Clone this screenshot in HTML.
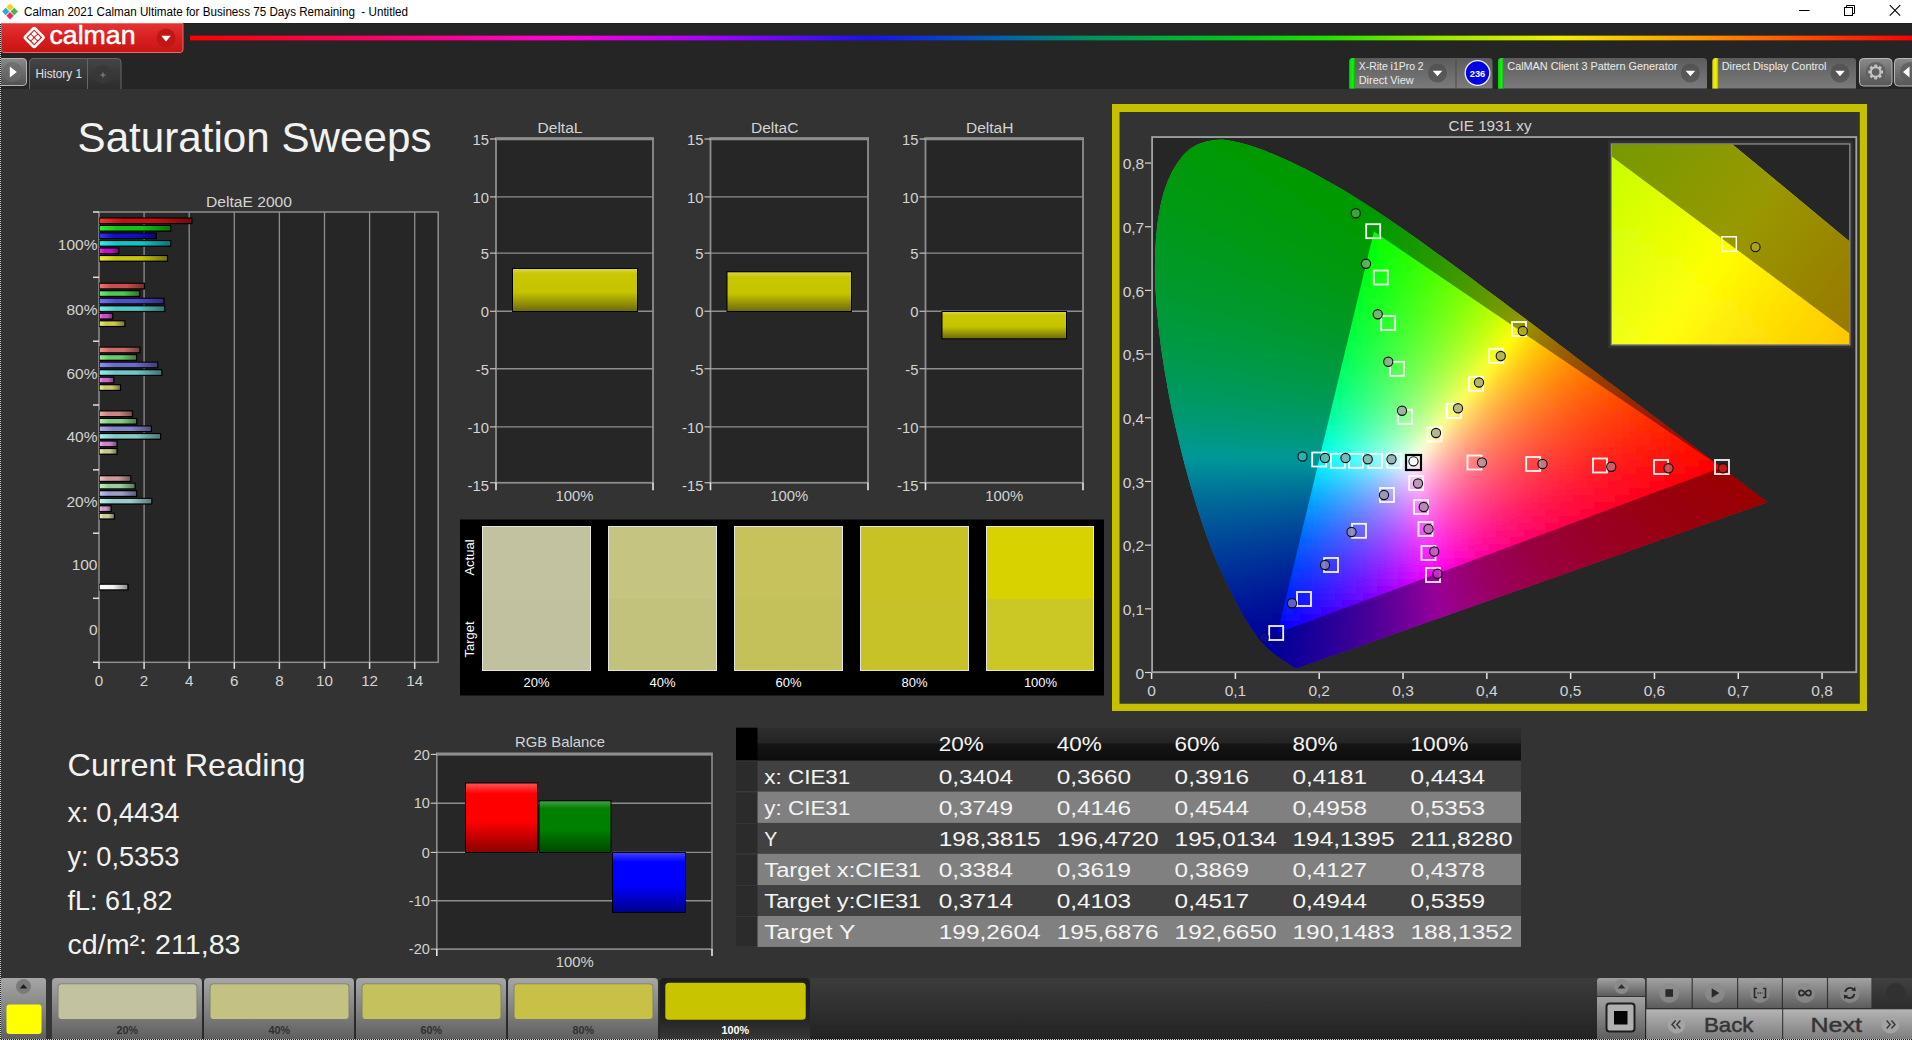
<!DOCTYPE html>
<html lang="en"><head><meta charset="utf-8"><title>Calman 2021 - Saturation Sweeps</title>
<style>
html,body{margin:0;padding:0;background:#333333;overflow:hidden}
body{width:1912px;height:1040px;position:relative;font-family:'Liberation Sans', sans-serif}
svg{display:block;position:absolute;left:0;top:0}
text{font-family:'Liberation Sans', sans-serif}
</style></head><body>
<svg width="1912" height="1040" viewBox="0 0 1912 1040">
<defs>
<linearGradient id="rb" x1="0" x2="1"><stop offset="0" stop-color="#ff0000"/><stop offset="0.1" stop-color="#ff0060"/><stop offset="0.215" stop-color="#ff00d8"/><stop offset="0.3" stop-color="#a800ff"/><stop offset="0.395" stop-color="#1a10f0"/><stop offset="0.47" stop-color="#0060b0"/><stop offset="0.52" stop-color="#009060"/><stop offset="0.6" stop-color="#00c020"/><stop offset="0.66" stop-color="#20e000"/><stop offset="0.73" stop-color="#a0e800"/><stop offset="0.795" stop-color="#f0f000"/><stop offset="0.88" stop-color="#ff9000"/><stop offset="1" stop-color="#ff0000"/></linearGradient>
<linearGradient id="rbv" x1="0" x2="0" y1="0" y2="1"><stop offset="0" stop-color="#252525"/><stop offset="0.25" stop-color="#252525" stop-opacity="0"/><stop offset="0.75" stop-color="#252525" stop-opacity="0"/><stop offset="1" stop-color="#252525"/></linearGradient>
<linearGradient id="cr" x1="0" x2="0" y1="0" y2="1"><stop offset="0" stop-color="#e23434"/><stop offset="0.5" stop-color="#d91f1f"/><stop offset="1" stop-color="#c81414"/></linearGradient>
<linearGradient id="gb" x1="0" x2="0" y1="0" y2="1"><stop offset="0" stop-color="#8a8a8a"/><stop offset="1" stop-color="#505050"/></linearGradient>
<linearGradient id="tb" x1="0" x2="0" y1="0" y2="1"><stop offset="0" stop-color="#454545"/><stop offset="1" stop-color="#2c2c2c"/></linearGradient>
<linearGradient id="pn" x1="0" x2="0" y1="0" y2="1"><stop offset="0" stop-color="#5c5c5c"/><stop offset="1" stop-color="#7b7b7b"/></linearGradient>
<linearGradient id="gs" x1="0" x2="1"><stop offset="0" stop-color="#0ad00a"/><stop offset="0.6" stop-color="#16f016"/><stop offset="1" stop-color="#0aa80a"/></linearGradient>
<linearGradient id="ys" x1="0" x2="1"><stop offset="0" stop-color="#d8d800"/><stop offset="0.6" stop-color="#f4f400"/><stop offset="1" stop-color="#b0b000"/></linearGradient>
<linearGradient id="gb2" x1="0" x2="0" y1="0" y2="1"><stop offset="0" stop-color="#8a8a8a"/><stop offset="1" stop-color="#565656"/></linearGradient>
<linearGradient id="b1" x1="0" x2="1"><stop offset="0" stop-color="rgb(236, 53, 53)"/><stop offset="0.25" stop-color="rgb(198, 15, 15)"/><stop offset="0.6" stop-color="rgb(198, 15, 15)"/><stop offset="1" stop-color="rgb(118, 9, 9)"/></linearGradient>
<linearGradient id="b2" x1="0" x2="1"><stop offset="0" stop-color="rgb(53, 236, 53)"/><stop offset="0.25" stop-color="rgb(15, 198, 15)"/><stop offset="0.6" stop-color="rgb(15, 198, 15)"/><stop offset="1" stop-color="rgb(9, 118, 9)"/></linearGradient>
<linearGradient id="b3" x1="0" x2="1"><stop offset="0" stop-color="rgb(53, 53, 236)"/><stop offset="0.25" stop-color="rgb(15, 15, 198)"/><stop offset="0.6" stop-color="rgb(15, 15, 198)"/><stop offset="1" stop-color="rgb(9, 9, 118)"/></linearGradient>
<linearGradient id="b4" x1="0" x2="1"><stop offset="0" stop-color="rgb(53, 236, 236)"/><stop offset="0.25" stop-color="rgb(15, 198, 198)"/><stop offset="0.6" stop-color="rgb(15, 198, 198)"/><stop offset="1" stop-color="rgb(9, 118, 118)"/></linearGradient>
<linearGradient id="b5" x1="0" x2="1"><stop offset="0" stop-color="rgb(236, 53, 236)"/><stop offset="0.25" stop-color="rgb(198, 15, 198)"/><stop offset="0.6" stop-color="rgb(198, 15, 198)"/><stop offset="1" stop-color="rgb(118, 9, 118)"/></linearGradient>
<linearGradient id="b6" x1="0" x2="1"><stop offset="0" stop-color="rgb(236, 236, 53)"/><stop offset="0.25" stop-color="rgb(198, 198, 15)"/><stop offset="0.6" stop-color="rgb(198, 198, 15)"/><stop offset="1" stop-color="rgb(118, 118, 9)"/></linearGradient>
<linearGradient id="b7" x1="0" x2="1"><stop offset="0" stop-color="rgb(238, 117, 117)"/><stop offset="0.25" stop-color="rgb(200, 79, 79)"/><stop offset="0.6" stop-color="rgb(200, 79, 79)"/><stop offset="1" stop-color="rgb(120, 47, 47)"/></linearGradient>
<linearGradient id="b8" x1="0" x2="1"><stop offset="0" stop-color="rgb(117, 238, 117)"/><stop offset="0.25" stop-color="rgb(79, 200, 79)"/><stop offset="0.6" stop-color="rgb(79, 200, 79)"/><stop offset="1" stop-color="rgb(47, 120, 47)"/></linearGradient>
<linearGradient id="b9" x1="0" x2="1"><stop offset="0" stop-color="rgb(117, 117, 238)"/><stop offset="0.25" stop-color="rgb(79, 79, 200)"/><stop offset="0.6" stop-color="rgb(79, 79, 200)"/><stop offset="1" stop-color="rgb(47, 47, 120)"/></linearGradient>
<linearGradient id="b10" x1="0" x2="1"><stop offset="0" stop-color="rgb(117, 238, 238)"/><stop offset="0.25" stop-color="rgb(79, 200, 200)"/><stop offset="0.6" stop-color="rgb(79, 200, 200)"/><stop offset="1" stop-color="rgb(47, 120, 120)"/></linearGradient>
<linearGradient id="b11" x1="0" x2="1"><stop offset="0" stop-color="rgb(238, 117, 238)"/><stop offset="0.25" stop-color="rgb(200, 79, 200)"/><stop offset="0.6" stop-color="rgb(200, 79, 200)"/><stop offset="1" stop-color="rgb(120, 47, 120)"/></linearGradient>
<linearGradient id="b12" x1="0" x2="1"><stop offset="0" stop-color="rgb(238, 238, 117)"/><stop offset="0.25" stop-color="rgb(200, 200, 79)"/><stop offset="0.6" stop-color="rgb(200, 200, 79)"/><stop offset="1" stop-color="rgb(120, 120, 47)"/></linearGradient>
<linearGradient id="b13" x1="0" x2="1"><stop offset="0" stop-color="rgb(239, 145, 145)"/><stop offset="0.25" stop-color="rgb(201, 107, 107)"/><stop offset="0.6" stop-color="rgb(201, 107, 107)"/><stop offset="1" stop-color="rgb(120, 64, 64)"/></linearGradient>
<linearGradient id="b14" x1="0" x2="1"><stop offset="0" stop-color="rgb(145, 239, 145)"/><stop offset="0.25" stop-color="rgb(107, 201, 107)"/><stop offset="0.6" stop-color="rgb(107, 201, 107)"/><stop offset="1" stop-color="rgb(64, 120, 64)"/></linearGradient>
<linearGradient id="b15" x1="0" x2="1"><stop offset="0" stop-color="rgb(145, 145, 239)"/><stop offset="0.25" stop-color="rgb(107, 107, 201)"/><stop offset="0.6" stop-color="rgb(107, 107, 201)"/><stop offset="1" stop-color="rgb(64, 64, 120)"/></linearGradient>
<linearGradient id="b16" x1="0" x2="1"><stop offset="0" stop-color="rgb(145, 239, 239)"/><stop offset="0.25" stop-color="rgb(107, 201, 201)"/><stop offset="0.6" stop-color="rgb(107, 201, 201)"/><stop offset="1" stop-color="rgb(64, 120, 120)"/></linearGradient>
<linearGradient id="b17" x1="0" x2="1"><stop offset="0" stop-color="rgb(239, 145, 239)"/><stop offset="0.25" stop-color="rgb(201, 107, 201)"/><stop offset="0.6" stop-color="rgb(201, 107, 201)"/><stop offset="1" stop-color="rgb(120, 64, 120)"/></linearGradient>
<linearGradient id="b18" x1="0" x2="1"><stop offset="0" stop-color="rgb(239, 239, 145)"/><stop offset="0.25" stop-color="rgb(201, 201, 107)"/><stop offset="0.6" stop-color="rgb(201, 201, 107)"/><stop offset="1" stop-color="rgb(120, 120, 64)"/></linearGradient>
<linearGradient id="b19" x1="0" x2="1"><stop offset="0" stop-color="rgb(240, 171, 171)"/><stop offset="0.25" stop-color="rgb(202, 133, 133)"/><stop offset="0.6" stop-color="rgb(202, 133, 133)"/><stop offset="1" stop-color="rgb(121, 79, 79)"/></linearGradient>
<linearGradient id="b20" x1="0" x2="1"><stop offset="0" stop-color="rgb(171, 240, 171)"/><stop offset="0.25" stop-color="rgb(133, 202, 133)"/><stop offset="0.6" stop-color="rgb(133, 202, 133)"/><stop offset="1" stop-color="rgb(79, 121, 79)"/></linearGradient>
<linearGradient id="b21" x1="0" x2="1"><stop offset="0" stop-color="rgb(171, 171, 240)"/><stop offset="0.25" stop-color="rgb(133, 133, 202)"/><stop offset="0.6" stop-color="rgb(133, 133, 202)"/><stop offset="1" stop-color="rgb(79, 79, 121)"/></linearGradient>
<linearGradient id="b22" x1="0" x2="1"><stop offset="0" stop-color="rgb(171, 240, 240)"/><stop offset="0.25" stop-color="rgb(133, 202, 202)"/><stop offset="0.6" stop-color="rgb(133, 202, 202)"/><stop offset="1" stop-color="rgb(79, 121, 121)"/></linearGradient>
<linearGradient id="b23" x1="0" x2="1"><stop offset="0" stop-color="rgb(240, 171, 240)"/><stop offset="0.25" stop-color="rgb(202, 133, 202)"/><stop offset="0.6" stop-color="rgb(202, 133, 202)"/><stop offset="1" stop-color="rgb(121, 79, 121)"/></linearGradient>
<linearGradient id="b24" x1="0" x2="1"><stop offset="0" stop-color="rgb(240, 240, 171)"/><stop offset="0.25" stop-color="rgb(202, 202, 133)"/><stop offset="0.6" stop-color="rgb(202, 202, 133)"/><stop offset="1" stop-color="rgb(121, 121, 79)"/></linearGradient>
<linearGradient id="b25" x1="0" x2="1"><stop offset="0" stop-color="rgb(241, 194, 194)"/><stop offset="0.25" stop-color="rgb(203, 156, 156)"/><stop offset="0.6" stop-color="rgb(203, 156, 156)"/><stop offset="1" stop-color="rgb(121, 93, 93)"/></linearGradient>
<linearGradient id="b26" x1="0" x2="1"><stop offset="0" stop-color="rgb(194, 241, 194)"/><stop offset="0.25" stop-color="rgb(156, 203, 156)"/><stop offset="0.6" stop-color="rgb(156, 203, 156)"/><stop offset="1" stop-color="rgb(93, 121, 93)"/></linearGradient>
<linearGradient id="b27" x1="0" x2="1"><stop offset="0" stop-color="rgb(194, 194, 241)"/><stop offset="0.25" stop-color="rgb(156, 156, 203)"/><stop offset="0.6" stop-color="rgb(156, 156, 203)"/><stop offset="1" stop-color="rgb(93, 93, 121)"/></linearGradient>
<linearGradient id="b28" x1="0" x2="1"><stop offset="0" stop-color="rgb(194, 241, 241)"/><stop offset="0.25" stop-color="rgb(156, 203, 203)"/><stop offset="0.6" stop-color="rgb(156, 203, 203)"/><stop offset="1" stop-color="rgb(93, 121, 121)"/></linearGradient>
<linearGradient id="b29" x1="0" x2="1"><stop offset="0" stop-color="rgb(241, 194, 241)"/><stop offset="0.25" stop-color="rgb(203, 156, 203)"/><stop offset="0.6" stop-color="rgb(203, 156, 203)"/><stop offset="1" stop-color="rgb(121, 93, 121)"/></linearGradient>
<linearGradient id="b30" x1="0" x2="1"><stop offset="0" stop-color="rgb(241, 241, 194)"/><stop offset="0.25" stop-color="rgb(203, 203, 156)"/><stop offset="0.6" stop-color="rgb(203, 203, 156)"/><stop offset="1" stop-color="rgb(121, 121, 93)"/></linearGradient>
<linearGradient id="bw" x1="0" x2="1"><stop offset="0" stop-color="#ffffff"/><stop offset="0.5" stop-color="#f0f0f0"/><stop offset="1" stop-color="#8a8a8a"/></linearGradient>
<linearGradient id="yb" x1="0" x2="0" y1="0" y2="1"><stop offset="0" stop-color="#d6d646"/><stop offset="0.12" stop-color="#c9c700"/><stop offset="0.55" stop-color="#c6c400"/><stop offset="1" stop-color="#6e6c0c"/></linearGradient>
<clipPath id="hs"><path d="M1297.7 668.1 L1296.0 668.2 L1295.9 668.2 L1295.8 668.2 L1295.6 668.1 L1295.4 668.0 L1295.2 668.0 L1295.0 667.9 L1294.8 667.7 L1294.5 667.6 L1294.2 667.5 L1294.0 667.3 L1293.7 667.1 L1293.3 666.9 L1293.0 666.7 L1292.6 666.4 L1292.1 666.1 L1291.7 665.8 L1291.2 665.5 L1290.7 665.1 L1290.1 664.8 L1289.6 664.4 L1288.9 663.9 L1288.3 663.5 L1287.6 663.0 L1286.8 662.5 L1286.0 661.9 L1285.0 661.3 L1284.1 660.7 L1283.0 660.0 L1281.9 659.3 L1280.8 658.6 L1279.6 657.7 L1278.3 656.8 L1277.0 655.9 L1275.6 654.8 L1274.1 653.7 L1272.5 652.4 L1270.8 651.0 L1269.1 649.6 L1267.3 647.9 L1265.3 645.9 L1263.2 643.5 L1260.9 640.9 L1258.4 637.9 L1255.8 634.5 L1253.0 630.6 L1250.1 626.3 L1247.0 621.5 L1243.6 616.0 L1240.1 609.8 L1236.4 602.9 L1232.5 595.3 L1228.3 586.7 L1223.8 577.3 L1219.1 567.0 L1214.2 555.7 L1209.4 543.4 L1204.5 529.9 L1199.6 515.3 L1194.7 499.8 L1189.8 483.3 L1185.0 465.7 L1180.3 447.0 L1175.7 427.7 L1171.5 408.3 L1167.7 388.5 L1164.2 368.2 L1161.1 347.9 L1158.7 328.2 L1156.8 308.9 L1155.5 289.9 L1154.9 271.5 L1155.1 254.0 L1156.0 237.4 L1157.7 221.4 L1160.2 206.6 L1163.4 193.2 L1167.6 181.2 L1172.6 170.6 L1178.3 161.4 L1184.4 153.8 L1191.1 148.1 L1198.5 144.1 L1206.2 141.5 L1214.1 139.9 L1222.1 139.6 L1230.5 140.7 L1239.0 142.5 L1247.5 144.8 L1256.0 147.4 L1264.6 150.6 L1273.1 154.1 L1281.4 157.7 L1289.6 161.3 L1297.6 165.2 L1305.6 169.1 L1313.5 173.2 L1321.2 177.4 L1328.9 181.7 L1336.6 186.1 L1344.2 190.6 L1351.8 195.2 L1359.4 200.0 L1367.0 204.8 L1374.5 209.7 L1382.1 214.7 L1389.6 219.8 L1397.1 224.9 L1404.5 230.1 L1412.0 235.3 L1419.5 240.6 L1427.0 246.0 L1434.5 251.4 L1442.0 256.8 L1449.5 262.3 L1457.0 267.8 L1464.5 273.3 L1471.9 278.8 L1479.4 284.4 L1486.8 290.0 L1494.3 295.5 L1501.7 301.1 L1509.2 306.7 L1516.6 312.2 L1524.0 317.8 L1531.3 323.3 L1538.6 328.8 L1545.8 334.3 L1553.0 339.8 L1560.2 345.2 L1567.3 350.6 L1574.3 355.9 L1581.3 361.2 L1588.2 366.4 L1595.0 371.6 L1601.7 376.7 L1608.3 381.7 L1614.9 386.6 L1621.3 391.5 L1627.6 396.3 L1633.8 401.0 L1639.9 405.5 L1645.8 410.0 L1651.5 414.4 L1657.0 418.6 L1662.3 422.6 L1667.5 426.5 L1672.4 430.3 L1677.2 433.9 L1681.9 437.5 L1686.4 440.9 L1690.8 444.2 L1695.0 447.4 L1699.0 450.3 L1702.7 453.2 L1706.3 455.9 L1709.7 458.4 L1713.0 460.9 L1716.1 463.2 L1719.0 465.5 L1721.7 467.6 L1724.3 469.5 L1726.8 471.4 L1729.1 473.2 L1731.3 474.8 L1733.4 476.4 L1735.3 477.9 L1737.1 479.2 L1738.9 480.6 L1740.6 481.8 L1742.1 483.0 L1743.6 484.1 L1745.0 485.2 L1746.4 486.3 L1747.7 487.2 L1748.9 488.2 L1750.1 489.1 L1751.3 490.0 L1752.3 490.8 L1753.4 491.6 L1754.3 492.3 L1755.2 493.0 L1756.1 493.6 L1756.9 494.2 L1757.7 494.8 L1758.4 495.3 L1759.0 495.8 L1759.6 496.2 L1760.2 496.7 L1760.7 497.1 L1761.2 497.5 L1761.7 497.8 L1762.1 498.1 L1762.4 498.4 L1762.7 498.6 L1763.0 498.8 L1763.5 499.2 L1764.4 499.9 L1765.6 500.8 L1766.7 501.6 L1767.5 502.2Z"/></clipPath>
<clipPath id="pl"><rect x="1153" y="138" width="702.4000000000001" height="533.3"/></clipPath>
<filter id="bl" x="-5%" y="-5%" width="110%" height="110%"><feGaussianBlur stdDeviation="4"/></filter>
<clipPath id="ic"><rect x="1612" y="144.6" width="237.20000000000005" height="199.6"/></clipPath>
<filter id="bl2" x="-10%" y="-10%" width="120%" height="120%"><feGaussianBlur stdDeviation="9"/></filter>
<clipPath id="ihs"><path d="M436.9 2415.4 L427.1 2416.2 L426.5 2416.0 L425.7 2415.8 L424.7 2415.4 L423.6 2415.0 L422.5 2414.4 L421.2 2413.7 L419.7 2413.0 L418.2 2412.1 L416.7 2411.2 L415.1 2410.1 L413.3 2408.9 L411.4 2407.6 L409.2 2406.1 L406.8 2404.4 L404.3 2402.6 L401.6 2400.7 L398.8 2398.5 L395.9 2396.3 L392.7 2393.8 L389.3 2391.2 L385.7 2388.6 L381.9 2385.7 L377.7 2382.7 L373.2 2379.4 L368.2 2375.8 L362.8 2372.0 L357.1 2367.8 L351.1 2363.4 L344.8 2358.8 L338.2 2354.0 L331.1 2348.8 L323.7 2343.0 L315.8 2336.7 L307.4 2330.0 L298.6 2322.6 L289.4 2314.4 L279.8 2305.6 L269.9 2296.3 L259.3 2285.6 L247.7 2272.6 L235.1 2257.6 L221.6 2240.8 L207.2 2221.7 L191.9 2199.4 L175.6 2174.6 L158.5 2147.3 L140.2 2116.4 L120.8 2080.8 L100.2 2040.9 L78.5 1996.9 L55.5 1948.0 L31.1 1893.1 L5.0 1832.4 L-22.7 1766.4 L-51.2 1694.2 L-79.6 1615.0 L-108.1 1528.4 L-136.9 1434.8 L-165.6 1335.0 L-193.8 1229.3 L-221.8 1116.4 L-249.9 996.6 L-276.7 872.8 L-301.1 747.9 L-323.3 620.8 L-343.9 490.5 L-361.8 360.4 L-376.0 233.8 L-386.7 110.1 L-394.3 -12.0 L-398.0 -130.2 L-397.1 -242.3 L-391.5 -349.1 L-381.6 -451.4 L-367.2 -546.6 L-348.1 -632.5 L-323.8 -709.2 L-294.6 -777.7 L-261.5 -836.8 L-225.6 -885.2 L-186.3 -921.9 L-143.4 -947.6 L-98.3 -964.4 L-52.2 -974.4 L-4.9 -976.3 L44.0 -969.6 L93.8 -957.6 L143.4 -943.3 L193.0 -926.6 L243.1 -906.1 L292.9 -883.4 L341.8 -860.3 L389.6 -836.9 L436.6 -812.4 L483.0 -787.0 L529.0 -760.9 L574.5 -734.1 L619.5 -706.5 L664.2 -678.2 L708.8 -649.3 L753.4 -619.5 L797.8 -589.1 L842.1 -558.1 L886.2 -526.6 L930.2 -494.5 L974.1 -462.0 L1017.8 -429.0 L1061.6 -395.7 L1105.4 -362.0 L1149.1 -328.0 L1192.8 -293.6 L1236.5 -259.1 L1280.4 -224.2 L1324.3 -189.1 L1368.2 -153.8 L1412.0 -118.4 L1455.7 -82.8 L1499.3 -47.1 L1542.9 -11.4 L1586.4 24.4 L1629.9 60.1 L1673.4 95.8 L1716.8 131.5 L1759.9 167.1 L1802.7 202.6 L1845.4 238.0 L1887.8 273.2 L1929.9 308.2 L1971.7 343.0 L2013.2 377.5 L2054.3 411.8 L2095.0 445.6 L2135.3 479.2 L2175.2 512.4 L2214.5 545.1 L2253.3 577.3 L2291.5 609.0 L2329.2 640.2 L2366.2 670.9 L2402.3 700.9 L2437.5 730.2 L2472.1 759.1 L2505.6 787.1 L2538.0 814.1 L2569.1 840.0 L2599.0 864.9 L2628.0 889.0 L2656.1 912.3 L2683.5 935.1 L2710.0 957.1 L2735.6 978.4 L2760.0 998.6 L2783.1 1017.8 L2805.2 1035.9 L2826.2 1053.2 L2846.2 1069.8 L2865.2 1085.6 L2883.1 1100.5 L2900.1 1114.8 L2916.3 1128.3 L2931.5 1141.0 L2945.8 1152.9 L2959.3 1164.2 L2972.1 1174.9 L2984.3 1184.9 L2995.7 1194.3 L3006.5 1203.2 L3016.7 1211.7 L3026.4 1219.8 L3035.5 1227.4 L3044.2 1234.6 L3052.5 1241.6 L3060.5 1248.2 L3068.1 1254.6 L3075.4 1260.7 L3082.4 1266.5 L3089.0 1272.0 L3095.3 1277.3 L3101.2 1282.3 L3106.9 1287.0 L3112.2 1291.3 L3117.3 1295.4 L3122.0 1299.3 L3126.5 1302.9 L3130.6 1306.3 L3134.4 1309.4 L3137.9 1312.4 L3141.2 1315.2 L3144.3 1317.8 L3147.2 1320.2 L3149.9 1322.5 L3152.4 1324.6 L3154.4 1326.2 L3155.9 1327.4 L3157.7 1329.0 L3160.8 1331.5 L3166.0 1335.9 L3172.8 1341.6 L3179.3 1347.0 L3183.8 1350.8Z"/></clipPath>
<linearGradient id="vr" x1="0" x2="0" y1="0" y2="1"><stop offset="0" stop-color="#ff5050"/><stop offset="0.15" stop-color="#ff0000"/><stop offset="0.55" stop-color="#ff0000"/><stop offset="1" stop-color="#8c0000"/></linearGradient>
<linearGradient id="vg" x1="0" x2="0" y1="0" y2="1"><stop offset="0" stop-color="#40a040"/><stop offset="0.15" stop-color="#008000"/><stop offset="0.55" stop-color="#008000"/><stop offset="1" stop-color="#004800"/></linearGradient>
<linearGradient id="vb" x1="0" x2="0" y1="0" y2="1"><stop offset="0" stop-color="#4040ff"/><stop offset="0.15" stop-color="#0000ff"/><stop offset="0.55" stop-color="#0000ff"/><stop offset="1" stop-color="#00008c"/></linearGradient>
<linearGradient id="th" x1="0" x2="0" y1="0" y2="1"><stop offset="0" stop-color="#2e2e2e"/><stop offset="0.45" stop-color="#242424"/><stop offset="0.5" stop-color="#151515"/><stop offset="1" stop-color="#0c0c0c"/></linearGradient>
<linearGradient id="bs" x1="0" x2="0" y1="0" y2="1"><stop offset="0" stop-color="#3c3c3c"/><stop offset="1" stop-color="#222222"/></linearGradient>
<linearGradient id="tl" x1="0" x2="0" y1="0" y2="1"><stop offset="0" stop-color="#a6a6a6"/><stop offset="0.5" stop-color="#848484"/><stop offset="1" stop-color="#5e5e5e"/></linearGradient>
<linearGradient id="tls" x1="0" x2="0" y1="0" y2="1"><stop offset="0" stop-color="#1e1e1e"/><stop offset="0.6" stop-color="#222"/><stop offset="1" stop-color="#383838"/></linearGradient>
<linearGradient id="cb" x1="0" x2="0" y1="0" y2="1"><stop offset="0" stop-color="#a2a2a2"/><stop offset="1" stop-color="#5c5c5c"/></linearGradient>
<linearGradient id="cb2" x1="0" x2="0" y1="0" y2="1"><stop offset="0" stop-color="#b4b4b4"/><stop offset="1" stop-color="#7c7c7c"/></linearGradient>
<linearGradient id="dk" x1="0" x2="0" y1="0" y2="1"><stop offset="0" stop-color="#414141"/><stop offset="1" stop-color="#2c2c2c"/></linearGradient>
</defs>
<rect x="0" y="0" width="1912" height="23" fill="#ffffff" />
<g transform="translate(10,11.5) rotate(45)"><rect x="-5.6" y="-5.6" width="5.2" height="5.2" fill="#f4d21c"/><rect x="0.4" y="-5.6" width="5.2" height="5.2" fill="#43b649"/><rect x="-5.6" y="0.4" width="5.2" height="5.2" fill="#27a9e1"/><rect x="0.4" y="0.4" width="5.2" height="5.2" fill="#ec2a5b"/></g>
<text x="24" y="15.8" font-size="12" fill="#000000" textLength="384" lengthAdjust="spacingAndGlyphs">Calman 2021 Calman Ultimate for Business 75 Days Remaining&#160; - Untitled</text>
<line x1="1799" y1="10.5" x2="1809.5" y2="10.5" stroke="#000" stroke-width="1" />
<rect x="1844.5" y="7.5" width="8" height="8" fill="none" stroke="#000" stroke-width="1"/><path d="M1846.5 7.5v-2h8v8h-2" fill="none" stroke="#000" stroke-width="1"/>
<path d="M1889.8 5.2l10.4 10.4M1900.2 5.2l-10.4 10.4" stroke="#000" stroke-width="1.1" fill="none"/>
<rect x="0" y="23" width="1912" height="66" fill="#252525" />
<line x1="0" y1="23.5" x2="1912" y2="23.5" stroke="#1a1a1a" stroke-width="1" stroke-dasharray="1 1"/>
<rect x="190" y="35" width="1722" height="6" fill="url(#rb)" />
<rect x="190" y="35" width="1722" height="6" fill="url(#rbv)" />
<path d="M1 23.5H183V49.5a3 3 0 0 1 -3 3H4a3 3 0 0 1 -3 -3Z" fill="url(#cr)" stroke="#ea6a6a" stroke-width="1"/>
<g transform="translate(34.2,37.5) rotate(45)" fill="none" stroke="#fff"><rect x="-7" y="-7" width="14" height="14" rx="1.6" stroke-width="2.6"/><rect x="-4.5" y="-4.5" width="4" height="4" rx="0.6" fill="#fff" stroke="none"/><rect x="0.5" y="-4.5" width="4" height="4" rx="0.6" fill="#fff" stroke="none"/><rect x="-4.5" y="0.5" width="4" height="4" rx="0.6" fill="#fff" stroke="none"/><rect x="0.5" y="0.5" width="4" height="4" rx="0.6" fill="#fff" stroke="none"/></g>
<text x="49.5" y="43.8" font-size="25.5" fill="#ffffff" textLength="86" lengthAdjust="spacingAndGlyphs" stroke="#fff" stroke-width="0.5">calman</text>
<circle cx="166" cy="38" r="9.5" fill="#c01616"/><path d="M161.2 35.8h9.6l-4.8 5.6z" fill="#fff"/>
<rect x="-3" y="58.5" width="29.5" height="27" rx="3.5" fill="url(#gb)" stroke="#b4b4b4" stroke-width="1"/><circle cx="12.5" cy="72" r="10" fill="#6a6a6a" opacity="0.7"/><path d="M9.8 66.6v10.8l7-5.4z" fill="#fff"/>
<path d="M29.5 89V62a3.5 3.5 0 0 1 3.5 -3.5H117.5a3.5 3.5 0 0 1 3.5 3.5V89" fill="url(#tb)" stroke="#666" stroke-width="1"/>
<line x1="87.5" y1="59" x2="87.5" y2="89" stroke="#666" stroke-width="1" />
<text x="35.5" y="78" font-size="12" fill="#e2e2e2" textLength="46.5" lengthAdjust="spacingAndGlyphs">History 1</text>
<circle cx="103" cy="74.5" r="9.3" fill="#383838"/><path d="M100.5 75h5M103 72.5v5" stroke="#8a8a8a" stroke-width="1"/>
<path d="M1349.3 88.5V61.5a3.5 3.5 0 0 1 3.5 -3.5H1489.0a3.5 3.5 0 0 1 3.5 3.5V88.5Z" fill="url(#pn)"/>
<path d="M1349.3 88.5V61.5a3.5 3.5 0 0 1 3.5 -3.5H1355.1V88.5Z" fill="url(#gs)"/>
<text x="1358.7" y="70" font-size="10.8" fill="#ececec" textLength="65" lengthAdjust="spacingAndGlyphs">X-Rite i1Pro 2</text>
<text x="1358.7" y="84.2" font-size="10.8" fill="#ececec" textLength="55" lengthAdjust="spacingAndGlyphs">Direct View</text>
<circle cx="1437.5" cy="73" r="9.5" fill="#4c4c4c" opacity="0.65"/><path d="M1432.7 70.8h9.6l-4.8 5.4z" fill="#fff"/>
<line x1="1456" y1="59" x2="1456" y2="88.5" stroke="#4c4c4c" stroke-width="1" />
<circle cx="1477.5" cy="73" r="12.3" fill="#0000e6" stroke="#f0f0f0" stroke-width="1.3"/>
<text x="1477.5" y="76.6" font-size="9.8" fill="#ffffff" text-anchor="middle" textLength="15.5" lengthAdjust="spacingAndGlyphs" font-weight="bold">236</text>
<path d="M1498 88.5V61.5a3.5 3.5 0 0 1 3.5 -3.5H1703.5a3.5 3.5 0 0 1 3.5 3.5V88.5Z" fill="url(#pn)"/>
<path d="M1498 88.5V61.5a3.5 3.5 0 0 1 3.5 -3.5H1503.8V88.5Z" fill="url(#gs)"/>
<text x="1507.3" y="70" font-size="10.8" fill="#ececec" textLength="170" lengthAdjust="spacingAndGlyphs">CalMAN Client 3 Pattern Generator</text>
<circle cx="1690.4" cy="73" r="9.5" fill="#4c4c4c" opacity="0.65"/><path d="M1685.6000000000001 70.8h9.6l-4.8 5.4z" fill="#fff"/>
<path d="M1712.4 88.5V61.5a3.5 3.5 0 0 1 3.5 -3.5H1852.5a3.5 3.5 0 0 1 3.5 3.5V88.5Z" fill="url(#pn)"/>
<path d="M1712.4 88.5V61.5a3.5 3.5 0 0 1 3.5 -3.5H1718.2V88.5Z" fill="url(#ys)"/>
<text x="1721.7" y="70" font-size="10.8" fill="#ececec" textLength="104.8" lengthAdjust="spacingAndGlyphs">Direct Display Control</text>
<circle cx="1840" cy="73" r="9.5" fill="#4c4c4c" opacity="0.65"/><path d="M1835.2 70.8h9.6l-4.8 5.4z" fill="#fff"/>
<rect x="1859.5" y="58.5" width="32.5" height="27.5" rx="4" fill="url(#gb2)" stroke="#b8b8b8" stroke-width="1"/>
<circle cx="1875.7" cy="72" r="10" fill="#5c5c5c" opacity="0.8"/>
<g transform="translate(1875.7,72)" fill="#c4c4c4"><rect x="-1.5" y="-7.4" width="3" height="3.2" transform="rotate(0)"/><rect x="-1.5" y="-7.4" width="3" height="3.2" transform="rotate(45)"/><rect x="-1.5" y="-7.4" width="3" height="3.2" transform="rotate(90)"/><rect x="-1.5" y="-7.4" width="3" height="3.2" transform="rotate(135)"/><rect x="-1.5" y="-7.4" width="3" height="3.2" transform="rotate(180)"/><rect x="-1.5" y="-7.4" width="3" height="3.2" transform="rotate(225)"/><rect x="-1.5" y="-7.4" width="3" height="3.2" transform="rotate(270)"/><rect x="-1.5" y="-7.4" width="3" height="3.2" transform="rotate(315)"/><circle r="4.8" fill="none" stroke="#c4c4c4" stroke-width="2"/></g>
<rect x="1894.5" y="58.5" width="32" height="27.5" rx="4" fill="url(#gb2)" stroke="#b8b8b8" stroke-width="1"/>
<circle cx="1910" cy="72" r="10" fill="#5c5c5c" opacity="0.8"/><path d="M1909.5 66.5v11l-6.5 -5.5z" fill="#fff"/>
<rect x="0" y="89" width="1912" height="889" fill="#333333" />
<text x="77.5" y="152" font-size="42.5" fill="#f2f2f2" textLength="354" lengthAdjust="spacingAndGlyphs">Saturation Sweeps</text>
<text x="249" y="207" font-size="15.5" fill="#d4d4d4" text-anchor="middle" textLength="86" lengthAdjust="spacingAndGlyphs">DeltaE 2000</text>
<rect x="99" y="212" width="339.2" height="450.29999999999995" fill="#262626" />
<line x1="144.1" y1="212" x2="144.1" y2="662.3" stroke="#8e8e8e" stroke-width="1.3" />
<line x1="189.2" y1="212" x2="189.2" y2="662.3" stroke="#8e8e8e" stroke-width="1.3" />
<line x1="234.3" y1="212" x2="234.3" y2="662.3" stroke="#8e8e8e" stroke-width="1.3" />
<line x1="279.4" y1="212" x2="279.4" y2="662.3" stroke="#8e8e8e" stroke-width="1.3" />
<line x1="324.5" y1="212" x2="324.5" y2="662.3" stroke="#8e8e8e" stroke-width="1.3" />
<line x1="369.6" y1="212" x2="369.6" y2="662.3" stroke="#8e8e8e" stroke-width="1.3" />
<line x1="414.7" y1="212" x2="414.7" y2="662.3" stroke="#8e8e8e" stroke-width="1.3" />
<rect x="99" y="212" width="339.2" height="450.29999999999995" fill="none" stroke="#8e8e8e" stroke-width="1.5"/>
<line x1="99.0" y1="662.3" x2="99.0" y2="668.9" stroke="#e0e0e0" stroke-width="1.5" />
<text x="99.0" y="686.2" font-size="15.2" fill="#d4d4d4" text-anchor="middle">0</text>
<line x1="144.1" y1="662.3" x2="144.1" y2="668.9" stroke="#e0e0e0" stroke-width="1.5" />
<text x="144.1" y="686.2" font-size="15.2" fill="#d4d4d4" text-anchor="middle">2</text>
<line x1="189.2" y1="662.3" x2="189.2" y2="668.9" stroke="#e0e0e0" stroke-width="1.5" />
<text x="189.2" y="686.2" font-size="15.2" fill="#d4d4d4" text-anchor="middle">4</text>
<line x1="234.3" y1="662.3" x2="234.3" y2="668.9" stroke="#e0e0e0" stroke-width="1.5" />
<text x="234.3" y="686.2" font-size="15.2" fill="#d4d4d4" text-anchor="middle">6</text>
<line x1="279.4" y1="662.3" x2="279.4" y2="668.9" stroke="#e0e0e0" stroke-width="1.5" />
<text x="279.4" y="686.2" font-size="15.2" fill="#d4d4d4" text-anchor="middle">8</text>
<line x1="324.5" y1="662.3" x2="324.5" y2="668.9" stroke="#e0e0e0" stroke-width="1.5" />
<text x="324.5" y="686.2" font-size="15.2" fill="#d4d4d4" text-anchor="middle">10</text>
<line x1="369.6" y1="662.3" x2="369.6" y2="668.9" stroke="#e0e0e0" stroke-width="1.5" />
<text x="369.6" y="686.2" font-size="15.2" fill="#d4d4d4" text-anchor="middle">12</text>
<line x1="414.7" y1="662.3" x2="414.7" y2="668.9" stroke="#e0e0e0" stroke-width="1.5" />
<text x="414.7" y="686.2" font-size="15.2" fill="#d4d4d4" text-anchor="middle">14</text>
<line x1="93" y1="212" x2="99" y2="212" stroke="#e0e0e0" stroke-width="1.5" />
<line x1="93" y1="277.3" x2="99" y2="277.3" stroke="#e0e0e0" stroke-width="1.5" />
<line x1="93" y1="341.2" x2="99" y2="341.2" stroke="#e0e0e0" stroke-width="1.5" />
<line x1="93" y1="405" x2="99" y2="405" stroke="#e0e0e0" stroke-width="1.5" />
<line x1="93" y1="469.8" x2="99" y2="469.8" stroke="#e0e0e0" stroke-width="1.5" />
<line x1="93" y1="533.2" x2="99" y2="533.2" stroke="#e0e0e0" stroke-width="1.5" />
<line x1="93" y1="598.3" x2="99" y2="598.3" stroke="#e0e0e0" stroke-width="1.5" />
<line x1="93" y1="662.3" x2="99" y2="662.3" stroke="#e0e0e0" stroke-width="1.5" />
<text x="97.5" y="250.1" font-size="15.5" fill="#d4d4d4" text-anchor="end">100%</text>
<text x="97.5" y="315.40000000000003" font-size="15.5" fill="#d4d4d4" text-anchor="end">80%</text>
<text x="97.5" y="379.3" font-size="15.5" fill="#d4d4d4" text-anchor="end">60%</text>
<text x="97.5" y="442.3" font-size="15.5" fill="#d4d4d4" text-anchor="end">40%</text>
<text x="97.5" y="507.1" font-size="15.5" fill="#d4d4d4" text-anchor="end">20%</text>
<text x="97.5" y="570.3000000000001" font-size="15.5" fill="#d4d4d4" text-anchor="end">100</text>
<text x="97.5" y="635.4" font-size="15.5" fill="#d4d4d4" text-anchor="end">0</text>
<rect x="99.2" y="217.4" width="93.3" height="6.8" fill="#000"/>
<rect x="99.8" y="218.5" width="91.5" height="4.5" fill="url(#b1)"/>
<rect x="99.2" y="224.9" width="72.1" height="6.8" fill="#000"/>
<rect x="99.8" y="226.0" width="70.3" height="4.5" fill="url(#b2)"/>
<rect x="99.2" y="232.4" width="57.7" height="6.8" fill="#000"/>
<rect x="99.8" y="233.5" width="55.9" height="4.5" fill="url(#b3)"/>
<rect x="99.2" y="240.0" width="72.1" height="6.8" fill="#000"/>
<rect x="99.8" y="241.1" width="70.3" height="4.5" fill="url(#b4)"/>
<rect x="99.2" y="247.5" width="20.2" height="6.8" fill="#000"/>
<rect x="99.8" y="248.6" width="18.4" height="4.5" fill="url(#b5)"/>
<rect x="99.2" y="255.0" width="68.9" height="6.8" fill="#000"/>
<rect x="99.8" y="256.1" width="67.1" height="4.5" fill="url(#b6)"/>
<rect x="99.2" y="282.7" width="45.9" height="6.8" fill="#000"/>
<rect x="99.8" y="283.8" width="44.1" height="4.5" fill="url(#b7)"/>
<rect x="99.2" y="290.2" width="41.1" height="6.8" fill="#000"/>
<rect x="99.8" y="291.3" width="39.3" height="4.5" fill="url(#b8)"/>
<rect x="99.2" y="297.7" width="65.4" height="6.8" fill="#000"/>
<rect x="99.8" y="298.8" width="63.6" height="4.5" fill="url(#b9)"/>
<rect x="99.2" y="305.3" width="66.2" height="6.8" fill="#000"/>
<rect x="99.8" y="306.4" width="64.4" height="4.5" fill="url(#b10)"/>
<rect x="99.2" y="312.8" width="14.2" height="6.8" fill="#000"/>
<rect x="99.8" y="313.9" width="12.4" height="4.5" fill="url(#b11)"/>
<rect x="99.2" y="320.3" width="26.3" height="6.8" fill="#000"/>
<rect x="99.8" y="321.4" width="24.5" height="4.5" fill="url(#b12)"/>
<rect x="99.2" y="346.6" width="41.3" height="6.8" fill="#000"/>
<rect x="99.8" y="347.7" width="39.5" height="4.5" fill="url(#b13)"/>
<rect x="99.2" y="354.1" width="38.1" height="6.8" fill="#000"/>
<rect x="99.8" y="355.2" width="36.3" height="4.5" fill="url(#b14)"/>
<rect x="99.2" y="361.6" width="59.2" height="6.8" fill="#000"/>
<rect x="99.8" y="362.7" width="57.4" height="4.5" fill="url(#b15)"/>
<rect x="99.2" y="369.2" width="63.2" height="6.8" fill="#000"/>
<rect x="99.8" y="370.3" width="61.4" height="4.5" fill="url(#b16)"/>
<rect x="99.2" y="376.7" width="15.3" height="6.8" fill="#000"/>
<rect x="99.8" y="377.8" width="13.5" height="4.5" fill="url(#b17)"/>
<rect x="99.2" y="384.2" width="21.9" height="6.8" fill="#000"/>
<rect x="99.8" y="385.3" width="20.1" height="4.5" fill="url(#b18)"/>
<rect x="99.2" y="410.4" width="33.9" height="6.8" fill="#000"/>
<rect x="99.8" y="411.5" width="32.1" height="4.5" fill="url(#b19)"/>
<rect x="99.2" y="417.9" width="38.1" height="6.8" fill="#000"/>
<rect x="99.8" y="419.0" width="36.3" height="4.5" fill="url(#b20)"/>
<rect x="99.2" y="425.4" width="52.8" height="6.8" fill="#000"/>
<rect x="99.8" y="426.5" width="51.0" height="4.5" fill="url(#b21)"/>
<rect x="99.2" y="433.0" width="62.0" height="6.8" fill="#000"/>
<rect x="99.8" y="434.1" width="60.2" height="4.5" fill="url(#b22)"/>
<rect x="99.2" y="440.5" width="18.5" height="6.8" fill="#000"/>
<rect x="99.8" y="441.6" width="16.7" height="4.5" fill="url(#b23)"/>
<rect x="99.2" y="448.0" width="18.5" height="6.8" fill="#000"/>
<rect x="99.8" y="449.1" width="16.7" height="4.5" fill="url(#b24)"/>
<rect x="99.2" y="475.2" width="32.2" height="6.8" fill="#000"/>
<rect x="99.8" y="476.3" width="30.4" height="4.5" fill="url(#b25)"/>
<rect x="99.2" y="482.7" width="36.5" height="6.8" fill="#000"/>
<rect x="99.8" y="483.8" width="34.7" height="4.5" fill="url(#b26)"/>
<rect x="99.2" y="490.2" width="38.1" height="6.8" fill="#000"/>
<rect x="99.8" y="491.3" width="36.3" height="4.5" fill="url(#b27)"/>
<rect x="99.2" y="497.8" width="53.2" height="6.8" fill="#000"/>
<rect x="99.8" y="498.9" width="51.4" height="4.5" fill="url(#b28)"/>
<rect x="99.2" y="505.3" width="12.6" height="6.8" fill="#000"/>
<rect x="99.8" y="506.4" width="10.8" height="4.5" fill="url(#b29)"/>
<rect x="99.2" y="512.8" width="15.9" height="6.8" fill="#000"/>
<rect x="99.8" y="513.9" width="14.1" height="4.5" fill="url(#b30)"/>
<rect x="99.2" y="583.7" width="29.5" height="6.8" fill="#000"/>
<rect x="99.8" y="584.8" width="27.5" height="4.5" fill="url(#bw)"/>
<rect x="496" y="139" width="157" height="343.75" fill="#262626" />
<line x1="496" y1="196.9" x2="653" y2="196.9" stroke="#8e8e8e" stroke-width="1.4" />
<line x1="496" y1="253.1" x2="653" y2="253.1" stroke="#8e8e8e" stroke-width="1.4" />
<line x1="496" y1="311.25" x2="653" y2="311.25" stroke="#8e8e8e" stroke-width="1.4" />
<line x1="496" y1="368.75" x2="653" y2="368.75" stroke="#8e8e8e" stroke-width="1.4" />
<line x1="496" y1="426.9" x2="653" y2="426.9" stroke="#8e8e8e" stroke-width="1.4" />
<rect x="496" y="138.4" width="157" height="344.35" fill="none" stroke="#8e8e8e" stroke-width="1.8"/>
<line x1="495.1" y1="138.7" x2="653.9" y2="138.7" stroke="#8e8e8e" stroke-width="3" />
<line x1="490" y1="139" x2="496" y2="139" stroke="#d0d0d0" stroke-width="1.1" />
<text x="489" y="145.2" font-size="14.8" fill="#d4d4d4" text-anchor="end">15</text>
<line x1="490" y1="196.9" x2="496" y2="196.9" stroke="#d0d0d0" stroke-width="1.1" />
<text x="489" y="203.1" font-size="14.8" fill="#d4d4d4" text-anchor="end">10</text>
<line x1="490" y1="253.1" x2="496" y2="253.1" stroke="#d0d0d0" stroke-width="1.1" />
<text x="489" y="259.3" font-size="14.8" fill="#d4d4d4" text-anchor="end">5</text>
<line x1="490" y1="311.25" x2="496" y2="311.25" stroke="#d0d0d0" stroke-width="1.1" />
<text x="489" y="317.45" font-size="14.8" fill="#d4d4d4" text-anchor="end">0</text>
<line x1="490" y1="368.75" x2="496" y2="368.75" stroke="#d0d0d0" stroke-width="1.1" />
<text x="489" y="374.95" font-size="14.8" fill="#d4d4d4" text-anchor="end">-5</text>
<line x1="490" y1="426.9" x2="496" y2="426.9" stroke="#d0d0d0" stroke-width="1.1" />
<text x="489" y="433.09999999999997" font-size="14.8" fill="#d4d4d4" text-anchor="end">-10</text>
<line x1="490" y1="482.75" x2="496" y2="482.75" stroke="#d0d0d0" stroke-width="1.1" />
<text x="489" y="490.95" font-size="14.8" fill="#d4d4d4" text-anchor="end">-15</text>
<line x1="496" y1="482.75" x2="496" y2="490.25" stroke="#e6e6e6" stroke-width="1.6" />
<line x1="653" y1="482.75" x2="653" y2="490.25" stroke="#e6e6e6" stroke-width="1.6" />
<text x="560.0" y="133" font-size="15.5" fill="#d4d4d4" text-anchor="middle">DeltaL</text>
<text x="574.5" y="500.6" font-size="14.5" fill="#d4d4d4" text-anchor="middle" textLength="38" lengthAdjust="spacingAndGlyphs">100%</text>
<rect x="512" y="268" width="126" height="44" fill="#000"/>
<rect x="513" y="269" width="124" height="42" fill="url(#yb)"/>
<rect x="710.5" y="139" width="157.5" height="343.75" fill="#262626" />
<line x1="710.5" y1="196.9" x2="868" y2="196.9" stroke="#8e8e8e" stroke-width="1.4" />
<line x1="710.5" y1="253.1" x2="868" y2="253.1" stroke="#8e8e8e" stroke-width="1.4" />
<line x1="710.5" y1="311.25" x2="868" y2="311.25" stroke="#8e8e8e" stroke-width="1.4" />
<line x1="710.5" y1="368.75" x2="868" y2="368.75" stroke="#8e8e8e" stroke-width="1.4" />
<line x1="710.5" y1="426.9" x2="868" y2="426.9" stroke="#8e8e8e" stroke-width="1.4" />
<rect x="710.5" y="138.4" width="157.5" height="344.35" fill="none" stroke="#8e8e8e" stroke-width="1.8"/>
<line x1="709.6" y1="138.7" x2="868.9" y2="138.7" stroke="#8e8e8e" stroke-width="3" />
<line x1="704.5" y1="139" x2="710.5" y2="139" stroke="#d0d0d0" stroke-width="1.1" />
<text x="703.5" y="145.2" font-size="14.8" fill="#d4d4d4" text-anchor="end">15</text>
<line x1="704.5" y1="196.9" x2="710.5" y2="196.9" stroke="#d0d0d0" stroke-width="1.1" />
<text x="703.5" y="203.1" font-size="14.8" fill="#d4d4d4" text-anchor="end">10</text>
<line x1="704.5" y1="253.1" x2="710.5" y2="253.1" stroke="#d0d0d0" stroke-width="1.1" />
<text x="703.5" y="259.3" font-size="14.8" fill="#d4d4d4" text-anchor="end">5</text>
<line x1="704.5" y1="311.25" x2="710.5" y2="311.25" stroke="#d0d0d0" stroke-width="1.1" />
<text x="703.5" y="317.45" font-size="14.8" fill="#d4d4d4" text-anchor="end">0</text>
<line x1="704.5" y1="368.75" x2="710.5" y2="368.75" stroke="#d0d0d0" stroke-width="1.1" />
<text x="703.5" y="374.95" font-size="14.8" fill="#d4d4d4" text-anchor="end">-5</text>
<line x1="704.5" y1="426.9" x2="710.5" y2="426.9" stroke="#d0d0d0" stroke-width="1.1" />
<text x="703.5" y="433.09999999999997" font-size="14.8" fill="#d4d4d4" text-anchor="end">-10</text>
<line x1="704.5" y1="482.75" x2="710.5" y2="482.75" stroke="#d0d0d0" stroke-width="1.1" />
<text x="703.5" y="490.95" font-size="14.8" fill="#d4d4d4" text-anchor="end">-15</text>
<line x1="710.5" y1="482.75" x2="710.5" y2="490.25" stroke="#e6e6e6" stroke-width="1.6" />
<line x1="868" y1="482.75" x2="868" y2="490.25" stroke="#e6e6e6" stroke-width="1.6" />
<text x="774.75" y="133" font-size="15.5" fill="#d4d4d4" text-anchor="middle">DeltaC</text>
<text x="789.25" y="500.6" font-size="14.5" fill="#d4d4d4" text-anchor="middle" textLength="38" lengthAdjust="spacingAndGlyphs">100%</text>
<rect x="726.5" y="271.3" width="125.5" height="40.69999999999999" fill="#000"/>
<rect x="727.5" y="272.3" width="123.5" height="38.69999999999999" fill="url(#yb)"/>
<rect x="925.5" y="139" width="157.5" height="343.75" fill="#262626" />
<line x1="925.5" y1="196.9" x2="1083" y2="196.9" stroke="#8e8e8e" stroke-width="1.4" />
<line x1="925.5" y1="253.1" x2="1083" y2="253.1" stroke="#8e8e8e" stroke-width="1.4" />
<line x1="925.5" y1="311.25" x2="1083" y2="311.25" stroke="#8e8e8e" stroke-width="1.4" />
<line x1="925.5" y1="368.75" x2="1083" y2="368.75" stroke="#8e8e8e" stroke-width="1.4" />
<line x1="925.5" y1="426.9" x2="1083" y2="426.9" stroke="#8e8e8e" stroke-width="1.4" />
<rect x="925.5" y="138.4" width="157.5" height="344.35" fill="none" stroke="#8e8e8e" stroke-width="1.8"/>
<line x1="924.6" y1="138.7" x2="1083.9" y2="138.7" stroke="#8e8e8e" stroke-width="3" />
<line x1="919.5" y1="139" x2="925.5" y2="139" stroke="#d0d0d0" stroke-width="1.1" />
<text x="918.5" y="145.2" font-size="14.8" fill="#d4d4d4" text-anchor="end">15</text>
<line x1="919.5" y1="196.9" x2="925.5" y2="196.9" stroke="#d0d0d0" stroke-width="1.1" />
<text x="918.5" y="203.1" font-size="14.8" fill="#d4d4d4" text-anchor="end">10</text>
<line x1="919.5" y1="253.1" x2="925.5" y2="253.1" stroke="#d0d0d0" stroke-width="1.1" />
<text x="918.5" y="259.3" font-size="14.8" fill="#d4d4d4" text-anchor="end">5</text>
<line x1="919.5" y1="311.25" x2="925.5" y2="311.25" stroke="#d0d0d0" stroke-width="1.1" />
<text x="918.5" y="317.45" font-size="14.8" fill="#d4d4d4" text-anchor="end">0</text>
<line x1="919.5" y1="368.75" x2="925.5" y2="368.75" stroke="#d0d0d0" stroke-width="1.1" />
<text x="918.5" y="374.95" font-size="14.8" fill="#d4d4d4" text-anchor="end">-5</text>
<line x1="919.5" y1="426.9" x2="925.5" y2="426.9" stroke="#d0d0d0" stroke-width="1.1" />
<text x="918.5" y="433.09999999999997" font-size="14.8" fill="#d4d4d4" text-anchor="end">-10</text>
<line x1="919.5" y1="482.75" x2="925.5" y2="482.75" stroke="#d0d0d0" stroke-width="1.1" />
<text x="918.5" y="490.95" font-size="14.8" fill="#d4d4d4" text-anchor="end">-15</text>
<line x1="925.5" y1="482.75" x2="925.5" y2="490.25" stroke="#e6e6e6" stroke-width="1.6" />
<line x1="1083" y1="482.75" x2="1083" y2="490.25" stroke="#e6e6e6" stroke-width="1.6" />
<text x="989.75" y="133" font-size="15.5" fill="#d4d4d4" text-anchor="middle">DeltaH</text>
<text x="1004.25" y="500.6" font-size="14.5" fill="#d4d4d4" text-anchor="middle" textLength="38" lengthAdjust="spacingAndGlyphs">100%</text>
<rect x="941.5" y="311" width="125.5" height="28.30000000000001" fill="#000"/>
<rect x="942.5" y="312" width="123.5" height="26.30000000000001" fill="url(#yb)"/>
<rect x="460" y="519.5" width="644" height="176" fill="#000000" />
<rect x="482" y="526" width="109" height="73.5" fill="rgb(194, 194, 161)" />
<rect x="482" y="599" width="109" height="71.5" fill="rgb(193, 193, 159)" />
<rect x="482.5" y="526.5" width="108" height="144" fill="none" stroke="#e4e4dc" stroke-width="1"/>
<text x="536.5" y="686.5" font-size="13" fill="#ffffff" text-anchor="middle">20%</text>
<rect x="608" y="526" width="109" height="73.5" fill="rgb(197, 196, 129)" />
<rect x="608" y="599" width="109" height="71.5" fill="rgb(195, 194, 124)" />
<rect x="608.5" y="526.5" width="108" height="144" fill="none" stroke="#e4e4dc" stroke-width="1"/>
<text x="662.5" y="686.5" font-size="13" fill="#ffffff" text-anchor="middle">40%</text>
<rect x="734" y="526" width="109" height="73.5" fill="rgb(199, 194, 92)" />
<rect x="734" y="599" width="109" height="71.5" fill="rgb(196, 193, 90)" />
<rect x="734.5" y="526.5" width="108" height="144" fill="none" stroke="#e4e4dc" stroke-width="1"/>
<text x="788.5" y="686.5" font-size="13" fill="#ffffff" text-anchor="middle">60%</text>
<rect x="860" y="526" width="109" height="73.5" fill="rgb(201, 194, 36)" />
<rect x="860" y="599" width="109" height="71.5" fill="rgb(198, 194, 40)" />
<rect x="860.5" y="526.5" width="108" height="144" fill="none" stroke="#e4e4dc" stroke-width="1"/>
<text x="914.5" y="686.5" font-size="13" fill="#ffffff" text-anchor="middle">80%</text>
<rect x="986" y="526" width="108" height="73.5" fill="rgb(216, 210, 0)" />
<rect x="986" y="599" width="108" height="71.5" fill="rgb(203, 199, 36)" />
<rect x="986.5" y="526.5" width="107" height="144" fill="none" stroke="#e4e4dc" stroke-width="1"/>
<text x="1040.5" y="686.5" font-size="13" fill="#ffffff" text-anchor="middle">100%</text>
<text transform="translate(474,557.5) rotate(-90)" font-size="13" fill="#fff" text-anchor="middle">Actual</text>
<text transform="translate(474,639.5) rotate(-90)" font-size="13" fill="#fff" text-anchor="middle">Target</text>
<path d="M1112 104H1867V711H1112Z M1119.5 112V703.7H1859.8V112Z" fill="#c5c101" fill-rule="evenodd"/>
<text x="1490" y="131" font-size="15.5" fill="#d4d4d4" text-anchor="middle" textLength="83" lengthAdjust="spacingAndGlyphs">CIE 1931 xy</text>
<rect x="1153" y="138" width="702.4000000000001" height="533.3" fill="#262626" />
<g clip-path="url(#pl)"><g clip-path="url(#hs)"><g filter="url(#bl)" class="cg"><g transform="translate(0,131)"><rect x="1195" width="8" height="8" fill="#00ff06"/><rect x="1202" width="8" height="8" fill="#00ff05"/><rect x="1209" width="8" height="8" fill="#00ff04"/><rect x="1216" width="8" height="8" fill="#00ff02"/><rect x="1223" width="8" height="8" fill="#00ff01"/><rect x="1230" width="8" height="8" fill="#00ff00"/><rect x="1237" width="8" height="8" fill="#00ff00"/></g><g transform="translate(0,138)"><rect x="1188" width="8" height="8" fill="#00ff0a"/><rect x="1195" width="8" height="8" fill="#00ff08"/><rect x="1202" width="8" height="8" fill="#00ff07"/><rect x="1209" width="8" height="8" fill="#00ff06"/><rect x="1216" width="8" height="8" fill="#00ff04"/><rect x="1223" width="8" height="8" fill="#00ff03"/><rect x="1230" width="8" height="8" fill="#00ff02"/><rect x="1237" width="8" height="8" fill="#00ff00"/><rect x="1244" width="8" height="8" fill="#00ff00"/><rect x="1251" width="8" height="8" fill="#00ff00"/><rect x="1258" width="8" height="8" fill="#00ff00"/></g><g transform="translate(0,145)"><rect x="1174" width="8" height="8" fill="#00ff0f"/><rect x="1181" width="8" height="8" fill="#00ff0d"/><rect x="1188" width="8" height="8" fill="#00ff0c"/><rect x="1195" width="8" height="8" fill="#00ff0b"/><rect x="1202" width="8" height="8" fill="#00ff09"/><rect x="1209" width="8" height="8" fill="#00ff08"/><rect x="1216" width="8" height="8" fill="#00ff06"/><rect x="1223" width="8" height="8" fill="#00ff05"/><rect x="1230" width="8" height="8" fill="#00ff04"/><rect x="1237" width="8" height="8" fill="#00ff02"/><rect x="1244" width="8" height="8" fill="#00ff01"/><rect x="1251" width="8" height="8" fill="#00ff00"/><rect x="1258" width="8" height="8" fill="#00ff00"/><rect x="1265" width="8" height="8" fill="#00ff00"/><rect x="1272" width="8" height="8" fill="#00ff00"/><rect x="1279" width="8" height="8" fill="#00ff00"/></g><g transform="translate(0,152)"><rect x="1174" width="8" height="8" fill="#00ff11"/><rect x="1181" width="8" height="8" fill="#00ff0f"/><rect x="1188" width="8" height="8" fill="#00ff0e"/><rect x="1195" width="8" height="8" fill="#00ff0d"/><rect x="1202" width="8" height="8" fill="#00ff0b"/><rect x="1209" width="8" height="8" fill="#00ff0a"/><rect x="1216" width="8" height="8" fill="#00ff09"/><rect x="1223" width="8" height="8" fill="#00ff07"/><rect x="1230" width="8" height="8" fill="#00ff06"/><rect x="1237" width="8" height="8" fill="#00ff04"/><rect x="1244" width="8" height="8" fill="#00ff03"/><rect x="1251" width="8" height="8" fill="#00ff02"/><rect x="1258" width="8" height="8" fill="#00ff00"/><rect x="1265" width="8" height="8" fill="#00ff00"/><rect x="1272" width="8" height="8" fill="#00ff00"/><rect x="1279" width="8" height="8" fill="#00ff00"/><rect x="1286" width="8" height="8" fill="#00ff00"/><rect x="1293" width="8" height="8" fill="#00ff00"/></g><g transform="translate(0,159)"><rect x="1167" width="8" height="8" fill="#00ff14"/><rect x="1174" width="8" height="8" fill="#00ff13"/><rect x="1181" width="8" height="8" fill="#00ff12"/><rect x="1188" width="8" height="8" fill="#00ff10"/><rect x="1195" width="8" height="8" fill="#00ff0f"/><rect x="1202" width="8" height="8" fill="#00ff0e"/><rect x="1209" width="8" height="8" fill="#00ff0c"/><rect x="1216" width="8" height="8" fill="#00ff0b"/><rect x="1223" width="8" height="8" fill="#00ff0a"/><rect x="1230" width="8" height="8" fill="#00ff08"/><rect x="1237" width="8" height="8" fill="#00ff07"/><rect x="1244" width="8" height="8" fill="#00ff05"/><rect x="1251" width="8" height="8" fill="#00ff04"/><rect x="1258" width="8" height="8" fill="#00ff02"/><rect x="1265" width="8" height="8" fill="#00ff01"/><rect x="1272" width="8" height="8" fill="#00ff00"/><rect x="1279" width="8" height="8" fill="#00ff00"/><rect x="1286" width="8" height="8" fill="#00ff00"/><rect x="1293" width="8" height="8" fill="#00ff00"/><rect x="1300" width="8" height="8" fill="#00ff00"/><rect x="1307" width="8" height="8" fill="#00ff00"/></g><g transform="translate(0,166)"><rect x="1160" width="8" height="8" fill="#00ff18"/><rect x="1167" width="8" height="8" fill="#00ff17"/><rect x="1174" width="8" height="8" fill="#00ff15"/><rect x="1181" width="8" height="8" fill="#00ff14"/><rect x="1188" width="8" height="8" fill="#00ff13"/><rect x="1195" width="8" height="8" fill="#00ff11"/><rect x="1202" width="8" height="8" fill="#00ff10"/><rect x="1209" width="8" height="8" fill="#00ff0f"/><rect x="1216" width="8" height="8" fill="#00ff0d"/><rect x="1223" width="8" height="8" fill="#00ff0c"/><rect x="1230" width="8" height="8" fill="#00ff0a"/><rect x="1237" width="8" height="8" fill="#00ff09"/><rect x="1244" width="8" height="8" fill="#00ff08"/><rect x="1251" width="8" height="8" fill="#00ff06"/><rect x="1258" width="8" height="8" fill="#00ff05"/><rect x="1265" width="8" height="8" fill="#00ff03"/><rect x="1272" width="8" height="8" fill="#00ff02"/><rect x="1279" width="8" height="8" fill="#00ff00"/><rect x="1286" width="8" height="8" fill="#00ff00"/><rect x="1293" width="8" height="8" fill="#00ff00"/><rect x="1300" width="8" height="8" fill="#00ff00"/><rect x="1307" width="8" height="8" fill="#00ff00"/><rect x="1314" width="8" height="8" fill="#00ff00"/><rect x="1321" width="8" height="8" fill="#00ff00"/></g><g transform="translate(0,173)"><rect x="1160" width="8" height="8" fill="#00ff1b"/><rect x="1167" width="8" height="8" fill="#00ff19"/><rect x="1174" width="8" height="8" fill="#00ff18"/><rect x="1181" width="8" height="8" fill="#00ff17"/><rect x="1188" width="8" height="8" fill="#00ff15"/><rect x="1195" width="8" height="8" fill="#00ff14"/><rect x="1202" width="8" height="8" fill="#00ff13"/><rect x="1209" width="8" height="8" fill="#00ff11"/><rect x="1216" width="8" height="8" fill="#00ff10"/><rect x="1223" width="8" height="8" fill="#00ff0e"/><rect x="1230" width="8" height="8" fill="#00ff0d"/><rect x="1237" width="8" height="8" fill="#00ff0b"/><rect x="1244" width="8" height="8" fill="#00ff0a"/><rect x="1251" width="8" height="8" fill="#00ff08"/><rect x="1258" width="8" height="8" fill="#00ff07"/><rect x="1265" width="8" height="8" fill="#00ff05"/><rect x="1272" width="8" height="8" fill="#00ff04"/><rect x="1279" width="8" height="8" fill="#00ff02"/><rect x="1286" width="8" height="8" fill="#00ff01"/><rect x="1293" width="8" height="8" fill="#00ff00"/><rect x="1300" width="8" height="8" fill="#00ff00"/><rect x="1307" width="8" height="8" fill="#00ff00"/><rect x="1314" width="8" height="8" fill="#00ff00"/><rect x="1321" width="8" height="8" fill="#00ff00"/><rect x="1328" width="8" height="8" fill="#00ff00"/></g><g transform="translate(0,180)"><rect x="1160" width="8" height="8" fill="#00ff1d"/><rect x="1167" width="8" height="8" fill="#00ff1c"/><rect x="1174" width="8" height="8" fill="#00ff1a"/><rect x="1181" width="8" height="8" fill="#00ff19"/><rect x="1188" width="8" height="8" fill="#00ff18"/><rect x="1195" width="8" height="8" fill="#00ff16"/><rect x="1202" width="8" height="8" fill="#00ff15"/><rect x="1209" width="8" height="8" fill="#00ff14"/><rect x="1216" width="8" height="8" fill="#00ff12"/><rect x="1223" width="8" height="8" fill="#00ff11"/><rect x="1230" width="8" height="8" fill="#00ff0f"/><rect x="1237" width="8" height="8" fill="#00ff0e"/><rect x="1244" width="8" height="8" fill="#00ff0c"/><rect x="1251" width="8" height="8" fill="#00ff0b"/><rect x="1258" width="8" height="8" fill="#00ff09"/><rect x="1265" width="8" height="8" fill="#00ff08"/><rect x="1272" width="8" height="8" fill="#00ff06"/><rect x="1279" width="8" height="8" fill="#00ff05"/><rect x="1286" width="8" height="8" fill="#00ff03"/><rect x="1293" width="8" height="8" fill="#00ff02"/><rect x="1300" width="8" height="8" fill="#00ff00"/><rect x="1307" width="8" height="8" fill="#00ff00"/><rect x="1314" width="8" height="8" fill="#00ff00"/><rect x="1321" width="8" height="8" fill="#00ff00"/><rect x="1328" width="8" height="8" fill="#00ff00"/><rect x="1335" width="8" height="8" fill="#00ff00"/><rect x="1342" width="8" height="8" fill="#00ff00"/></g><g transform="translate(0,187)"><rect x="1153" width="8" height="8" fill="#00ff21"/><rect x="1160" width="8" height="8" fill="#00ff20"/><rect x="1167" width="8" height="8" fill="#00ff1e"/><rect x="1174" width="8" height="8" fill="#00ff1d"/><rect x="1181" width="8" height="8" fill="#00ff1c"/><rect x="1188" width="8" height="8" fill="#00ff1a"/><rect x="1195" width="8" height="8" fill="#00ff19"/><rect x="1202" width="8" height="8" fill="#00ff18"/><rect x="1209" width="8" height="8" fill="#00ff16"/><rect x="1216" width="8" height="8" fill="#00ff15"/><rect x="1223" width="8" height="8" fill="#00ff13"/><rect x="1230" width="8" height="8" fill="#00ff12"/><rect x="1237" width="8" height="8" fill="#00ff10"/><rect x="1244" width="8" height="8" fill="#00ff0f"/><rect x="1251" width="8" height="8" fill="#00ff0d"/><rect x="1258" width="8" height="8" fill="#00ff0c"/><rect x="1265" width="8" height="8" fill="#00ff0a"/><rect x="1272" width="8" height="8" fill="#00ff09"/><rect x="1279" width="8" height="8" fill="#00ff07"/><rect x="1286" width="8" height="8" fill="#00ff06"/><rect x="1293" width="8" height="8" fill="#00ff04"/><rect x="1300" width="8" height="8" fill="#00ff02"/><rect x="1307" width="8" height="8" fill="#00ff01"/><rect x="1314" width="8" height="8" fill="#00ff00"/><rect x="1321" width="8" height="8" fill="#00ff00"/><rect x="1328" width="8" height="8" fill="#00ff00"/><rect x="1335" width="8" height="8" fill="#00ff00"/><rect x="1342" width="8" height="8" fill="#00ff00"/><rect x="1349" width="8" height="8" fill="#00ff00"/><rect x="1356" width="8" height="8" fill="#00ff00"/></g><g transform="translate(0,194)"><rect x="1153" width="8" height="8" fill="#00ff24"/><rect x="1160" width="8" height="8" fill="#00ff22"/><rect x="1167" width="8" height="8" fill="#00ff21"/><rect x="1174" width="8" height="8" fill="#00ff20"/><rect x="1181" width="8" height="8" fill="#00ff1e"/><rect x="1188" width="8" height="8" fill="#00ff1d"/><rect x="1195" width="8" height="8" fill="#00ff1c"/><rect x="1202" width="8" height="8" fill="#00ff1a"/><rect x="1209" width="8" height="8" fill="#00ff19"/><rect x="1216" width="8" height="8" fill="#00ff17"/><rect x="1223" width="8" height="8" fill="#00ff16"/><rect x="1230" width="8" height="8" fill="#00ff14"/><rect x="1237" width="8" height="8" fill="#00ff13"/><rect x="1244" width="8" height="8" fill="#00ff12"/><rect x="1251" width="8" height="8" fill="#00ff10"/><rect x="1258" width="8" height="8" fill="#00ff0e"/><rect x="1265" width="8" height="8" fill="#00ff0d"/><rect x="1272" width="8" height="8" fill="#00ff0b"/><rect x="1279" width="8" height="8" fill="#00ff0a"/><rect x="1286" width="8" height="8" fill="#00ff08"/><rect x="1293" width="8" height="8" fill="#00ff07"/><rect x="1300" width="8" height="8" fill="#00ff05"/><rect x="1307" width="8" height="8" fill="#00ff03"/><rect x="1314" width="8" height="8" fill="#00ff01"/><rect x="1321" width="8" height="8" fill="#00ff00"/><rect x="1328" width="8" height="8" fill="#00ff00"/><rect x="1335" width="8" height="8" fill="#00ff00"/><rect x="1342" width="8" height="8" fill="#00ff00"/><rect x="1349" width="8" height="8" fill="#00ff00"/><rect x="1356" width="8" height="8" fill="#00ff00"/><rect x="1363" width="8" height="8" fill="#00ff00"/></g><g transform="translate(0,201)"><rect x="1153" width="8" height="8" fill="#00ff26"/><rect x="1160" width="8" height="8" fill="#00ff25"/><rect x="1167" width="8" height="8" fill="#00ff24"/><rect x="1174" width="8" height="8" fill="#00ff22"/><rect x="1181" width="8" height="8" fill="#00ff21"/><rect x="1188" width="8" height="8" fill="#00ff20"/><rect x="1195" width="8" height="8" fill="#00ff1e"/><rect x="1202" width="8" height="8" fill="#00ff1d"/><rect x="1209" width="8" height="8" fill="#00ff1c"/><rect x="1216" width="8" height="8" fill="#00ff1a"/><rect x="1223" width="8" height="8" fill="#00ff19"/><rect x="1230" width="8" height="8" fill="#00ff17"/><rect x="1237" width="8" height="8" fill="#00ff16"/><rect x="1244" width="8" height="8" fill="#00ff14"/><rect x="1251" width="8" height="8" fill="#00ff13"/><rect x="1258" width="8" height="8" fill="#00ff11"/><rect x="1265" width="8" height="8" fill="#00ff10"/><rect x="1272" width="8" height="8" fill="#00ff0e"/><rect x="1279" width="8" height="8" fill="#00ff0c"/><rect x="1286" width="8" height="8" fill="#00ff0b"/><rect x="1293" width="8" height="8" fill="#00ff09"/><rect x="1300" width="8" height="8" fill="#00ff07"/><rect x="1307" width="8" height="8" fill="#00ff06"/><rect x="1314" width="8" height="8" fill="#00ff04"/><rect x="1321" width="8" height="8" fill="#00ff02"/><rect x="1328" width="8" height="8" fill="#00ff01"/><rect x="1335" width="8" height="8" fill="#00ff00"/><rect x="1342" width="8" height="8" fill="#00ff00"/><rect x="1349" width="8" height="8" fill="#00ff00"/><rect x="1356" width="8" height="8" fill="#00ff00"/><rect x="1363" width="8" height="8" fill="#00ff00"/><rect x="1370" width="8" height="8" fill="#00ff00"/><rect x="1377" width="8" height="8" fill="#00ff00"/></g><g transform="translate(0,208)"><rect x="1153" width="8" height="8" fill="#00ff29"/><rect x="1160" width="8" height="8" fill="#00ff28"/><rect x="1167" width="8" height="8" fill="#00ff27"/><rect x="1174" width="8" height="8" fill="#00ff25"/><rect x="1181" width="8" height="8" fill="#00ff24"/><rect x="1188" width="8" height="8" fill="#00ff23"/><rect x="1195" width="8" height="8" fill="#00ff21"/><rect x="1202" width="8" height="8" fill="#00ff20"/><rect x="1209" width="8" height="8" fill="#00ff1e"/><rect x="1216" width="8" height="8" fill="#00ff1d"/><rect x="1223" width="8" height="8" fill="#00ff1b"/><rect x="1230" width="8" height="8" fill="#00ff1a"/><rect x="1237" width="8" height="8" fill="#00ff18"/><rect x="1244" width="8" height="8" fill="#00ff17"/><rect x="1251" width="8" height="8" fill="#00ff15"/><rect x="1258" width="8" height="8" fill="#00ff14"/><rect x="1265" width="8" height="8" fill="#00ff12"/><rect x="1272" width="8" height="8" fill="#00ff11"/><rect x="1279" width="8" height="8" fill="#00ff0f"/><rect x="1286" width="8" height="8" fill="#00ff0d"/><rect x="1293" width="8" height="8" fill="#00ff0c"/><rect x="1300" width="8" height="8" fill="#00ff0a"/><rect x="1307" width="8" height="8" fill="#00ff08"/><rect x="1314" width="8" height="8" fill="#00ff07"/><rect x="1321" width="8" height="8" fill="#00ff05"/><rect x="1328" width="8" height="8" fill="#00ff03"/><rect x="1335" width="8" height="8" fill="#00ff01"/><rect x="1342" width="8" height="8" fill="#00ff00"/><rect x="1349" width="8" height="8" fill="#00ff00"/><rect x="1356" width="8" height="8" fill="#00ff00"/><rect x="1363" width="8" height="8" fill="#00ff00"/><rect x="1370" width="8" height="8" fill="#00ff00"/><rect x="1377" width="8" height="8" fill="#02ff00"/><rect x="1384" width="8" height="8" fill="#07ff00"/></g><g transform="translate(0,215)"><rect x="1146" width="8" height="8" fill="#00ff2e"/><rect x="1153" width="8" height="8" fill="#00ff2c"/><rect x="1160" width="8" height="8" fill="#00ff2b"/><rect x="1167" width="8" height="8" fill="#00ff2a"/><rect x="1174" width="8" height="8" fill="#00ff28"/><rect x="1181" width="8" height="8" fill="#00ff27"/><rect x="1188" width="8" height="8" fill="#00ff26"/><rect x="1195" width="8" height="8" fill="#00ff24"/><rect x="1202" width="8" height="8" fill="#00ff23"/><rect x="1209" width="8" height="8" fill="#00ff21"/><rect x="1216" width="8" height="8" fill="#00ff20"/><rect x="1223" width="8" height="8" fill="#00ff1e"/><rect x="1230" width="8" height="8" fill="#00ff1d"/><rect x="1237" width="8" height="8" fill="#00ff1b"/><rect x="1244" width="8" height="8" fill="#00ff1a"/><rect x="1251" width="8" height="8" fill="#00ff18"/><rect x="1258" width="8" height="8" fill="#00ff17"/><rect x="1265" width="8" height="8" fill="#00ff15"/><rect x="1272" width="8" height="8" fill="#00ff14"/><rect x="1279" width="8" height="8" fill="#00ff12"/><rect x="1286" width="8" height="8" fill="#00ff10"/><rect x="1293" width="8" height="8" fill="#00ff0f"/><rect x="1300" width="8" height="8" fill="#00ff0d"/><rect x="1307" width="8" height="8" fill="#00ff0b"/><rect x="1314" width="8" height="8" fill="#00ff0a"/><rect x="1321" width="8" height="8" fill="#00ff08"/><rect x="1328" width="8" height="8" fill="#00ff06"/><rect x="1335" width="8" height="8" fill="#00ff04"/><rect x="1342" width="8" height="8" fill="#00ff02"/><rect x="1349" width="8" height="8" fill="#00ff01"/><rect x="1356" width="8" height="8" fill="#00ff00"/><rect x="1363" width="8" height="8" fill="#00ff00"/><rect x="1370" width="8" height="8" fill="#00ff00"/><rect x="1377" width="8" height="8" fill="#03ff00"/><rect x="1384" width="8" height="8" fill="#09ff00"/><rect x="1391" width="8" height="8" fill="#0fff00"/><rect x="1398" width="8" height="8" fill="#15ff00"/></g><g transform="translate(0,222)"><rect x="1146" width="8" height="8" fill="#00ff31"/><rect x="1153" width="8" height="8" fill="#00ff2f"/><rect x="1160" width="8" height="8" fill="#00ff2e"/><rect x="1167" width="8" height="8" fill="#00ff2d"/><rect x="1174" width="8" height="8" fill="#00ff2b"/><rect x="1181" width="8" height="8" fill="#00ff2a"/><rect x="1188" width="8" height="8" fill="#00ff29"/><rect x="1195" width="8" height="8" fill="#00ff27"/><rect x="1202" width="8" height="8" fill="#00ff26"/><rect x="1209" width="8" height="8" fill="#00ff24"/><rect x="1216" width="8" height="8" fill="#00ff23"/><rect x="1223" width="8" height="8" fill="#00ff21"/><rect x="1230" width="8" height="8" fill="#00ff20"/><rect x="1237" width="8" height="8" fill="#00ff1e"/><rect x="1244" width="8" height="8" fill="#00ff1d"/><rect x="1251" width="8" height="8" fill="#00ff1b"/><rect x="1258" width="8" height="8" fill="#00ff1a"/><rect x="1265" width="8" height="8" fill="#00ff18"/><rect x="1272" width="8" height="8" fill="#00ff16"/><rect x="1279" width="8" height="8" fill="#00ff15"/><rect x="1286" width="8" height="8" fill="#00ff13"/><rect x="1293" width="8" height="8" fill="#00ff12"/><rect x="1300" width="8" height="8" fill="#00ff10"/><rect x="1307" width="8" height="8" fill="#00ff0e"/><rect x="1314" width="8" height="8" fill="#00ff0c"/><rect x="1321" width="8" height="8" fill="#00ff0b"/><rect x="1328" width="8" height="8" fill="#00ff09"/><rect x="1335" width="8" height="8" fill="#00ff07"/><rect x="1342" width="8" height="8" fill="#00ff05"/><rect x="1349" width="8" height="8" fill="#00ff03"/><rect x="1356" width="8" height="8" fill="#00ff01"/><rect x="1363" width="8" height="8" fill="#00ff00"/><rect x="1370" width="8" height="8" fill="#00ff00"/><rect x="1377" width="8" height="8" fill="#05ff00"/><rect x="1384" width="8" height="8" fill="#0bff00"/><rect x="1391" width="8" height="8" fill="#11ff00"/><rect x="1398" width="8" height="8" fill="#17ff00"/><rect x="1405" width="8" height="8" fill="#1eff00"/></g><g transform="translate(0,229)"><rect x="1146" width="8" height="8" fill="#00ff34"/><rect x="1153" width="8" height="8" fill="#00ff32"/><rect x="1160" width="8" height="8" fill="#00ff31"/><rect x="1167" width="8" height="8" fill="#00ff30"/><rect x="1174" width="8" height="8" fill="#00ff2e"/><rect x="1181" width="8" height="8" fill="#00ff2d"/><rect x="1188" width="8" height="8" fill="#00ff2c"/><rect x="1195" width="8" height="8" fill="#00ff2a"/><rect x="1202" width="8" height="8" fill="#00ff29"/><rect x="1209" width="8" height="8" fill="#00ff27"/><rect x="1216" width="8" height="8" fill="#00ff26"/><rect x="1223" width="8" height="8" fill="#00ff24"/><rect x="1230" width="8" height="8" fill="#00ff23"/><rect x="1237" width="8" height="8" fill="#00ff21"/><rect x="1244" width="8" height="8" fill="#00ff20"/><rect x="1251" width="8" height="8" fill="#00ff1e"/><rect x="1258" width="8" height="8" fill="#00ff1d"/><rect x="1265" width="8" height="8" fill="#00ff1b"/><rect x="1272" width="8" height="8" fill="#00ff1a"/><rect x="1279" width="8" height="8" fill="#00ff18"/><rect x="1286" width="8" height="8" fill="#00ff16"/><rect x="1293" width="8" height="8" fill="#00ff15"/><rect x="1300" width="8" height="8" fill="#00ff13"/><rect x="1307" width="8" height="8" fill="#00ff11"/><rect x="1314" width="8" height="8" fill="#00ff0f"/><rect x="1321" width="8" height="8" fill="#00ff0e"/><rect x="1328" width="8" height="8" fill="#00ff0c"/><rect x="1335" width="8" height="8" fill="#00ff0a"/><rect x="1342" width="8" height="8" fill="#00ff08"/><rect x="1349" width="8" height="8" fill="#00ff06"/><rect x="1356" width="8" height="8" fill="#00ff04"/><rect x="1363" width="8" height="8" fill="#00ff02"/><rect x="1370" width="8" height="8" fill="#00ff00"/><rect x="1377" width="8" height="8" fill="#06ff00"/><rect x="1384" width="8" height="8" fill="#0cff00"/><rect x="1391" width="8" height="8" fill="#13ff00"/><rect x="1398" width="8" height="8" fill="#19ff00"/><rect x="1405" width="8" height="8" fill="#20ff00"/><rect x="1412" width="8" height="8" fill="#27ff00"/><rect x="1419" width="8" height="8" fill="#2eff00"/></g><g transform="translate(0,236)"><rect x="1146" width="8" height="8" fill="#00ff37"/><rect x="1153" width="8" height="8" fill="#00ff36"/><rect x="1160" width="8" height="8" fill="#00ff34"/><rect x="1167" width="8" height="8" fill="#00ff33"/><rect x="1174" width="8" height="8" fill="#00ff32"/><rect x="1181" width="8" height="8" fill="#00ff30"/><rect x="1188" width="8" height="8" fill="#00ff2f"/><rect x="1195" width="8" height="8" fill="#00ff2d"/><rect x="1202" width="8" height="8" fill="#00ff2c"/><rect x="1209" width="8" height="8" fill="#00ff2b"/><rect x="1216" width="8" height="8" fill="#00ff29"/><rect x="1223" width="8" height="8" fill="#00ff28"/><rect x="1230" width="8" height="8" fill="#00ff26"/><rect x="1237" width="8" height="8" fill="#00ff25"/><rect x="1244" width="8" height="8" fill="#00ff23"/><rect x="1251" width="8" height="8" fill="#00ff21"/><rect x="1258" width="8" height="8" fill="#00ff20"/><rect x="1265" width="8" height="8" fill="#00ff1e"/><rect x="1272" width="8" height="8" fill="#00ff1d"/><rect x="1279" width="8" height="8" fill="#00ff1b"/><rect x="1286" width="8" height="8" fill="#00ff19"/><rect x="1293" width="8" height="8" fill="#00ff18"/><rect x="1300" width="8" height="8" fill="#00ff16"/><rect x="1307" width="8" height="8" fill="#00ff14"/><rect x="1314" width="8" height="8" fill="#00ff12"/><rect x="1321" width="8" height="8" fill="#00ff11"/><rect x="1328" width="8" height="8" fill="#00ff0f"/><rect x="1335" width="8" height="8" fill="#00ff0d"/><rect x="1342" width="8" height="8" fill="#00ff0b"/><rect x="1349" width="8" height="8" fill="#00ff09"/><rect x="1356" width="8" height="8" fill="#00ff07"/><rect x="1363" width="8" height="8" fill="#00ff05"/><rect x="1370" width="8" height="8" fill="#01ff03"/><rect x="1377" width="8" height="8" fill="#08ff01"/><rect x="1384" width="8" height="8" fill="#0eff00"/><rect x="1391" width="8" height="8" fill="#15ff00"/><rect x="1398" width="8" height="8" fill="#1bff00"/><rect x="1405" width="8" height="8" fill="#22ff00"/><rect x="1412" width="8" height="8" fill="#29ff00"/><rect x="1419" width="8" height="8" fill="#30ff00"/><rect x="1426" width="8" height="8" fill="#37ff00"/></g><g transform="translate(0,243)"><rect x="1146" width="8" height="8" fill="#00ff3a"/><rect x="1153" width="8" height="8" fill="#00ff39"/><rect x="1160" width="8" height="8" fill="#00ff38"/><rect x="1167" width="8" height="8" fill="#00ff36"/><rect x="1174" width="8" height="8" fill="#00ff35"/><rect x="1181" width="8" height="8" fill="#00ff34"/><rect x="1188" width="8" height="8" fill="#00ff32"/><rect x="1195" width="8" height="8" fill="#00ff31"/><rect x="1202" width="8" height="8" fill="#00ff2f"/><rect x="1209" width="8" height="8" fill="#00ff2e"/><rect x="1216" width="8" height="8" fill="#00ff2c"/><rect x="1223" width="8" height="8" fill="#00ff2b"/><rect x="1230" width="8" height="8" fill="#00ff29"/><rect x="1237" width="8" height="8" fill="#00ff28"/><rect x="1244" width="8" height="8" fill="#00ff26"/><rect x="1251" width="8" height="8" fill="#00ff25"/><rect x="1258" width="8" height="8" fill="#00ff23"/><rect x="1265" width="8" height="8" fill="#00ff22"/><rect x="1272" width="8" height="8" fill="#00ff20"/><rect x="1279" width="8" height="8" fill="#00ff1e"/><rect x="1286" width="8" height="8" fill="#00ff1d"/><rect x="1293" width="8" height="8" fill="#00ff1b"/><rect x="1300" width="8" height="8" fill="#00ff19"/><rect x="1307" width="8" height="8" fill="#00ff17"/><rect x="1314" width="8" height="8" fill="#00ff16"/><rect x="1321" width="8" height="8" fill="#00ff14"/><rect x="1328" width="8" height="8" fill="#00ff12"/><rect x="1335" width="8" height="8" fill="#00ff10"/><rect x="1342" width="8" height="8" fill="#00ff0e"/><rect x="1349" width="8" height="8" fill="#00ff0c"/><rect x="1356" width="8" height="8" fill="#00ff0b"/><rect x="1363" width="8" height="8" fill="#00ff09"/><rect x="1370" width="8" height="8" fill="#03ff07"/><rect x="1377" width="8" height="8" fill="#09ff05"/><rect x="1384" width="8" height="8" fill="#10ff02"/><rect x="1391" width="8" height="8" fill="#17ff00"/><rect x="1398" width="8" height="8" fill="#1eff00"/><rect x="1405" width="8" height="8" fill="#25ff00"/><rect x="1412" width="8" height="8" fill="#2cff00"/><rect x="1419" width="8" height="8" fill="#33ff00"/><rect x="1426" width="8" height="8" fill="#3aff00"/><rect x="1433" width="8" height="8" fill="#41ff00"/></g><g transform="translate(0,250)"><rect x="1146" width="8" height="8" fill="#00ff3e"/><rect x="1153" width="8" height="8" fill="#00ff3c"/><rect x="1160" width="8" height="8" fill="#00ff3b"/><rect x="1167" width="8" height="8" fill="#00ff3a"/><rect x="1174" width="8" height="8" fill="#00ff38"/><rect x="1181" width="8" height="8" fill="#00ff37"/><rect x="1188" width="8" height="8" fill="#00ff36"/><rect x="1195" width="8" height="8" fill="#00ff34"/><rect x="1202" width="8" height="8" fill="#00ff33"/><rect x="1209" width="8" height="8" fill="#00ff31"/><rect x="1216" width="8" height="8" fill="#00ff30"/><rect x="1223" width="8" height="8" fill="#00ff2e"/><rect x="1230" width="8" height="8" fill="#00ff2d"/><rect x="1237" width="8" height="8" fill="#00ff2b"/><rect x="1244" width="8" height="8" fill="#00ff2a"/><rect x="1251" width="8" height="8" fill="#00ff28"/><rect x="1258" width="8" height="8" fill="#00ff27"/><rect x="1265" width="8" height="8" fill="#00ff25"/><rect x="1272" width="8" height="8" fill="#00ff23"/><rect x="1279" width="8" height="8" fill="#00ff22"/><rect x="1286" width="8" height="8" fill="#00ff20"/><rect x="1293" width="8" height="8" fill="#00ff1e"/><rect x="1300" width="8" height="8" fill="#00ff1d"/><rect x="1307" width="8" height="8" fill="#00ff1b"/><rect x="1314" width="8" height="8" fill="#00ff19"/><rect x="1321" width="8" height="8" fill="#00ff17"/><rect x="1328" width="8" height="8" fill="#00ff15"/><rect x="1335" width="8" height="8" fill="#00ff13"/><rect x="1342" width="8" height="8" fill="#00ff12"/><rect x="1349" width="8" height="8" fill="#00ff10"/><rect x="1356" width="8" height="8" fill="#00ff0e"/><rect x="1363" width="8" height="8" fill="#00ff0c"/><rect x="1370" width="8" height="8" fill="#05ff0a"/><rect x="1377" width="8" height="8" fill="#0bff08"/><rect x="1384" width="8" height="8" fill="#12ff06"/><rect x="1391" width="8" height="8" fill="#19ff04"/><rect x="1398" width="8" height="8" fill="#20ff01"/><rect x="1405" width="8" height="8" fill="#27ff00"/><rect x="1412" width="8" height="8" fill="#2eff00"/><rect x="1419" width="8" height="8" fill="#35ff00"/><rect x="1426" width="8" height="8" fill="#3dff00"/><rect x="1433" width="8" height="8" fill="#44ff00"/><rect x="1440" width="8" height="8" fill="#4cff00"/><rect x="1447" width="8" height="8" fill="#54ff00"/></g><g transform="translate(0,257)"><rect x="1146" width="8" height="8" fill="#00ff41"/><rect x="1153" width="8" height="8" fill="#00ff40"/><rect x="1160" width="8" height="8" fill="#00ff3f"/><rect x="1167" width="8" height="8" fill="#00ff3d"/><rect x="1174" width="8" height="8" fill="#00ff3c"/><rect x="1181" width="8" height="8" fill="#00ff3b"/><rect x="1188" width="8" height="8" fill="#00ff39"/><rect x="1195" width="8" height="8" fill="#00ff38"/><rect x="1202" width="8" height="8" fill="#00ff36"/><rect x="1209" width="8" height="8" fill="#00ff35"/><rect x="1216" width="8" height="8" fill="#00ff33"/><rect x="1223" width="8" height="8" fill="#00ff32"/><rect x="1230" width="8" height="8" fill="#00ff30"/><rect x="1237" width="8" height="8" fill="#00ff2f"/><rect x="1244" width="8" height="8" fill="#00ff2d"/><rect x="1251" width="8" height="8" fill="#00ff2c"/><rect x="1258" width="8" height="8" fill="#00ff2a"/><rect x="1265" width="8" height="8" fill="#00ff28"/><rect x="1272" width="8" height="8" fill="#00ff27"/><rect x="1279" width="8" height="8" fill="#00ff25"/><rect x="1286" width="8" height="8" fill="#00ff23"/><rect x="1293" width="8" height="8" fill="#00ff22"/><rect x="1300" width="8" height="8" fill="#00ff20"/><rect x="1307" width="8" height="8" fill="#00ff1e"/><rect x="1314" width="8" height="8" fill="#00ff1c"/><rect x="1321" width="8" height="8" fill="#00ff1b"/><rect x="1328" width="8" height="8" fill="#00ff19"/><rect x="1335" width="8" height="8" fill="#00ff17"/><rect x="1342" width="8" height="8" fill="#00ff15"/><rect x="1349" width="8" height="8" fill="#00ff13"/><rect x="1356" width="8" height="8" fill="#00ff11"/><rect x="1363" width="8" height="8" fill="#00ff0f"/><rect x="1370" width="8" height="8" fill="#06ff0d"/><rect x="1377" width="8" height="8" fill="#0dff0b"/><rect x="1384" width="8" height="8" fill="#14ff09"/><rect x="1391" width="8" height="8" fill="#1bff07"/><rect x="1398" width="8" height="8" fill="#22ff05"/><rect x="1405" width="8" height="8" fill="#29ff03"/><rect x="1412" width="8" height="8" fill="#31ff00"/><rect x="1419" width="8" height="8" fill="#38ff00"/><rect x="1426" width="8" height="8" fill="#40ff00"/><rect x="1433" width="8" height="8" fill="#48ff00"/><rect x="1440" width="8" height="8" fill="#50ff00"/><rect x="1447" width="8" height="8" fill="#58ff00"/><rect x="1454" width="8" height="8" fill="#60ff00"/></g><g transform="translate(0,264)"><rect x="1146" width="8" height="8" fill="#00ff45"/><rect x="1153" width="8" height="8" fill="#00ff44"/><rect x="1160" width="8" height="8" fill="#00ff42"/><rect x="1167" width="8" height="8" fill="#00ff41"/><rect x="1174" width="8" height="8" fill="#00ff40"/><rect x="1181" width="8" height="8" fill="#00ff3e"/><rect x="1188" width="8" height="8" fill="#00ff3d"/><rect x="1195" width="8" height="8" fill="#00ff3b"/><rect x="1202" width="8" height="8" fill="#00ff3a"/><rect x="1209" width="8" height="8" fill="#00ff38"/><rect x="1216" width="8" height="8" fill="#00ff37"/><rect x="1223" width="8" height="8" fill="#00ff36"/><rect x="1230" width="8" height="8" fill="#00ff34"/><rect x="1237" width="8" height="8" fill="#00ff32"/><rect x="1244" width="8" height="8" fill="#00ff31"/><rect x="1251" width="8" height="8" fill="#00ff2f"/><rect x="1258" width="8" height="8" fill="#00ff2e"/><rect x="1265" width="8" height="8" fill="#00ff2c"/><rect x="1272" width="8" height="8" fill="#00ff2a"/><rect x="1279" width="8" height="8" fill="#00ff29"/><rect x="1286" width="8" height="8" fill="#00ff27"/><rect x="1293" width="8" height="8" fill="#00ff25"/><rect x="1300" width="8" height="8" fill="#00ff24"/><rect x="1307" width="8" height="8" fill="#00ff22"/><rect x="1314" width="8" height="8" fill="#00ff20"/><rect x="1321" width="8" height="8" fill="#00ff1e"/><rect x="1328" width="8" height="8" fill="#00ff1c"/><rect x="1335" width="8" height="8" fill="#00ff1a"/><rect x="1342" width="8" height="8" fill="#00ff19"/><rect x="1349" width="8" height="8" fill="#00ff17"/><rect x="1356" width="8" height="8" fill="#00ff15"/><rect x="1363" width="8" height="8" fill="#01ff13"/><rect x="1370" width="8" height="8" fill="#08ff11"/><rect x="1377" width="8" height="8" fill="#0fff0f"/><rect x="1384" width="8" height="8" fill="#16ff0c"/><rect x="1391" width="8" height="8" fill="#1dff0a"/><rect x="1398" width="8" height="8" fill="#25ff08"/><rect x="1405" width="8" height="8" fill="#2cff06"/><rect x="1412" width="8" height="8" fill="#34ff04"/><rect x="1419" width="8" height="8" fill="#3bff01"/><rect x="1426" width="8" height="8" fill="#43ff00"/><rect x="1433" width="8" height="8" fill="#4bff00"/><rect x="1440" width="8" height="8" fill="#53ff00"/><rect x="1447" width="8" height="8" fill="#5bff00"/><rect x="1454" width="8" height="8" fill="#64ff00"/><rect x="1461" width="8" height="8" fill="#6cff00"/><rect x="1468" width="8" height="8" fill="#75ff00"/></g><g transform="translate(0,271)"><rect x="1146" width="8" height="8" fill="#00ff49"/><rect x="1153" width="8" height="8" fill="#00ff47"/><rect x="1160" width="8" height="8" fill="#00ff46"/><rect x="1167" width="8" height="8" fill="#00ff45"/><rect x="1174" width="8" height="8" fill="#00ff43"/><rect x="1181" width="8" height="8" fill="#00ff42"/><rect x="1188" width="8" height="8" fill="#00ff41"/><rect x="1195" width="8" height="8" fill="#00ff3f"/><rect x="1202" width="8" height="8" fill="#00ff3e"/><rect x="1209" width="8" height="8" fill="#00ff3c"/><rect x="1216" width="8" height="8" fill="#00ff3b"/><rect x="1223" width="8" height="8" fill="#00ff39"/><rect x="1230" width="8" height="8" fill="#00ff38"/><rect x="1237" width="8" height="8" fill="#00ff36"/><rect x="1244" width="8" height="8" fill="#00ff35"/><rect x="1251" width="8" height="8" fill="#00ff33"/><rect x="1258" width="8" height="8" fill="#00ff32"/><rect x="1265" width="8" height="8" fill="#00ff30"/><rect x="1272" width="8" height="8" fill="#00ff2e"/><rect x="1279" width="8" height="8" fill="#00ff2d"/><rect x="1286" width="8" height="8" fill="#00ff2b"/><rect x="1293" width="8" height="8" fill="#00ff29"/><rect x="1300" width="8" height="8" fill="#00ff27"/><rect x="1307" width="8" height="8" fill="#00ff26"/><rect x="1314" width="8" height="8" fill="#00ff24"/><rect x="1321" width="8" height="8" fill="#00ff22"/><rect x="1328" width="8" height="8" fill="#00ff20"/><rect x="1335" width="8" height="8" fill="#00ff1e"/><rect x="1342" width="8" height="8" fill="#00ff1c"/><rect x="1349" width="8" height="8" fill="#00ff1a"/><rect x="1356" width="8" height="8" fill="#00ff18"/><rect x="1363" width="8" height="8" fill="#03ff16"/><rect x="1370" width="8" height="8" fill="#0aff14"/><rect x="1377" width="8" height="8" fill="#11ff12"/><rect x="1384" width="8" height="8" fill="#18ff10"/><rect x="1391" width="8" height="8" fill="#20ff0e"/><rect x="1398" width="8" height="8" fill="#27ff0c"/><rect x="1405" width="8" height="8" fill="#2fff0a"/><rect x="1412" width="8" height="8" fill="#37ff07"/><rect x="1419" width="8" height="8" fill="#3fff05"/><rect x="1426" width="8" height="8" fill="#47ff03"/><rect x="1433" width="8" height="8" fill="#4fff00"/><rect x="1440" width="8" height="8" fill="#57ff00"/><rect x="1447" width="8" height="8" fill="#5fff00"/><rect x="1454" width="8" height="8" fill="#68ff00"/><rect x="1461" width="8" height="8" fill="#71ff00"/><rect x="1468" width="8" height="8" fill="#7aff00"/><rect x="1475" width="8" height="8" fill="#83ff00"/></g><g transform="translate(0,278)"><rect x="1146" width="8" height="8" fill="#00ff4d"/><rect x="1153" width="8" height="8" fill="#00ff4b"/><rect x="1160" width="8" height="8" fill="#00ff4a"/><rect x="1167" width="8" height="8" fill="#00ff49"/><rect x="1174" width="8" height="8" fill="#00ff47"/><rect x="1181" width="8" height="8" fill="#00ff46"/><rect x="1188" width="8" height="8" fill="#00ff45"/><rect x="1195" width="8" height="8" fill="#00ff43"/><rect x="1202" width="8" height="8" fill="#00ff42"/><rect x="1209" width="8" height="8" fill="#00ff40"/><rect x="1216" width="8" height="8" fill="#00ff3f"/><rect x="1223" width="8" height="8" fill="#00ff3d"/><rect x="1230" width="8" height="8" fill="#00ff3c"/><rect x="1237" width="8" height="8" fill="#00ff3a"/><rect x="1244" width="8" height="8" fill="#00ff39"/><rect x="1251" width="8" height="8" fill="#00ff37"/><rect x="1258" width="8" height="8" fill="#00ff35"/><rect x="1265" width="8" height="8" fill="#00ff34"/><rect x="1272" width="8" height="8" fill="#00ff32"/><rect x="1279" width="8" height="8" fill="#00ff30"/><rect x="1286" width="8" height="8" fill="#00ff2f"/><rect x="1293" width="8" height="8" fill="#00ff2d"/><rect x="1300" width="8" height="8" fill="#00ff2b"/><rect x="1307" width="8" height="8" fill="#00ff29"/><rect x="1314" width="8" height="8" fill="#00ff28"/><rect x="1321" width="8" height="8" fill="#00ff26"/><rect x="1328" width="8" height="8" fill="#00ff24"/><rect x="1335" width="8" height="8" fill="#00ff22"/><rect x="1342" width="8" height="8" fill="#00ff20"/><rect x="1349" width="8" height="8" fill="#00ff1e"/><rect x="1356" width="8" height="8" fill="#00ff1c"/><rect x="1363" width="8" height="8" fill="#05ff1a"/><rect x="1370" width="8" height="8" fill="#0cff18"/><rect x="1377" width="8" height="8" fill="#13ff16"/><rect x="1384" width="8" height="8" fill="#1bff14"/><rect x="1391" width="8" height="8" fill="#22ff12"/><rect x="1398" width="8" height="8" fill="#2aff0f"/><rect x="1405" width="8" height="8" fill="#32ff0d"/><rect x="1412" width="8" height="8" fill="#3aff0b"/><rect x="1419" width="8" height="8" fill="#42ff09"/><rect x="1426" width="8" height="8" fill="#4aff06"/><rect x="1433" width="8" height="8" fill="#52ff04"/><rect x="1440" width="8" height="8" fill="#5bff01"/><rect x="1447" width="8" height="8" fill="#64ff00"/><rect x="1454" width="8" height="8" fill="#6dff00"/><rect x="1461" width="8" height="8" fill="#76ff00"/><rect x="1468" width="8" height="8" fill="#7fff00"/><rect x="1475" width="8" height="8" fill="#88ff00"/><rect x="1482" width="8" height="8" fill="#92ff00"/></g><g transform="translate(0,285)"><rect x="1146" width="8" height="8" fill="#00ff51"/><rect x="1153" width="8" height="8" fill="#00ff4f"/><rect x="1160" width="8" height="8" fill="#00ff4e"/><rect x="1167" width="8" height="8" fill="#00ff4d"/><rect x="1174" width="8" height="8" fill="#00ff4b"/><rect x="1181" width="8" height="8" fill="#00ff4a"/><rect x="1188" width="8" height="8" fill="#00ff49"/><rect x="1195" width="8" height="8" fill="#00ff47"/><rect x="1202" width="8" height="8" fill="#00ff46"/><rect x="1209" width="8" height="8" fill="#00ff44"/><rect x="1216" width="8" height="8" fill="#00ff43"/><rect x="1223" width="8" height="8" fill="#00ff41"/><rect x="1230" width="8" height="8" fill="#00ff40"/><rect x="1237" width="8" height="8" fill="#00ff3e"/><rect x="1244" width="8" height="8" fill="#00ff3d"/><rect x="1251" width="8" height="8" fill="#00ff3b"/><rect x="1258" width="8" height="8" fill="#00ff3a"/><rect x="1265" width="8" height="8" fill="#00ff38"/><rect x="1272" width="8" height="8" fill="#00ff36"/><rect x="1279" width="8" height="8" fill="#00ff35"/><rect x="1286" width="8" height="8" fill="#00ff33"/><rect x="1293" width="8" height="8" fill="#00ff31"/><rect x="1300" width="8" height="8" fill="#00ff2f"/><rect x="1307" width="8" height="8" fill="#00ff2e"/><rect x="1314" width="8" height="8" fill="#00ff2c"/><rect x="1321" width="8" height="8" fill="#00ff2a"/><rect x="1328" width="8" height="8" fill="#00ff28"/><rect x="1335" width="8" height="8" fill="#00ff26"/><rect x="1342" width="8" height="8" fill="#00ff24"/><rect x="1349" width="8" height="8" fill="#00ff22"/><rect x="1356" width="8" height="8" fill="#00ff20"/><rect x="1363" width="8" height="8" fill="#07ff1e"/><rect x="1370" width="8" height="8" fill="#0eff1c"/><rect x="1377" width="8" height="8" fill="#15ff1a"/><rect x="1384" width="8" height="8" fill="#1dff18"/><rect x="1391" width="8" height="8" fill="#25ff16"/><rect x="1398" width="8" height="8" fill="#2dff13"/><rect x="1405" width="8" height="8" fill="#35ff11"/><rect x="1412" width="8" height="8" fill="#3dff0f"/><rect x="1419" width="8" height="8" fill="#45ff0c"/><rect x="1426" width="8" height="8" fill="#4eff0a"/><rect x="1433" width="8" height="8" fill="#56ff08"/><rect x="1440" width="8" height="8" fill="#5fff05"/><rect x="1447" width="8" height="8" fill="#68ff03"/><rect x="1454" width="8" height="8" fill="#71ff00"/><rect x="1461" width="8" height="8" fill="#7bff00"/><rect x="1468" width="8" height="8" fill="#84ff00"/><rect x="1475" width="8" height="8" fill="#8eff00"/><rect x="1482" width="8" height="8" fill="#98ff00"/><rect x="1489" width="8" height="8" fill="#a2ff00"/><rect x="1496" width="8" height="8" fill="#acff00"/></g><g transform="translate(0,292)"><rect x="1146" width="8" height="8" fill="#00ff55"/><rect x="1153" width="8" height="8" fill="#00ff54"/><rect x="1160" width="8" height="8" fill="#00ff52"/><rect x="1167" width="8" height="8" fill="#00ff51"/><rect x="1174" width="8" height="8" fill="#00ff50"/><rect x="1181" width="8" height="8" fill="#00ff4e"/><rect x="1188" width="8" height="8" fill="#00ff4d"/><rect x="1195" width="8" height="8" fill="#00ff4b"/><rect x="1202" width="8" height="8" fill="#00ff4a"/><rect x="1209" width="8" height="8" fill="#00ff49"/><rect x="1216" width="8" height="8" fill="#00ff47"/><rect x="1223" width="8" height="8" fill="#00ff46"/><rect x="1230" width="8" height="8" fill="#00ff44"/><rect x="1237" width="8" height="8" fill="#00ff43"/><rect x="1244" width="8" height="8" fill="#00ff41"/><rect x="1251" width="8" height="8" fill="#00ff3f"/><rect x="1258" width="8" height="8" fill="#00ff3e"/><rect x="1265" width="8" height="8" fill="#00ff3c"/><rect x="1272" width="8" height="8" fill="#00ff3a"/><rect x="1279" width="8" height="8" fill="#00ff39"/><rect x="1286" width="8" height="8" fill="#00ff37"/><rect x="1293" width="8" height="8" fill="#00ff35"/><rect x="1300" width="8" height="8" fill="#00ff34"/><rect x="1307" width="8" height="8" fill="#00ff32"/><rect x="1314" width="8" height="8" fill="#00ff30"/><rect x="1321" width="8" height="8" fill="#00ff2e"/><rect x="1328" width="8" height="8" fill="#00ff2c"/><rect x="1335" width="8" height="8" fill="#00ff2a"/><rect x="1342" width="8" height="8" fill="#00ff28"/><rect x="1349" width="8" height="8" fill="#00ff26"/><rect x="1356" width="8" height="8" fill="#01ff24"/><rect x="1363" width="8" height="8" fill="#08ff22"/><rect x="1370" width="8" height="8" fill="#10ff20"/><rect x="1377" width="8" height="8" fill="#18ff1e"/><rect x="1384" width="8" height="8" fill="#20ff1c"/><rect x="1391" width="8" height="8" fill="#28ff1a"/><rect x="1398" width="8" height="8" fill="#30ff18"/><rect x="1405" width="8" height="8" fill="#38ff15"/><rect x="1412" width="8" height="8" fill="#40ff13"/><rect x="1419" width="8" height="8" fill="#49ff11"/><rect x="1426" width="8" height="8" fill="#52ff0e"/><rect x="1433" width="8" height="8" fill="#5bff0c"/><rect x="1440" width="8" height="8" fill="#64ff09"/><rect x="1447" width="8" height="8" fill="#6dff07"/><rect x="1454" width="8" height="8" fill="#76ff04"/><rect x="1461" width="8" height="8" fill="#80ff01"/><rect x="1468" width="8" height="8" fill="#8aff00"/><rect x="1475" width="8" height="8" fill="#94ff00"/><rect x="1482" width="8" height="8" fill="#9eff00"/><rect x="1489" width="8" height="8" fill="#a8ff00"/><rect x="1496" width="8" height="8" fill="#b3ff00"/><rect x="1503" width="8" height="8" fill="#beff00"/></g><g transform="translate(0,299)"><rect x="1146" width="8" height="8" fill="#00ff59"/><rect x="1153" width="8" height="8" fill="#00ff58"/><rect x="1160" width="8" height="8" fill="#00ff57"/><rect x="1167" width="8" height="8" fill="#00ff55"/><rect x="1174" width="8" height="8" fill="#00ff54"/><rect x="1181" width="8" height="8" fill="#00ff53"/><rect x="1188" width="8" height="8" fill="#00ff51"/><rect x="1195" width="8" height="8" fill="#00ff50"/><rect x="1202" width="8" height="8" fill="#00ff4e"/><rect x="1209" width="8" height="8" fill="#00ff4d"/><rect x="1216" width="8" height="8" fill="#00ff4c"/><rect x="1223" width="8" height="8" fill="#00ff4a"/><rect x="1230" width="8" height="8" fill="#00ff49"/><rect x="1237" width="8" height="8" fill="#00ff47"/><rect x="1244" width="8" height="8" fill="#00ff45"/><rect x="1251" width="8" height="8" fill="#00ff44"/><rect x="1258" width="8" height="8" fill="#00ff42"/><rect x="1265" width="8" height="8" fill="#00ff41"/><rect x="1272" width="8" height="8" fill="#00ff3f"/><rect x="1279" width="8" height="8" fill="#00ff3d"/><rect x="1286" width="8" height="8" fill="#00ff3c"/><rect x="1293" width="8" height="8" fill="#00ff3a"/><rect x="1300" width="8" height="8" fill="#00ff38"/><rect x="1307" width="8" height="8" fill="#00ff36"/><rect x="1314" width="8" height="8" fill="#00ff34"/><rect x="1321" width="8" height="8" fill="#00ff33"/><rect x="1328" width="8" height="8" fill="#00ff31"/><rect x="1335" width="8" height="8" fill="#00ff2f"/><rect x="1342" width="8" height="8" fill="#00ff2d"/><rect x="1349" width="8" height="8" fill="#00ff2b"/><rect x="1356" width="8" height="8" fill="#03ff29"/><rect x="1363" width="8" height="8" fill="#0aff27"/><rect x="1370" width="8" height="8" fill="#12ff25"/><rect x="1377" width="8" height="8" fill="#1aff22"/><rect x="1384" width="8" height="8" fill="#22ff20"/><rect x="1391" width="8" height="8" fill="#2aff1e"/><rect x="1398" width="8" height="8" fill="#33ff1c"/><rect x="1405" width="8" height="8" fill="#3bff1a"/><rect x="1412" width="8" height="8" fill="#44ff17"/><rect x="1419" width="8" height="8" fill="#4dff15"/><rect x="1426" width="8" height="8" fill="#56ff12"/><rect x="1433" width="8" height="8" fill="#5fff10"/><rect x="1440" width="8" height="8" fill="#68ff0d"/><rect x="1447" width="8" height="8" fill="#72ff0b"/><rect x="1454" width="8" height="8" fill="#7bff08"/><rect x="1461" width="8" height="8" fill="#85ff06"/><rect x="1468" width="8" height="8" fill="#8fff03"/><rect x="1475" width="8" height="8" fill="#9aff00"/><rect x="1482" width="8" height="8" fill="#a4ff00"/><rect x="1489" width="8" height="8" fill="#afff00"/><rect x="1496" width="8" height="8" fill="#baff00"/><rect x="1503" width="8" height="8" fill="#c5ff00"/><rect x="1510" width="8" height="8" fill="#d1ff00"/></g><g transform="translate(0,306)"><rect x="1146" width="8" height="8" fill="#00ff5e"/><rect x="1153" width="8" height="8" fill="#00ff5d"/><rect x="1160" width="8" height="8" fill="#00ff5b"/><rect x="1167" width="8" height="8" fill="#00ff5a"/><rect x="1174" width="8" height="8" fill="#00ff59"/><rect x="1181" width="8" height="8" fill="#00ff57"/><rect x="1188" width="8" height="8" fill="#00ff56"/><rect x="1195" width="8" height="8" fill="#00ff54"/><rect x="1202" width="8" height="8" fill="#00ff53"/><rect x="1209" width="8" height="8" fill="#00ff52"/><rect x="1216" width="8" height="8" fill="#00ff50"/><rect x="1223" width="8" height="8" fill="#00ff4f"/><rect x="1230" width="8" height="8" fill="#00ff4d"/><rect x="1237" width="8" height="8" fill="#00ff4c"/><rect x="1244" width="8" height="8" fill="#00ff4a"/><rect x="1251" width="8" height="8" fill="#00ff48"/><rect x="1258" width="8" height="8" fill="#00ff47"/><rect x="1265" width="8" height="8" fill="#00ff45"/><rect x="1272" width="8" height="8" fill="#00ff44"/><rect x="1279" width="8" height="8" fill="#00ff42"/><rect x="1286" width="8" height="8" fill="#00ff40"/><rect x="1293" width="8" height="8" fill="#00ff3e"/><rect x="1300" width="8" height="8" fill="#00ff3d"/><rect x="1307" width="8" height="8" fill="#00ff3b"/><rect x="1314" width="8" height="8" fill="#00ff39"/><rect x="1321" width="8" height="8" fill="#00ff37"/><rect x="1328" width="8" height="8" fill="#00ff35"/><rect x="1335" width="8" height="8" fill="#00ff33"/><rect x="1342" width="8" height="8" fill="#00ff31"/><rect x="1349" width="8" height="8" fill="#00ff2f"/><rect x="1356" width="8" height="8" fill="#05ff2d"/><rect x="1363" width="8" height="8" fill="#0dff2b"/><rect x="1370" width="8" height="8" fill="#15ff29"/><rect x="1377" width="8" height="8" fill="#1dff27"/><rect x="1384" width="8" height="8" fill="#25ff25"/><rect x="1391" width="8" height="8" fill="#2dff23"/><rect x="1398" width="8" height="8" fill="#36ff20"/><rect x="1405" width="8" height="8" fill="#3fff1e"/><rect x="1412" width="8" height="8" fill="#48ff1c"/><rect x="1419" width="8" height="8" fill="#51ff19"/><rect x="1426" width="8" height="8" fill="#5aff17"/><rect x="1433" width="8" height="8" fill="#63ff14"/><rect x="1440" width="8" height="8" fill="#6dff12"/><rect x="1447" width="8" height="8" fill="#77ff0f"/><rect x="1454" width="8" height="8" fill="#81ff0d"/><rect x="1461" width="8" height="8" fill="#8bff0a"/><rect x="1468" width="8" height="8" fill="#96ff07"/><rect x="1475" width="8" height="8" fill="#a0ff04"/><rect x="1482" width="8" height="8" fill="#abff01"/><rect x="1489" width="8" height="8" fill="#b6ff00"/><rect x="1496" width="8" height="8" fill="#c2ff00"/><rect x="1503" width="8" height="8" fill="#cdff00"/><rect x="1510" width="8" height="8" fill="#d9ff00"/><rect x="1517" width="8" height="8" fill="#e5ff00"/><rect x="1524" width="8" height="8" fill="#f2ff00"/></g><g transform="translate(0,313)"><rect x="1146" width="8" height="8" fill="#00ff63"/><rect x="1153" width="8" height="8" fill="#00ff61"/><rect x="1160" width="8" height="8" fill="#00ff60"/><rect x="1167" width="8" height="8" fill="#00ff5f"/><rect x="1174" width="8" height="8" fill="#00ff5d"/><rect x="1181" width="8" height="8" fill="#00ff5c"/><rect x="1188" width="8" height="8" fill="#00ff5b"/><rect x="1195" width="8" height="8" fill="#00ff59"/><rect x="1202" width="8" height="8" fill="#00ff58"/><rect x="1209" width="8" height="8" fill="#00ff56"/><rect x="1216" width="8" height="8" fill="#00ff55"/><rect x="1223" width="8" height="8" fill="#00ff53"/><rect x="1230" width="8" height="8" fill="#00ff52"/><rect x="1237" width="8" height="8" fill="#00ff50"/><rect x="1244" width="8" height="8" fill="#00ff4f"/><rect x="1251" width="8" height="8" fill="#00ff4d"/><rect x="1258" width="8" height="8" fill="#00ff4c"/><rect x="1265" width="8" height="8" fill="#00ff4a"/><rect x="1272" width="8" height="8" fill="#00ff48"/><rect x="1279" width="8" height="8" fill="#00ff47"/><rect x="1286" width="8" height="8" fill="#00ff45"/><rect x="1293" width="8" height="8" fill="#00ff43"/><rect x="1300" width="8" height="8" fill="#00ff41"/><rect x="1307" width="8" height="8" fill="#00ff40"/><rect x="1314" width="8" height="8" fill="#00ff3e"/><rect x="1321" width="8" height="8" fill="#00ff3c"/><rect x="1328" width="8" height="8" fill="#00ff3a"/><rect x="1335" width="8" height="8" fill="#00ff38"/><rect x="1342" width="8" height="8" fill="#00ff36"/><rect x="1349" width="8" height="8" fill="#00ff34"/><rect x="1356" width="8" height="8" fill="#07ff32"/><rect x="1363" width="8" height="8" fill="#0fff30"/><rect x="1370" width="8" height="8" fill="#17ff2e"/><rect x="1377" width="8" height="8" fill="#1fff2c"/><rect x="1384" width="8" height="8" fill="#28ff2a"/><rect x="1391" width="8" height="8" fill="#31ff27"/><rect x="1398" width="8" height="8" fill="#39ff25"/><rect x="1405" width="8" height="8" fill="#42ff23"/><rect x="1412" width="8" height="8" fill="#4cff20"/><rect x="1419" width="8" height="8" fill="#55ff1e"/><rect x="1426" width="8" height="8" fill="#5eff1c"/><rect x="1433" width="8" height="8" fill="#68ff19"/><rect x="1440" width="8" height="8" fill="#72ff16"/><rect x="1447" width="8" height="8" fill="#7cff14"/><rect x="1454" width="8" height="8" fill="#87ff11"/><rect x="1461" width="8" height="8" fill="#91ff0e"/><rect x="1468" width="8" height="8" fill="#9cff0c"/><rect x="1475" width="8" height="8" fill="#a7ff09"/><rect x="1482" width="8" height="8" fill="#b2ff06"/><rect x="1489" width="8" height="8" fill="#beff03"/><rect x="1496" width="8" height="8" fill="#caff00"/><rect x="1503" width="8" height="8" fill="#d6ff00"/><rect x="1510" width="8" height="8" fill="#e2ff00"/><rect x="1517" width="8" height="8" fill="#efff00"/><rect x="1524" width="8" height="8" fill="#fcff00"/><rect x="1531" width="8" height="8" fill="#fff500"/></g><g transform="translate(0,320)"><rect x="1146" width="8" height="8" fill="#00ff67"/><rect x="1153" width="8" height="8" fill="#00ff66"/><rect x="1160" width="8" height="8" fill="#00ff65"/><rect x="1167" width="8" height="8" fill="#00ff64"/><rect x="1174" width="8" height="8" fill="#00ff62"/><rect x="1181" width="8" height="8" fill="#00ff61"/><rect x="1188" width="8" height="8" fill="#00ff60"/><rect x="1195" width="8" height="8" fill="#00ff5e"/><rect x="1202" width="8" height="8" fill="#00ff5d"/><rect x="1209" width="8" height="8" fill="#00ff5b"/><rect x="1216" width="8" height="8" fill="#00ff5a"/><rect x="1223" width="8" height="8" fill="#00ff58"/><rect x="1230" width="8" height="8" fill="#00ff57"/><rect x="1237" width="8" height="8" fill="#00ff55"/><rect x="1244" width="8" height="8" fill="#00ff54"/><rect x="1251" width="8" height="8" fill="#00ff52"/><rect x="1258" width="8" height="8" fill="#00ff51"/><rect x="1265" width="8" height="8" fill="#00ff4f"/><rect x="1272" width="8" height="8" fill="#00ff4d"/><rect x="1279" width="8" height="8" fill="#00ff4c"/><rect x="1286" width="8" height="8" fill="#00ff4a"/><rect x="1293" width="8" height="8" fill="#00ff48"/><rect x="1300" width="8" height="8" fill="#00ff47"/><rect x="1307" width="8" height="8" fill="#00ff45"/><rect x="1314" width="8" height="8" fill="#00ff43"/><rect x="1321" width="8" height="8" fill="#00ff41"/><rect x="1328" width="8" height="8" fill="#00ff3f"/><rect x="1335" width="8" height="8" fill="#00ff3d"/><rect x="1342" width="8" height="8" fill="#00ff3b"/><rect x="1349" width="8" height="8" fill="#01ff39"/><rect x="1356" width="8" height="8" fill="#09ff37"/><rect x="1363" width="8" height="8" fill="#11ff35"/><rect x="1370" width="8" height="8" fill="#1aff33"/><rect x="1377" width="8" height="8" fill="#22ff31"/><rect x="1384" width="8" height="8" fill="#2bff2f"/><rect x="1391" width="8" height="8" fill="#34ff2c"/><rect x="1398" width="8" height="8" fill="#3dff2a"/><rect x="1405" width="8" height="8" fill="#46ff28"/><rect x="1412" width="8" height="8" fill="#50ff25"/><rect x="1419" width="8" height="8" fill="#59ff23"/><rect x="1426" width="8" height="8" fill="#63ff20"/><rect x="1433" width="8" height="8" fill="#6dff1e"/><rect x="1440" width="8" height="8" fill="#78ff1b"/><rect x="1447" width="8" height="8" fill="#82ff19"/><rect x="1454" width="8" height="8" fill="#8dff16"/><rect x="1461" width="8" height="8" fill="#98ff13"/><rect x="1468" width="8" height="8" fill="#a3ff10"/><rect x="1475" width="8" height="8" fill="#aeff0e"/><rect x="1482" width="8" height="8" fill="#baff0b"/><rect x="1489" width="8" height="8" fill="#c6ff08"/><rect x="1496" width="8" height="8" fill="#d2ff05"/><rect x="1503" width="8" height="8" fill="#dfff01"/><rect x="1510" width="8" height="8" fill="#ecff00"/><rect x="1517" width="8" height="8" fill="#f9ff00"/><rect x="1524" width="8" height="8" fill="#fff800"/><rect x="1531" width="8" height="8" fill="#ffeb00"/><rect x="1538" width="8" height="8" fill="#ffe000"/></g><g transform="translate(0,327)"><rect x="1153" width="8" height="8" fill="#00ff6b"/><rect x="1160" width="8" height="8" fill="#00ff6a"/><rect x="1167" width="8" height="8" fill="#00ff69"/><rect x="1174" width="8" height="8" fill="#00ff67"/><rect x="1181" width="8" height="8" fill="#00ff66"/><rect x="1188" width="8" height="8" fill="#00ff65"/><rect x="1195" width="8" height="8" fill="#00ff63"/><rect x="1202" width="8" height="8" fill="#00ff62"/><rect x="1209" width="8" height="8" fill="#00ff61"/><rect x="1216" width="8" height="8" fill="#00ff5f"/><rect x="1223" width="8" height="8" fill="#00ff5e"/><rect x="1230" width="8" height="8" fill="#00ff5c"/><rect x="1237" width="8" height="8" fill="#00ff5b"/><rect x="1244" width="8" height="8" fill="#00ff59"/><rect x="1251" width="8" height="8" fill="#00ff58"/><rect x="1258" width="8" height="8" fill="#00ff56"/><rect x="1265" width="8" height="8" fill="#00ff54"/><rect x="1272" width="8" height="8" fill="#00ff53"/><rect x="1279" width="8" height="8" fill="#00ff51"/><rect x="1286" width="8" height="8" fill="#00ff4f"/><rect x="1293" width="8" height="8" fill="#00ff4e"/><rect x="1300" width="8" height="8" fill="#00ff4c"/><rect x="1307" width="8" height="8" fill="#00ff4a"/><rect x="1314" width="8" height="8" fill="#00ff48"/><rect x="1321" width="8" height="8" fill="#00ff46"/><rect x="1328" width="8" height="8" fill="#00ff44"/><rect x="1335" width="8" height="8" fill="#00ff43"/><rect x="1342" width="8" height="8" fill="#00ff41"/><rect x="1349" width="8" height="8" fill="#03ff3f"/><rect x="1356" width="8" height="8" fill="#0bff3d"/><rect x="1363" width="8" height="8" fill="#14ff3a"/><rect x="1370" width="8" height="8" fill="#1cff38"/><rect x="1377" width="8" height="8" fill="#25ff36"/><rect x="1384" width="8" height="8" fill="#2eff34"/><rect x="1391" width="8" height="8" fill="#37ff32"/><rect x="1398" width="8" height="8" fill="#41ff2f"/><rect x="1405" width="8" height="8" fill="#4aff2d"/><rect x="1412" width="8" height="8" fill="#54ff2b"/><rect x="1419" width="8" height="8" fill="#5eff28"/><rect x="1426" width="8" height="8" fill="#68ff26"/><rect x="1433" width="8" height="8" fill="#73ff23"/><rect x="1440" width="8" height="8" fill="#7dff21"/><rect x="1447" width="8" height="8" fill="#88ff1e"/><rect x="1454" width="8" height="8" fill="#93ff1b"/><rect x="1461" width="8" height="8" fill="#9fff18"/><rect x="1468" width="8" height="8" fill="#aaff16"/><rect x="1475" width="8" height="8" fill="#b6ff13"/><rect x="1482" width="8" height="8" fill="#c2ff10"/><rect x="1489" width="8" height="8" fill="#cfff0d"/><rect x="1496" width="8" height="8" fill="#dcff09"/><rect x="1503" width="8" height="8" fill="#e9ff06"/><rect x="1510" width="8" height="8" fill="#f6ff03"/><rect x="1517" width="8" height="8" fill="#fffa00"/><rect x="1524" width="8" height="8" fill="#ffee00"/><rect x="1531" width="8" height="8" fill="#ffe200"/><rect x="1538" width="8" height="8" fill="#ffd700"/><rect x="1545" width="8" height="8" fill="#ffcc00"/><rect x="1552" width="8" height="8" fill="#ffc300"/></g><g transform="translate(0,334)"><rect x="1153" width="8" height="8" fill="#00ff71"/><rect x="1160" width="8" height="8" fill="#00ff6f"/><rect x="1167" width="8" height="8" fill="#00ff6e"/><rect x="1174" width="8" height="8" fill="#00ff6d"/><rect x="1181" width="8" height="8" fill="#00ff6b"/><rect x="1188" width="8" height="8" fill="#00ff6a"/><rect x="1195" width="8" height="8" fill="#00ff69"/><rect x="1202" width="8" height="8" fill="#00ff67"/><rect x="1209" width="8" height="8" fill="#00ff66"/><rect x="1216" width="8" height="8" fill="#00ff65"/><rect x="1223" width="8" height="8" fill="#00ff63"/><rect x="1230" width="8" height="8" fill="#00ff62"/><rect x="1237" width="8" height="8" fill="#00ff60"/><rect x="1244" width="8" height="8" fill="#00ff5f"/><rect x="1251" width="8" height="8" fill="#00ff5d"/><rect x="1258" width="8" height="8" fill="#00ff5b"/><rect x="1265" width="8" height="8" fill="#00ff5a"/><rect x="1272" width="8" height="8" fill="#00ff58"/><rect x="1279" width="8" height="8" fill="#00ff57"/><rect x="1286" width="8" height="8" fill="#00ff55"/><rect x="1293" width="8" height="8" fill="#00ff53"/><rect x="1300" width="8" height="8" fill="#00ff51"/><rect x="1307" width="8" height="8" fill="#00ff50"/><rect x="1314" width="8" height="8" fill="#00ff4e"/><rect x="1321" width="8" height="8" fill="#00ff4c"/><rect x="1328" width="8" height="8" fill="#00ff4a"/><rect x="1335" width="8" height="8" fill="#00ff48"/><rect x="1342" width="8" height="8" fill="#00ff46"/><rect x="1349" width="8" height="8" fill="#05ff44"/><rect x="1356" width="8" height="8" fill="#0dff42"/><rect x="1363" width="8" height="8" fill="#16ff40"/><rect x="1370" width="8" height="8" fill="#1fff3e"/><rect x="1377" width="8" height="8" fill="#28ff3c"/><rect x="1384" width="8" height="8" fill="#32ff3a"/><rect x="1391" width="8" height="8" fill="#3bff37"/><rect x="1398" width="8" height="8" fill="#45ff35"/><rect x="1405" width="8" height="8" fill="#4fff33"/><rect x="1412" width="8" height="8" fill="#59ff30"/><rect x="1419" width="8" height="8" fill="#63ff2e"/><rect x="1426" width="8" height="8" fill="#6eff2b"/><rect x="1433" width="8" height="8" fill="#78ff29"/><rect x="1440" width="8" height="8" fill="#83ff26"/><rect x="1447" width="8" height="8" fill="#8fff23"/><rect x="1454" width="8" height="8" fill="#9aff21"/><rect x="1461" width="8" height="8" fill="#a6ff1e"/><rect x="1468" width="8" height="8" fill="#b2ff1b"/><rect x="1475" width="8" height="8" fill="#beff18"/><rect x="1482" width="8" height="8" fill="#cbff15"/><rect x="1489" width="8" height="8" fill="#d8ff12"/><rect x="1496" width="8" height="8" fill="#e5ff0f"/><rect x="1503" width="8" height="8" fill="#f3ff0c"/><rect x="1510" width="8" height="8" fill="#fffd08"/><rect x="1517" width="8" height="8" fill="#fff005"/><rect x="1524" width="8" height="8" fill="#ffe301"/><rect x="1531" width="8" height="8" fill="#ffd800"/><rect x="1538" width="8" height="8" fill="#ffce00"/><rect x="1545" width="8" height="8" fill="#ffc400"/><rect x="1552" width="8" height="8" fill="#ffbb00"/><rect x="1559" width="8" height="8" fill="#ffb200"/></g><g transform="translate(0,341)"><rect x="1153" width="8" height="8" fill="#00ff76"/><rect x="1160" width="8" height="8" fill="#00ff75"/><rect x="1167" width="8" height="8" fill="#00ff74"/><rect x="1174" width="8" height="8" fill="#00ff72"/><rect x="1181" width="8" height="8" fill="#00ff71"/><rect x="1188" width="8" height="8" fill="#00ff70"/><rect x="1195" width="8" height="8" fill="#00ff6e"/><rect x="1202" width="8" height="8" fill="#00ff6d"/><rect x="1209" width="8" height="8" fill="#00ff6c"/><rect x="1216" width="8" height="8" fill="#00ff6a"/><rect x="1223" width="8" height="8" fill="#00ff69"/><rect x="1230" width="8" height="8" fill="#00ff67"/><rect x="1237" width="8" height="8" fill="#00ff66"/><rect x="1244" width="8" height="8" fill="#00ff64"/><rect x="1251" width="8" height="8" fill="#00ff63"/><rect x="1258" width="8" height="8" fill="#00ff61"/><rect x="1265" width="8" height="8" fill="#00ff60"/><rect x="1272" width="8" height="8" fill="#00ff5e"/><rect x="1279" width="8" height="8" fill="#00ff5c"/><rect x="1286" width="8" height="8" fill="#00ff5b"/><rect x="1293" width="8" height="8" fill="#00ff59"/><rect x="1300" width="8" height="8" fill="#00ff57"/><rect x="1307" width="8" height="8" fill="#00ff55"/><rect x="1314" width="8" height="8" fill="#00ff54"/><rect x="1321" width="8" height="8" fill="#00ff52"/><rect x="1328" width="8" height="8" fill="#00ff50"/><rect x="1335" width="8" height="8" fill="#00ff4e"/><rect x="1342" width="8" height="8" fill="#00ff4c"/><rect x="1349" width="8" height="8" fill="#07ff4a"/><rect x="1356" width="8" height="8" fill="#10ff48"/><rect x="1363" width="8" height="8" fill="#19ff46"/><rect x="1370" width="8" height="8" fill="#22ff44"/><rect x="1377" width="8" height="8" fill="#2cff42"/><rect x="1384" width="8" height="8" fill="#35ff3f"/><rect x="1391" width="8" height="8" fill="#3fff3d"/><rect x="1398" width="8" height="8" fill="#49ff3b"/><rect x="1405" width="8" height="8" fill="#53ff39"/><rect x="1412" width="8" height="8" fill="#5eff36"/><rect x="1419" width="8" height="8" fill="#68ff34"/><rect x="1426" width="8" height="8" fill="#73ff31"/><rect x="1433" width="8" height="8" fill="#7eff2f"/><rect x="1440" width="8" height="8" fill="#8aff2c"/><rect x="1447" width="8" height="8" fill="#96ff29"/><rect x="1454" width="8" height="8" fill="#a2ff26"/><rect x="1461" width="8" height="8" fill="#aeff24"/><rect x="1468" width="8" height="8" fill="#baff21"/><rect x="1475" width="8" height="8" fill="#c7ff1e"/><rect x="1482" width="8" height="8" fill="#d4ff1b"/><rect x="1489" width="8" height="8" fill="#e2ff18"/><rect x="1496" width="8" height="8" fill="#f0ff14"/><rect x="1503" width="8" height="8" fill="#feff11"/><rect x="1510" width="8" height="8" fill="#fff20d"/><rect x="1517" width="8" height="8" fill="#ffe509"/><rect x="1524" width="8" height="8" fill="#ffda06"/><rect x="1531" width="8" height="8" fill="#ffcf03"/><rect x="1538" width="8" height="8" fill="#ffc500"/><rect x="1545" width="8" height="8" fill="#ffbb00"/><rect x="1552" width="8" height="8" fill="#ffb200"/><rect x="1559" width="8" height="8" fill="#ffaa00"/><rect x="1566" width="8" height="8" fill="#ffa200"/></g><g transform="translate(0,348)"><rect x="1153" width="8" height="8" fill="#00ff7c"/><rect x="1160" width="8" height="8" fill="#00ff7b"/><rect x="1167" width="8" height="8" fill="#00ff79"/><rect x="1174" width="8" height="8" fill="#00ff78"/><rect x="1181" width="8" height="8" fill="#00ff77"/><rect x="1188" width="8" height="8" fill="#00ff76"/><rect x="1195" width="8" height="8" fill="#00ff74"/><rect x="1202" width="8" height="8" fill="#00ff73"/><rect x="1209" width="8" height="8" fill="#00ff72"/><rect x="1216" width="8" height="8" fill="#00ff70"/><rect x="1223" width="8" height="8" fill="#00ff6f"/><rect x="1230" width="8" height="8" fill="#00ff6d"/><rect x="1237" width="8" height="8" fill="#00ff6c"/><rect x="1244" width="8" height="8" fill="#00ff6a"/><rect x="1251" width="8" height="8" fill="#00ff69"/><rect x="1258" width="8" height="8" fill="#00ff67"/><rect x="1265" width="8" height="8" fill="#00ff66"/><rect x="1272" width="8" height="8" fill="#00ff64"/><rect x="1279" width="8" height="8" fill="#00ff63"/><rect x="1286" width="8" height="8" fill="#00ff61"/><rect x="1293" width="8" height="8" fill="#00ff5f"/><rect x="1300" width="8" height="8" fill="#00ff5d"/><rect x="1307" width="8" height="8" fill="#00ff5c"/><rect x="1314" width="8" height="8" fill="#00ff5a"/><rect x="1321" width="8" height="8" fill="#00ff58"/><rect x="1328" width="8" height="8" fill="#00ff56"/><rect x="1335" width="8" height="8" fill="#00ff54"/><rect x="1342" width="8" height="8" fill="#01ff52"/><rect x="1349" width="8" height="8" fill="#09ff50"/><rect x="1356" width="8" height="8" fill="#13ff4e"/><rect x="1363" width="8" height="8" fill="#1cff4c"/><rect x="1370" width="8" height="8" fill="#25ff4a"/><rect x="1377" width="8" height="8" fill="#2fff48"/><rect x="1384" width="8" height="8" fill="#39ff46"/><rect x="1391" width="8" height="8" fill="#43ff43"/><rect x="1398" width="8" height="8" fill="#4dff41"/><rect x="1405" width="8" height="8" fill="#58ff3f"/><rect x="1412" width="8" height="8" fill="#63ff3c"/><rect x="1419" width="8" height="8" fill="#6eff3a"/><rect x="1426" width="8" height="8" fill="#79ff37"/><rect x="1433" width="8" height="8" fill="#85ff35"/><rect x="1440" width="8" height="8" fill="#91ff32"/><rect x="1447" width="8" height="8" fill="#9dff2f"/><rect x="1454" width="8" height="8" fill="#a9ff2d"/><rect x="1461" width="8" height="8" fill="#b6ff2a"/><rect x="1468" width="8" height="8" fill="#c3ff27"/><rect x="1475" width="8" height="8" fill="#d1ff24"/><rect x="1482" width="8" height="8" fill="#deff21"/><rect x="1489" width="8" height="8" fill="#ecff1e"/><rect x="1496" width="8" height="8" fill="#fbff1a"/><rect x="1503" width="8" height="8" fill="#fff516"/><rect x="1510" width="8" height="8" fill="#ffe712"/><rect x="1517" width="8" height="8" fill="#ffdb0e"/><rect x="1524" width="8" height="8" fill="#ffd00a"/><rect x="1531" width="8" height="8" fill="#ffc507"/><rect x="1538" width="8" height="8" fill="#ffbc04"/><rect x="1545" width="8" height="8" fill="#ffb301"/><rect x="1552" width="8" height="8" fill="#ffaa00"/><rect x="1559" width="8" height="8" fill="#ffa200"/><rect x="1566" width="8" height="8" fill="#ff9b00"/><rect x="1573" width="8" height="8" fill="#ff9400"/><rect x="1580" width="8" height="8" fill="#ff8d00"/></g><g transform="translate(0,355)"><rect x="1153" width="8" height="8" fill="#00ff82"/><rect x="1160" width="8" height="8" fill="#00ff81"/><rect x="1167" width="8" height="8" fill="#00ff80"/><rect x="1174" width="8" height="8" fill="#00ff7e"/><rect x="1181" width="8" height="8" fill="#00ff7d"/><rect x="1188" width="8" height="8" fill="#00ff7c"/><rect x="1195" width="8" height="8" fill="#00ff7a"/><rect x="1202" width="8" height="8" fill="#00ff79"/><rect x="1209" width="8" height="8" fill="#00ff78"/><rect x="1216" width="8" height="8" fill="#00ff76"/><rect x="1223" width="8" height="8" fill="#00ff75"/><rect x="1230" width="8" height="8" fill="#00ff74"/><rect x="1237" width="8" height="8" fill="#00ff72"/><rect x="1244" width="8" height="8" fill="#00ff71"/><rect x="1251" width="8" height="8" fill="#00ff6f"/><rect x="1258" width="8" height="8" fill="#00ff6e"/><rect x="1265" width="8" height="8" fill="#00ff6c"/><rect x="1272" width="8" height="8" fill="#00ff6b"/><rect x="1279" width="8" height="8" fill="#00ff69"/><rect x="1286" width="8" height="8" fill="#00ff67"/><rect x="1293" width="8" height="8" fill="#00ff66"/><rect x="1300" width="8" height="8" fill="#00ff64"/><rect x="1307" width="8" height="8" fill="#00ff62"/><rect x="1314" width="8" height="8" fill="#00ff60"/><rect x="1321" width="8" height="8" fill="#00ff5f"/><rect x="1328" width="8" height="8" fill="#00ff5d"/><rect x="1335" width="8" height="8" fill="#00ff5b"/><rect x="1342" width="8" height="8" fill="#03ff59"/><rect x="1349" width="8" height="8" fill="#0cff57"/><rect x="1356" width="8" height="8" fill="#15ff55"/><rect x="1363" width="8" height="8" fill="#1fff53"/><rect x="1370" width="8" height="8" fill="#29ff51"/><rect x="1377" width="8" height="8" fill="#33ff4f"/><rect x="1384" width="8" height="8" fill="#3dff4c"/><rect x="1391" width="8" height="8" fill="#47ff4a"/><rect x="1398" width="8" height="8" fill="#52ff48"/><rect x="1405" width="8" height="8" fill="#5dff45"/><rect x="1412" width="8" height="8" fill="#68ff43"/><rect x="1419" width="8" height="8" fill="#74ff41"/><rect x="1426" width="8" height="8" fill="#80ff3e"/><rect x="1433" width="8" height="8" fill="#8cff3b"/><rect x="1440" width="8" height="8" fill="#98ff39"/><rect x="1447" width="8" height="8" fill="#a5ff36"/><rect x="1454" width="8" height="8" fill="#b2ff33"/><rect x="1461" width="8" height="8" fill="#bfff30"/><rect x="1468" width="8" height="8" fill="#cdff2e"/><rect x="1475" width="8" height="8" fill="#dbff2b"/><rect x="1482" width="8" height="8" fill="#e9ff27"/><rect x="1489" width="8" height="8" fill="#f8ff24"/><rect x="1496" width="8" height="8" fill="#fff720"/><rect x="1503" width="8" height="8" fill="#ffe91b"/><rect x="1510" width="8" height="8" fill="#ffdd17"/><rect x="1517" width="8" height="8" fill="#ffd113"/><rect x="1524" width="8" height="8" fill="#ffc60f"/><rect x="1531" width="8" height="8" fill="#ffbc0b"/><rect x="1538" width="8" height="8" fill="#ffb308"/><rect x="1545" width="8" height="8" fill="#ffaa05"/><rect x="1552" width="8" height="8" fill="#ffa202"/><rect x="1559" width="8" height="8" fill="#ff9b00"/><rect x="1566" width="8" height="8" fill="#ff9300"/><rect x="1573" width="8" height="8" fill="#ff8d00"/><rect x="1580" width="8" height="8" fill="#ff8700"/><rect x="1587" width="8" height="8" fill="#ff8100"/></g><g transform="translate(0,362)"><rect x="1153" width="8" height="8" fill="#00ff88"/><rect x="1160" width="8" height="8" fill="#00ff87"/><rect x="1167" width="8" height="8" fill="#00ff86"/><rect x="1174" width="8" height="8" fill="#00ff85"/><rect x="1181" width="8" height="8" fill="#00ff83"/><rect x="1188" width="8" height="8" fill="#00ff82"/><rect x="1195" width="8" height="8" fill="#00ff81"/><rect x="1202" width="8" height="8" fill="#00ff80"/><rect x="1209" width="8" height="8" fill="#00ff7e"/><rect x="1216" width="8" height="8" fill="#00ff7d"/><rect x="1223" width="8" height="8" fill="#00ff7c"/><rect x="1230" width="8" height="8" fill="#00ff7a"/><rect x="1237" width="8" height="8" fill="#00ff79"/><rect x="1244" width="8" height="8" fill="#00ff77"/><rect x="1251" width="8" height="8" fill="#00ff76"/><rect x="1258" width="8" height="8" fill="#00ff74"/><rect x="1265" width="8" height="8" fill="#00ff73"/><rect x="1272" width="8" height="8" fill="#00ff71"/><rect x="1279" width="8" height="8" fill="#00ff70"/><rect x="1286" width="8" height="8" fill="#00ff6e"/><rect x="1293" width="8" height="8" fill="#00ff6c"/><rect x="1300" width="8" height="8" fill="#00ff6b"/><rect x="1307" width="8" height="8" fill="#00ff69"/><rect x="1314" width="8" height="8" fill="#00ff67"/><rect x="1321" width="8" height="8" fill="#00ff65"/><rect x="1328" width="8" height="8" fill="#00ff64"/><rect x="1335" width="8" height="8" fill="#00ff62"/><rect x="1342" width="8" height="8" fill="#05ff60"/><rect x="1349" width="8" height="8" fill="#0fff5e"/><rect x="1356" width="8" height="8" fill="#18ff5c"/><rect x="1363" width="8" height="8" fill="#22ff5a"/><rect x="1370" width="8" height="8" fill="#2cff58"/><rect x="1377" width="8" height="8" fill="#37ff56"/><rect x="1384" width="8" height="8" fill="#41ff53"/><rect x="1391" width="8" height="8" fill="#4cff51"/><rect x="1398" width="8" height="8" fill="#57ff4f"/><rect x="1405" width="8" height="8" fill="#63ff4d"/><rect x="1412" width="8" height="8" fill="#6eff4a"/><rect x="1419" width="8" height="8" fill="#7aff48"/><rect x="1426" width="8" height="8" fill="#86ff45"/><rect x="1433" width="8" height="8" fill="#93ff43"/><rect x="1440" width="8" height="8" fill="#a0ff40"/><rect x="1447" width="8" height="8" fill="#adff3d"/><rect x="1454" width="8" height="8" fill="#bbff3a"/><rect x="1461" width="8" height="8" fill="#c8ff38"/><rect x="1468" width="8" height="8" fill="#d7ff35"/><rect x="1475" width="8" height="8" fill="#e5ff32"/><rect x="1482" width="8" height="8" fill="#f4ff2e"/><rect x="1489" width="8" height="8" fill="#fffa2a"/><rect x="1496" width="8" height="8" fill="#ffec25"/><rect x="1503" width="8" height="8" fill="#ffdf20"/><rect x="1510" width="8" height="8" fill="#ffd21b"/><rect x="1517" width="8" height="8" fill="#ffc717"/><rect x="1524" width="8" height="8" fill="#ffbd13"/><rect x="1531" width="8" height="8" fill="#ffb310"/><rect x="1538" width="8" height="8" fill="#ffaa0c"/><rect x="1545" width="8" height="8" fill="#ffa209"/><rect x="1552" width="8" height="8" fill="#ff9a06"/><rect x="1559" width="8" height="8" fill="#ff9303"/><rect x="1566" width="8" height="8" fill="#ff8c01"/><rect x="1573" width="8" height="8" fill="#ff8600"/><rect x="1580" width="8" height="8" fill="#ff8000"/><rect x="1587" width="8" height="8" fill="#ff7a00"/><rect x="1594" width="8" height="8" fill="#ff7500"/></g><g transform="translate(0,369)"><rect x="1153" width="8" height="8" fill="#00ff8f"/><rect x="1160" width="8" height="8" fill="#00ff8e"/><rect x="1167" width="8" height="8" fill="#00ff8d"/><rect x="1174" width="8" height="8" fill="#00ff8b"/><rect x="1181" width="8" height="8" fill="#00ff8a"/><rect x="1188" width="8" height="8" fill="#00ff89"/><rect x="1195" width="8" height="8" fill="#00ff88"/><rect x="1202" width="8" height="8" fill="#00ff86"/><rect x="1209" width="8" height="8" fill="#00ff85"/><rect x="1216" width="8" height="8" fill="#00ff84"/><rect x="1223" width="8" height="8" fill="#00ff82"/><rect x="1230" width="8" height="8" fill="#00ff81"/><rect x="1237" width="8" height="8" fill="#00ff80"/><rect x="1244" width="8" height="8" fill="#00ff7e"/><rect x="1251" width="8" height="8" fill="#00ff7d"/><rect x="1258" width="8" height="8" fill="#00ff7b"/><rect x="1265" width="8" height="8" fill="#00ff7a"/><rect x="1272" width="8" height="8" fill="#00ff78"/><rect x="1279" width="8" height="8" fill="#00ff77"/><rect x="1286" width="8" height="8" fill="#00ff75"/><rect x="1293" width="8" height="8" fill="#00ff74"/><rect x="1300" width="8" height="8" fill="#00ff72"/><rect x="1307" width="8" height="8" fill="#00ff70"/><rect x="1314" width="8" height="8" fill="#00ff6e"/><rect x="1321" width="8" height="8" fill="#00ff6d"/><rect x="1328" width="8" height="8" fill="#00ff6b"/><rect x="1335" width="8" height="8" fill="#00ff69"/><rect x="1342" width="8" height="8" fill="#07ff67"/><rect x="1349" width="8" height="8" fill="#11ff65"/><rect x="1356" width="8" height="8" fill="#1bff63"/><rect x="1363" width="8" height="8" fill="#26ff61"/><rect x="1370" width="8" height="8" fill="#30ff5f"/><rect x="1377" width="8" height="8" fill="#3bff5d"/><rect x="1384" width="8" height="8" fill="#46ff5b"/><rect x="1391" width="8" height="8" fill="#51ff59"/><rect x="1398" width="8" height="8" fill="#5dff56"/><rect x="1405" width="8" height="8" fill="#68ff54"/><rect x="1412" width="8" height="8" fill="#75ff52"/><rect x="1419" width="8" height="8" fill="#81ff4f"/><rect x="1426" width="8" height="8" fill="#8eff4d"/><rect x="1433" width="8" height="8" fill="#9bff4a"/><rect x="1440" width="8" height="8" fill="#a8ff47"/><rect x="1447" width="8" height="8" fill="#b6ff45"/><rect x="1454" width="8" height="8" fill="#c4ff42"/><rect x="1461" width="8" height="8" fill="#d3ff3f"/><rect x="1468" width="8" height="8" fill="#e2ff3c"/><rect x="1475" width="8" height="8" fill="#f1ff39"/><rect x="1482" width="8" height="8" fill="#fffd36"/><rect x="1489" width="8" height="8" fill="#ffee2f"/><rect x="1496" width="8" height="8" fill="#ffe02a"/><rect x="1503" width="8" height="8" fill="#ffd425"/><rect x="1510" width="8" height="8" fill="#ffc820"/><rect x="1517" width="8" height="8" fill="#ffbe1c"/><rect x="1524" width="8" height="8" fill="#ffb417"/><rect x="1531" width="8" height="8" fill="#ffab14"/><rect x="1538" width="8" height="8" fill="#ffa210"/><rect x="1545" width="8" height="8" fill="#ff9a0d"/><rect x="1552" width="8" height="8" fill="#ff930a"/><rect x="1559" width="8" height="8" fill="#ff8c07"/><rect x="1566" width="8" height="8" fill="#ff8504"/><rect x="1573" width="8" height="8" fill="#ff7f02"/><rect x="1580" width="8" height="8" fill="#ff7900"/><rect x="1587" width="8" height="8" fill="#ff7400"/><rect x="1594" width="8" height="8" fill="#ff6e00"/><rect x="1601" width="8" height="8" fill="#ff6900"/></g><g transform="translate(0,376)"><rect x="1160" width="8" height="8" fill="#00ff95"/><rect x="1167" width="8" height="8" fill="#00ff94"/><rect x="1174" width="8" height="8" fill="#00ff92"/><rect x="1181" width="8" height="8" fill="#00ff91"/><rect x="1188" width="8" height="8" fill="#00ff90"/><rect x="1195" width="8" height="8" fill="#00ff8f"/><rect x="1202" width="8" height="8" fill="#00ff8e"/><rect x="1209" width="8" height="8" fill="#00ff8c"/><rect x="1216" width="8" height="8" fill="#00ff8b"/><rect x="1223" width="8" height="8" fill="#00ff8a"/><rect x="1230" width="8" height="8" fill="#00ff88"/><rect x="1237" width="8" height="8" fill="#00ff87"/><rect x="1244" width="8" height="8" fill="#00ff86"/><rect x="1251" width="8" height="8" fill="#00ff84"/><rect x="1258" width="8" height="8" fill="#00ff83"/><rect x="1265" width="8" height="8" fill="#00ff81"/><rect x="1272" width="8" height="8" fill="#00ff80"/><rect x="1279" width="8" height="8" fill="#00ff7e"/><rect x="1286" width="8" height="8" fill="#00ff7d"/><rect x="1293" width="8" height="8" fill="#00ff7b"/><rect x="1300" width="8" height="8" fill="#00ff7a"/><rect x="1307" width="8" height="8" fill="#00ff78"/><rect x="1314" width="8" height="8" fill="#00ff76"/><rect x="1321" width="8" height="8" fill="#00ff74"/><rect x="1328" width="8" height="8" fill="#00ff73"/><rect x="1335" width="8" height="8" fill="#00ff71"/><rect x="1342" width="8" height="8" fill="#0aff6f"/><rect x="1349" width="8" height="8" fill="#14ff6d"/><rect x="1356" width="8" height="8" fill="#1fff6b"/><rect x="1363" width="8" height="8" fill="#29ff69"/><rect x="1370" width="8" height="8" fill="#34ff67"/><rect x="1377" width="8" height="8" fill="#3fff65"/><rect x="1384" width="8" height="8" fill="#4bff63"/><rect x="1391" width="8" height="8" fill="#56ff61"/><rect x="1398" width="8" height="8" fill="#62ff5e"/><rect x="1405" width="8" height="8" fill="#6fff5c"/><rect x="1412" width="8" height="8" fill="#7bff5a"/><rect x="1419" width="8" height="8" fill="#88ff57"/><rect x="1426" width="8" height="8" fill="#96ff55"/><rect x="1433" width="8" height="8" fill="#a3ff52"/><rect x="1440" width="8" height="8" fill="#b1ff50"/><rect x="1447" width="8" height="8" fill="#c0ff4d"/><rect x="1454" width="8" height="8" fill="#ceff4a"/><rect x="1461" width="8" height="8" fill="#deff47"/><rect x="1468" width="8" height="8" fill="#edff44"/><rect x="1475" width="8" height="8" fill="#fdff41"/><rect x="1482" width="8" height="8" fill="#fff13b"/><rect x="1489" width="8" height="8" fill="#ffe234"/><rect x="1496" width="8" height="8" fill="#ffd52f"/><rect x="1503" width="8" height="8" fill="#ffc929"/><rect x="1510" width="8" height="8" fill="#ffbe24"/><rect x="1517" width="8" height="8" fill="#ffb420"/><rect x="1524" width="8" height="8" fill="#ffab1c"/><rect x="1531" width="8" height="8" fill="#ffa218"/><rect x="1538" width="8" height="8" fill="#ff9a14"/><rect x="1545" width="8" height="8" fill="#ff9211"/><rect x="1552" width="8" height="8" fill="#ff8b0e"/><rect x="1559" width="8" height="8" fill="#ff840b"/><rect x="1566" width="8" height="8" fill="#ff7e08"/><rect x="1573" width="8" height="8" fill="#ff7805"/><rect x="1580" width="8" height="8" fill="#ff7203"/><rect x="1587" width="8" height="8" fill="#ff6d00"/><rect x="1594" width="8" height="8" fill="#ff6800"/><rect x="1601" width="8" height="8" fill="#ff6400"/><rect x="1608" width="8" height="8" fill="#ff5f00"/><rect x="1615" width="8" height="8" fill="#ff5b00"/></g><g transform="translate(0,383)"><rect x="1160" width="8" height="8" fill="#00ff9c"/><rect x="1167" width="8" height="8" fill="#00ff9b"/><rect x="1174" width="8" height="8" fill="#00ff9a"/><rect x="1181" width="8" height="8" fill="#00ff99"/><rect x="1188" width="8" height="8" fill="#00ff97"/><rect x="1195" width="8" height="8" fill="#00ff96"/><rect x="1202" width="8" height="8" fill="#00ff95"/><rect x="1209" width="8" height="8" fill="#00ff94"/><rect x="1216" width="8" height="8" fill="#00ff93"/><rect x="1223" width="8" height="8" fill="#00ff91"/><rect x="1230" width="8" height="8" fill="#00ff90"/><rect x="1237" width="8" height="8" fill="#00ff8f"/><rect x="1244" width="8" height="8" fill="#00ff8d"/><rect x="1251" width="8" height="8" fill="#00ff8c"/><rect x="1258" width="8" height="8" fill="#00ff8b"/><rect x="1265" width="8" height="8" fill="#00ff89"/><rect x="1272" width="8" height="8" fill="#00ff88"/><rect x="1279" width="8" height="8" fill="#00ff86"/><rect x="1286" width="8" height="8" fill="#00ff85"/><rect x="1293" width="8" height="8" fill="#00ff83"/><rect x="1300" width="8" height="8" fill="#00ff82"/><rect x="1307" width="8" height="8" fill="#00ff80"/><rect x="1314" width="8" height="8" fill="#00ff7e"/><rect x="1321" width="8" height="8" fill="#00ff7d"/><rect x="1328" width="8" height="8" fill="#00ff7b"/><rect x="1335" width="8" height="8" fill="#03ff79"/><rect x="1342" width="8" height="8" fill="#0dff77"/><rect x="1349" width="8" height="8" fill="#17ff75"/><rect x="1356" width="8" height="8" fill="#22ff74"/><rect x="1363" width="8" height="8" fill="#2dff72"/><rect x="1370" width="8" height="8" fill="#38ff70"/><rect x="1377" width="8" height="8" fill="#44ff6d"/><rect x="1384" width="8" height="8" fill="#50ff6b"/><rect x="1391" width="8" height="8" fill="#5cff69"/><rect x="1398" width="8" height="8" fill="#69ff67"/><rect x="1405" width="8" height="8" fill="#75ff65"/><rect x="1412" width="8" height="8" fill="#82ff62"/><rect x="1419" width="8" height="8" fill="#90ff60"/><rect x="1426" width="8" height="8" fill="#9eff5e"/><rect x="1433" width="8" height="8" fill="#acff5b"/><rect x="1440" width="8" height="8" fill="#bbff58"/><rect x="1447" width="8" height="8" fill="#caff56"/><rect x="1454" width="8" height="8" fill="#d9ff53"/><rect x="1461" width="8" height="8" fill="#e9ff50"/><rect x="1468" width="8" height="8" fill="#faff4d"/><rect x="1475" width="8" height="8" fill="#fff447"/><rect x="1482" width="8" height="8" fill="#ffe540"/><rect x="1489" width="8" height="8" fill="#ffd739"/><rect x="1496" width="8" height="8" fill="#ffca33"/><rect x="1503" width="8" height="8" fill="#ffbf2e"/><rect x="1510" width="8" height="8" fill="#ffb429"/><rect x="1517" width="8" height="8" fill="#ffab24"/><rect x="1524" width="8" height="8" fill="#ffa220"/><rect x="1531" width="8" height="8" fill="#ff991c"/><rect x="1538" width="8" height="8" fill="#ff9218"/><rect x="1545" width="8" height="8" fill="#ff8a15"/><rect x="1552" width="8" height="8" fill="#ff8311"/><rect x="1559" width="8" height="8" fill="#ff7d0e"/><rect x="1566" width="8" height="8" fill="#ff770b"/><rect x="1573" width="8" height="8" fill="#ff7109"/><rect x="1580" width="8" height="8" fill="#ff6c06"/><rect x="1587" width="8" height="8" fill="#ff6704"/><rect x="1594" width="8" height="8" fill="#ff6202"/><rect x="1601" width="8" height="8" fill="#ff5e00"/><rect x="1608" width="8" height="8" fill="#ff5900"/><rect x="1615" width="8" height="8" fill="#ff5500"/><rect x="1622" width="8" height="8" fill="#ff5100"/></g><g transform="translate(0,390)"><rect x="1160" width="8" height="8" fill="#00ffa4"/><rect x="1167" width="8" height="8" fill="#00ffa3"/><rect x="1174" width="8" height="8" fill="#00ffa1"/><rect x="1181" width="8" height="8" fill="#00ffa0"/><rect x="1188" width="8" height="8" fill="#00ff9f"/><rect x="1195" width="8" height="8" fill="#00ff9e"/><rect x="1202" width="8" height="8" fill="#00ff9d"/><rect x="1209" width="8" height="8" fill="#00ff9c"/><rect x="1216" width="8" height="8" fill="#00ff9b"/><rect x="1223" width="8" height="8" fill="#00ff99"/><rect x="1230" width="8" height="8" fill="#00ff98"/><rect x="1237" width="8" height="8" fill="#00ff97"/><rect x="1244" width="8" height="8" fill="#00ff96"/><rect x="1251" width="8" height="8" fill="#00ff94"/><rect x="1258" width="8" height="8" fill="#00ff93"/><rect x="1265" width="8" height="8" fill="#00ff92"/><rect x="1272" width="8" height="8" fill="#00ff90"/><rect x="1279" width="8" height="8" fill="#00ff8f"/><rect x="1286" width="8" height="8" fill="#00ff8d"/><rect x="1293" width="8" height="8" fill="#00ff8c"/><rect x="1300" width="8" height="8" fill="#00ff8a"/><rect x="1307" width="8" height="8" fill="#00ff89"/><rect x="1314" width="8" height="8" fill="#00ff87"/><rect x="1321" width="8" height="8" fill="#00ff85"/><rect x="1328" width="8" height="8" fill="#00ff84"/><rect x="1335" width="8" height="8" fill="#05ff82"/><rect x="1342" width="8" height="8" fill="#10ff80"/><rect x="1349" width="8" height="8" fill="#1bff7e"/><rect x="1356" width="8" height="8" fill="#26ff7c"/><rect x="1363" width="8" height="8" fill="#31ff7b"/><rect x="1370" width="8" height="8" fill="#3dff79"/><rect x="1377" width="8" height="8" fill="#49ff77"/><rect x="1384" width="8" height="8" fill="#55ff75"/><rect x="1391" width="8" height="8" fill="#62ff72"/><rect x="1398" width="8" height="8" fill="#6fff70"/><rect x="1405" width="8" height="8" fill="#7cff6e"/><rect x="1412" width="8" height="8" fill="#8aff6c"/><rect x="1419" width="8" height="8" fill="#98ff69"/><rect x="1426" width="8" height="8" fill="#a7ff67"/><rect x="1433" width="8" height="8" fill="#b6ff64"/><rect x="1440" width="8" height="8" fill="#c5ff62"/><rect x="1447" width="8" height="8" fill="#d5ff5f"/><rect x="1454" width="8" height="8" fill="#e5ff5c"/><rect x="1461" width="8" height="8" fill="#f6ff5a"/><rect x="1468" width="8" height="8" fill="#fff754"/><rect x="1475" width="8" height="8" fill="#ffe74c"/><rect x="1482" width="8" height="8" fill="#ffd945"/><rect x="1489" width="8" height="8" fill="#ffcc3e"/><rect x="1496" width="8" height="8" fill="#ffc038"/><rect x="1503" width="8" height="8" fill="#ffb532"/><rect x="1510" width="8" height="8" fill="#ffab2d"/><rect x="1517" width="8" height="8" fill="#ffa228"/><rect x="1524" width="8" height="8" fill="#ff9924"/><rect x="1531" width="8" height="8" fill="#ff9120"/><rect x="1538" width="8" height="8" fill="#ff8a1c"/><rect x="1545" width="8" height="8" fill="#ff8318"/><rect x="1552" width="8" height="8" fill="#ff7c15"/><rect x="1559" width="8" height="8" fill="#ff7612"/><rect x="1566" width="8" height="8" fill="#ff700f"/><rect x="1573" width="8" height="8" fill="#ff6b0c"/><rect x="1580" width="8" height="8" fill="#ff660a"/><rect x="1587" width="8" height="8" fill="#ff6107"/><rect x="1594" width="8" height="8" fill="#ff5c05"/><rect x="1601" width="8" height="8" fill="#ff5802"/><rect x="1608" width="8" height="8" fill="#ff5400"/><rect x="1615" width="8" height="8" fill="#ff5000"/><rect x="1622" width="8" height="8" fill="#ff4c00"/><rect x="1629" width="8" height="8" fill="#ff4800"/></g><g transform="translate(0,397)"><rect x="1160" width="8" height="8" fill="#00ffac"/><rect x="1167" width="8" height="8" fill="#00ffab"/><rect x="1174" width="8" height="8" fill="#00ffaa"/><rect x="1181" width="8" height="8" fill="#00ffa9"/><rect x="1188" width="8" height="8" fill="#00ffa7"/><rect x="1195" width="8" height="8" fill="#00ffa6"/><rect x="1202" width="8" height="8" fill="#00ffa5"/><rect x="1209" width="8" height="8" fill="#00ffa4"/><rect x="1216" width="8" height="8" fill="#00ffa3"/><rect x="1223" width="8" height="8" fill="#00ffa2"/><rect x="1230" width="8" height="8" fill="#00ffa1"/><rect x="1237" width="8" height="8" fill="#00ff9f"/><rect x="1244" width="8" height="8" fill="#00ff9e"/><rect x="1251" width="8" height="8" fill="#00ff9d"/><rect x="1258" width="8" height="8" fill="#00ff9c"/><rect x="1265" width="8" height="8" fill="#00ff9a"/><rect x="1272" width="8" height="8" fill="#00ff99"/><rect x="1279" width="8" height="8" fill="#00ff98"/><rect x="1286" width="8" height="8" fill="#00ff96"/><rect x="1293" width="8" height="8" fill="#00ff95"/><rect x="1300" width="8" height="8" fill="#00ff93"/><rect x="1307" width="8" height="8" fill="#00ff92"/><rect x="1314" width="8" height="8" fill="#00ff90"/><rect x="1321" width="8" height="8" fill="#00ff8f"/><rect x="1328" width="8" height="8" fill="#00ff8d"/><rect x="1335" width="8" height="8" fill="#08ff8b"/><rect x="1342" width="8" height="8" fill="#13ff8a"/><rect x="1349" width="8" height="8" fill="#1eff88"/><rect x="1356" width="8" height="8" fill="#2aff86"/><rect x="1363" width="8" height="8" fill="#36ff84"/><rect x="1370" width="8" height="8" fill="#42ff82"/><rect x="1377" width="8" height="8" fill="#4eff80"/><rect x="1384" width="8" height="8" fill="#5bff7e"/><rect x="1391" width="8" height="8" fill="#69ff7c"/><rect x="1398" width="8" height="8" fill="#76ff7a"/><rect x="1405" width="8" height="8" fill="#84ff78"/><rect x="1412" width="8" height="8" fill="#93ff76"/><rect x="1419" width="8" height="8" fill="#a1ff73"/><rect x="1426" width="8" height="8" fill="#b1ff71"/><rect x="1433" width="8" height="8" fill="#c0ff6f"/><rect x="1440" width="8" height="8" fill="#d1ff6c"/><rect x="1447" width="8" height="8" fill="#e1ff69"/><rect x="1454" width="8" height="8" fill="#f2ff67"/><rect x="1461" width="8" height="8" fill="#fffa62"/><rect x="1468" width="8" height="8" fill="#ffe959"/><rect x="1475" width="8" height="8" fill="#ffdb51"/><rect x="1482" width="8" height="8" fill="#ffcd49"/><rect x="1489" width="8" height="8" fill="#ffc142"/><rect x="1496" width="8" height="8" fill="#ffb53c"/><rect x="1503" width="8" height="8" fill="#ffab37"/><rect x="1510" width="8" height="8" fill="#ffa131"/><rect x="1517" width="8" height="8" fill="#ff992c"/><rect x="1524" width="8" height="8" fill="#ff9028"/><rect x="1531" width="8" height="8" fill="#ff8924"/><rect x="1538" width="8" height="8" fill="#ff8220"/><rect x="1545" width="8" height="8" fill="#ff7b1c"/><rect x="1552" width="8" height="8" fill="#ff7519"/><rect x="1559" width="8" height="8" fill="#ff6f15"/><rect x="1566" width="8" height="8" fill="#ff6912"/><rect x="1573" width="8" height="8" fill="#ff6410"/><rect x="1580" width="8" height="8" fill="#ff5f0d"/><rect x="1587" width="8" height="8" fill="#ff5b0a"/><rect x="1594" width="8" height="8" fill="#ff5608"/><rect x="1601" width="8" height="8" fill="#ff5206"/><rect x="1608" width="8" height="8" fill="#ff4e03"/><rect x="1615" width="8" height="8" fill="#ff4a01"/><rect x="1622" width="8" height="8" fill="#ff4700"/><rect x="1629" width="8" height="8" fill="#ff4300"/><rect x="1636" width="8" height="8" fill="#ff4000"/><rect x="1643" width="8" height="8" fill="#ff3d00"/></g><g transform="translate(0,404)"><rect x="1160" width="8" height="8" fill="#00ffb4"/><rect x="1167" width="8" height="8" fill="#00ffb3"/><rect x="1174" width="8" height="8" fill="#00ffb2"/><rect x="1181" width="8" height="8" fill="#00ffb1"/><rect x="1188" width="8" height="8" fill="#00ffb0"/><rect x="1195" width="8" height="8" fill="#00ffaf"/><rect x="1202" width="8" height="8" fill="#00ffae"/><rect x="1209" width="8" height="8" fill="#00ffad"/><rect x="1216" width="8" height="8" fill="#00ffac"/><rect x="1223" width="8" height="8" fill="#00ffab"/><rect x="1230" width="8" height="8" fill="#00ffaa"/><rect x="1237" width="8" height="8" fill="#00ffa9"/><rect x="1244" width="8" height="8" fill="#00ffa7"/><rect x="1251" width="8" height="8" fill="#00ffa6"/><rect x="1258" width="8" height="8" fill="#00ffa5"/><rect x="1265" width="8" height="8" fill="#00ffa4"/><rect x="1272" width="8" height="8" fill="#00ffa2"/><rect x="1279" width="8" height="8" fill="#00ffa1"/><rect x="1286" width="8" height="8" fill="#00ffa0"/><rect x="1293" width="8" height="8" fill="#00ff9e"/><rect x="1300" width="8" height="8" fill="#00ff9d"/><rect x="1307" width="8" height="8" fill="#00ff9b"/><rect x="1314" width="8" height="8" fill="#00ff9a"/><rect x="1321" width="8" height="8" fill="#00ff98"/><rect x="1328" width="8" height="8" fill="#00ff97"/><rect x="1335" width="8" height="8" fill="#0bff95"/><rect x="1342" width="8" height="8" fill="#16ff94"/><rect x="1349" width="8" height="8" fill="#22ff92"/><rect x="1356" width="8" height="8" fill="#2eff90"/><rect x="1363" width="8" height="8" fill="#3bff8e"/><rect x="1370" width="8" height="8" fill="#47ff8d"/><rect x="1377" width="8" height="8" fill="#54ff8b"/><rect x="1384" width="8" height="8" fill="#62ff89"/><rect x="1391" width="8" height="8" fill="#70ff87"/><rect x="1398" width="8" height="8" fill="#7eff85"/><rect x="1405" width="8" height="8" fill="#8cff83"/><rect x="1412" width="8" height="8" fill="#9cff81"/><rect x="1419" width="8" height="8" fill="#abff7e"/><rect x="1426" width="8" height="8" fill="#bbff7c"/><rect x="1433" width="8" height="8" fill="#ccff7a"/><rect x="1440" width="8" height="8" fill="#ddff77"/><rect x="1447" width="8" height="8" fill="#eeff75"/><rect x="1454" width="8" height="8" fill="#fffd71"/><rect x="1461" width="8" height="8" fill="#ffec67"/><rect x="1468" width="8" height="8" fill="#ffdd5e"/><rect x="1475" width="8" height="8" fill="#ffce56"/><rect x="1482" width="8" height="8" fill="#ffc24e"/><rect x="1489" width="8" height="8" fill="#ffb647"/><rect x="1496" width="8" height="8" fill="#ffab41"/><rect x="1503" width="8" height="8" fill="#ffa13b"/><rect x="1510" width="8" height="8" fill="#ff9835"/><rect x="1517" width="8" height="8" fill="#ff9030"/><rect x="1524" width="8" height="8" fill="#ff882c"/><rect x="1531" width="8" height="8" fill="#ff8128"/><rect x="1538" width="8" height="8" fill="#ff7a23"/><rect x="1545" width="8" height="8" fill="#ff7420"/><rect x="1552" width="8" height="8" fill="#ff6e1c"/><rect x="1559" width="8" height="8" fill="#ff6819"/><rect x="1566" width="8" height="8" fill="#ff6316"/><rect x="1573" width="8" height="8" fill="#ff5e13"/><rect x="1580" width="8" height="8" fill="#ff5910"/><rect x="1587" width="8" height="8" fill="#ff550d"/><rect x="1594" width="8" height="8" fill="#ff500b"/><rect x="1601" width="8" height="8" fill="#ff4c09"/><rect x="1608" width="8" height="8" fill="#ff4906"/><rect x="1615" width="8" height="8" fill="#ff4504"/><rect x="1622" width="8" height="8" fill="#ff4202"/><rect x="1629" width="8" height="8" fill="#ff3e00"/><rect x="1636" width="8" height="8" fill="#ff3b00"/><rect x="1643" width="8" height="8" fill="#ff3800"/><rect x="1650" width="8" height="8" fill="#ff3500"/></g><g transform="translate(0,411)"><rect x="1167" width="8" height="8" fill="#00ffbc"/><rect x="1174" width="8" height="8" fill="#00ffbb"/><rect x="1181" width="8" height="8" fill="#00ffba"/><rect x="1188" width="8" height="8" fill="#00ffb9"/><rect x="1195" width="8" height="8" fill="#00ffb8"/><rect x="1202" width="8" height="8" fill="#00ffb7"/><rect x="1209" width="8" height="8" fill="#00ffb6"/><rect x="1216" width="8" height="8" fill="#00ffb5"/><rect x="1223" width="8" height="8" fill="#00ffb4"/><rect x="1230" width="8" height="8" fill="#00ffb3"/><rect x="1237" width="8" height="8" fill="#00ffb2"/><rect x="1244" width="8" height="8" fill="#00ffb1"/><rect x="1251" width="8" height="8" fill="#00ffb0"/><rect x="1258" width="8" height="8" fill="#00ffaf"/><rect x="1265" width="8" height="8" fill="#00ffae"/><rect x="1272" width="8" height="8" fill="#00ffac"/><rect x="1279" width="8" height="8" fill="#00ffab"/><rect x="1286" width="8" height="8" fill="#00ffaa"/><rect x="1293" width="8" height="8" fill="#00ffa9"/><rect x="1300" width="8" height="8" fill="#00ffa7"/><rect x="1307" width="8" height="8" fill="#00ffa6"/><rect x="1314" width="8" height="8" fill="#00ffa5"/><rect x="1321" width="8" height="8" fill="#00ffa3"/><rect x="1328" width="8" height="8" fill="#03ffa2"/><rect x="1335" width="8" height="8" fill="#0effa0"/><rect x="1342" width="8" height="8" fill="#1aff9f"/><rect x="1349" width="8" height="8" fill="#26ff9d"/><rect x="1356" width="8" height="8" fill="#33ff9b"/><rect x="1363" width="8" height="8" fill="#40ff9a"/><rect x="1370" width="8" height="8" fill="#4dff98"/><rect x="1377" width="8" height="8" fill="#5bff96"/><rect x="1384" width="8" height="8" fill="#69ff94"/><rect x="1391" width="8" height="8" fill="#77ff92"/><rect x="1398" width="8" height="8" fill="#86ff90"/><rect x="1405" width="8" height="8" fill="#95ff8e"/><rect x="1412" width="8" height="8" fill="#a5ff8c"/><rect x="1419" width="8" height="8" fill="#b6ff8a"/><rect x="1426" width="8" height="8" fill="#c7ff88"/><rect x="1433" width="8" height="8" fill="#d8ff86"/><rect x="1440" width="8" height="8" fill="#eaff83"/><rect x="1447" width="8" height="8" fill="#fdff81"/><rect x="1454" width="8" height="8" fill="#ffef76"/><rect x="1461" width="8" height="8" fill="#ffdf6c"/><rect x="1468" width="8" height="8" fill="#ffd063"/><rect x="1475" width="8" height="8" fill="#ffc35a"/><rect x="1482" width="8" height="8" fill="#ffb652"/><rect x="1489" width="8" height="8" fill="#ffab4b"/><rect x="1496" width="8" height="8" fill="#ffa145"/><rect x="1503" width="8" height="8" fill="#ff983f"/><rect x="1510" width="8" height="8" fill="#ff8f3a"/><rect x="1517" width="8" height="8" fill="#ff8734"/><rect x="1524" width="8" height="8" fill="#ff8030"/><rect x="1531" width="8" height="8" fill="#ff792b"/><rect x="1538" width="8" height="8" fill="#ff7227"/><rect x="1545" width="8" height="8" fill="#ff6c23"/><rect x="1552" width="8" height="8" fill="#ff6720"/><rect x="1559" width="8" height="8" fill="#ff611c"/><rect x="1566" width="8" height="8" fill="#ff5c19"/><rect x="1573" width="8" height="8" fill="#ff5716"/><rect x="1580" width="8" height="8" fill="#ff5313"/><rect x="1587" width="8" height="8" fill="#ff4f11"/><rect x="1594" width="8" height="8" fill="#ff4b0e"/><rect x="1601" width="8" height="8" fill="#ff470c"/><rect x="1608" width="8" height="8" fill="#ff4309"/><rect x="1615" width="8" height="8" fill="#ff4007"/><rect x="1622" width="8" height="8" fill="#ff3c05"/><rect x="1629" width="8" height="8" fill="#ff3903"/><rect x="1636" width="8" height="8" fill="#ff3601"/><rect x="1643" width="8" height="8" fill="#ff3300"/><rect x="1650" width="8" height="8" fill="#ff3100"/><rect x="1657" width="8" height="8" fill="#ff2e00"/></g><g transform="translate(0,418)"><rect x="1167" width="8" height="8" fill="#00ffc5"/><rect x="1174" width="8" height="8" fill="#00ffc5"/><rect x="1181" width="8" height="8" fill="#00ffc4"/><rect x="1188" width="8" height="8" fill="#00ffc3"/><rect x="1195" width="8" height="8" fill="#00ffc2"/><rect x="1202" width="8" height="8" fill="#00ffc1"/><rect x="1209" width="8" height="8" fill="#00ffc0"/><rect x="1216" width="8" height="8" fill="#00ffbf"/><rect x="1223" width="8" height="8" fill="#00ffbe"/><rect x="1230" width="8" height="8" fill="#00ffbd"/><rect x="1237" width="8" height="8" fill="#00ffbc"/><rect x="1244" width="8" height="8" fill="#00ffbb"/><rect x="1251" width="8" height="8" fill="#00ffba"/><rect x="1258" width="8" height="8" fill="#00ffb9"/><rect x="1265" width="8" height="8" fill="#00ffb8"/><rect x="1272" width="8" height="8" fill="#00ffb7"/><rect x="1279" width="8" height="8" fill="#00ffb6"/><rect x="1286" width="8" height="8" fill="#00ffb5"/><rect x="1293" width="8" height="8" fill="#00ffb4"/><rect x="1300" width="8" height="8" fill="#00ffb2"/><rect x="1307" width="8" height="8" fill="#00ffb1"/><rect x="1314" width="8" height="8" fill="#00ffb0"/><rect x="1321" width="8" height="8" fill="#00ffae"/><rect x="1328" width="8" height="8" fill="#05ffad"/><rect x="1335" width="8" height="8" fill="#11ffac"/><rect x="1342" width="8" height="8" fill="#1effaa"/><rect x="1349" width="8" height="8" fill="#2bffa9"/><rect x="1356" width="8" height="8" fill="#38ffa7"/><rect x="1363" width="8" height="8" fill="#45ffa6"/><rect x="1370" width="8" height="8" fill="#53ffa4"/><rect x="1377" width="8" height="8" fill="#61ffa2"/><rect x="1384" width="8" height="8" fill="#70ffa1"/><rect x="1391" width="8" height="8" fill="#7fff9f"/><rect x="1398" width="8" height="8" fill="#8fff9d"/><rect x="1405" width="8" height="8" fill="#9fff9b"/><rect x="1412" width="8" height="8" fill="#b0ff99"/><rect x="1419" width="8" height="8" fill="#c1ff97"/><rect x="1426" width="8" height="8" fill="#d3ff95"/><rect x="1433" width="8" height="8" fill="#e6ff93"/><rect x="1440" width="8" height="8" fill="#f9ff90"/><rect x="1447" width="8" height="8" fill="#fff287"/><rect x="1454" width="8" height="8" fill="#ffe17b"/><rect x="1461" width="8" height="8" fill="#ffd271"/><rect x="1468" width="8" height="8" fill="#ffc467"/><rect x="1475" width="8" height="8" fill="#ffb75f"/><rect x="1482" width="8" height="8" fill="#ffac57"/><rect x="1489" width="8" height="8" fill="#ffa150"/><rect x="1496" width="8" height="8" fill="#ff9749"/><rect x="1503" width="8" height="8" fill="#ff8e43"/><rect x="1510" width="8" height="8" fill="#ff863e"/><rect x="1517" width="8" height="8" fill="#ff7f38"/><rect x="1524" width="8" height="8" fill="#ff7833"/><rect x="1531" width="8" height="8" fill="#ff712f"/><rect x="1538" width="8" height="8" fill="#ff6b2b"/><rect x="1545" width="8" height="8" fill="#ff6527"/><rect x="1552" width="8" height="8" fill="#ff6023"/><rect x="1559" width="8" height="8" fill="#ff5a20"/><rect x="1566" width="8" height="8" fill="#ff561c"/><rect x="1573" width="8" height="8" fill="#ff5119"/><rect x="1580" width="8" height="8" fill="#ff4d16"/><rect x="1587" width="8" height="8" fill="#ff4914"/><rect x="1594" width="8" height="8" fill="#ff4511"/><rect x="1601" width="8" height="8" fill="#ff410f"/><rect x="1608" width="8" height="8" fill="#ff3e0c"/><rect x="1615" width="8" height="8" fill="#ff3b0a"/><rect x="1622" width="8" height="8" fill="#ff3708"/><rect x="1629" width="8" height="8" fill="#ff3406"/><rect x="1636" width="8" height="8" fill="#ff3104"/><rect x="1643" width="8" height="8" fill="#ff2f02"/><rect x="1650" width="8" height="8" fill="#ff2c00"/><rect x="1657" width="8" height="8" fill="#ff2a00"/><rect x="1664" width="8" height="8" fill="#ff2700"/><rect x="1671" width="8" height="8" fill="#ff2500"/></g><g transform="translate(0,425)"><rect x="1167" width="8" height="8" fill="#00ffcf"/><rect x="1174" width="8" height="8" fill="#00ffcf"/><rect x="1181" width="8" height="8" fill="#00ffce"/><rect x="1188" width="8" height="8" fill="#00ffcd"/><rect x="1195" width="8" height="8" fill="#00ffcc"/><rect x="1202" width="8" height="8" fill="#00ffcc"/><rect x="1209" width="8" height="8" fill="#00ffcb"/><rect x="1216" width="8" height="8" fill="#00ffca"/><rect x="1223" width="8" height="8" fill="#00ffc9"/><rect x="1230" width="8" height="8" fill="#00ffc8"/><rect x="1237" width="8" height="8" fill="#00ffc7"/><rect x="1244" width="8" height="8" fill="#00ffc6"/><rect x="1251" width="8" height="8" fill="#00ffc5"/><rect x="1258" width="8" height="8" fill="#00ffc5"/><rect x="1265" width="8" height="8" fill="#00ffc4"/><rect x="1272" width="8" height="8" fill="#00ffc3"/><rect x="1279" width="8" height="8" fill="#00ffc1"/><rect x="1286" width="8" height="8" fill="#00ffc0"/><rect x="1293" width="8" height="8" fill="#00ffbf"/><rect x="1300" width="8" height="8" fill="#00ffbe"/><rect x="1307" width="8" height="8" fill="#00ffbd"/><rect x="1314" width="8" height="8" fill="#00ffbc"/><rect x="1321" width="8" height="8" fill="#00ffbb"/><rect x="1328" width="8" height="8" fill="#09ffb9"/><rect x="1335" width="8" height="8" fill="#15ffb8"/><rect x="1342" width="8" height="8" fill="#22ffb7"/><rect x="1349" width="8" height="8" fill="#2fffb5"/><rect x="1356" width="8" height="8" fill="#3dffb4"/><rect x="1363" width="8" height="8" fill="#4bffb3"/><rect x="1370" width="8" height="8" fill="#5affb1"/><rect x="1377" width="8" height="8" fill="#69ffaf"/><rect x="1384" width="8" height="8" fill="#78ffae"/><rect x="1391" width="8" height="8" fill="#88ffac"/><rect x="1398" width="8" height="8" fill="#99ffab"/><rect x="1405" width="8" height="8" fill="#aaffa9"/><rect x="1412" width="8" height="8" fill="#bcffa7"/><rect x="1419" width="8" height="8" fill="#ceffa5"/><rect x="1426" width="8" height="8" fill="#e1ffa3"/><rect x="1433" width="8" height="8" fill="#f4ffa1"/><rect x="1440" width="8" height="8" fill="#fff699"/><rect x="1447" width="8" height="8" fill="#ffe48c"/><rect x="1454" width="8" height="8" fill="#ffd380"/><rect x="1461" width="8" height="8" fill="#ffc576"/><rect x="1468" width="8" height="8" fill="#ffb86c"/><rect x="1475" width="8" height="8" fill="#ffac63"/><rect x="1482" width="8" height="8" fill="#ffa15b"/><rect x="1489" width="8" height="8" fill="#ff9754"/><rect x="1496" width="8" height="8" fill="#ff8e4d"/><rect x="1503" width="8" height="8" fill="#ff8547"/><rect x="1510" width="8" height="8" fill="#ff7e41"/><rect x="1517" width="8" height="8" fill="#ff763c"/><rect x="1524" width="8" height="8" fill="#ff7037"/><rect x="1531" width="8" height="8" fill="#ff6933"/><rect x="1538" width="8" height="8" fill="#ff632e"/><rect x="1545" width="8" height="8" fill="#ff5e2a"/><rect x="1552" width="8" height="8" fill="#ff5927"/><rect x="1559" width="8" height="8" fill="#ff5423"/><rect x="1566" width="8" height="8" fill="#ff4f20"/><rect x="1573" width="8" height="8" fill="#ff4b1c"/><rect x="1580" width="8" height="8" fill="#ff471a"/><rect x="1587" width="8" height="8" fill="#ff4317"/><rect x="1594" width="8" height="8" fill="#ff3f14"/><rect x="1601" width="8" height="8" fill="#ff3c11"/><rect x="1608" width="8" height="8" fill="#ff390f"/><rect x="1615" width="8" height="8" fill="#ff350d"/><rect x="1622" width="8" height="8" fill="#ff320b"/><rect x="1629" width="8" height="8" fill="#ff2f08"/><rect x="1636" width="8" height="8" fill="#ff2d06"/><rect x="1643" width="8" height="8" fill="#ff2a05"/><rect x="1650" width="8" height="8" fill="#ff2803"/><rect x="1657" width="8" height="8" fill="#ff2501"/><rect x="1664" width="8" height="8" fill="#ff2300"/><rect x="1671" width="8" height="8" fill="#ff2100"/><rect x="1678" width="8" height="8" fill="#ff1f00"/></g><g transform="translate(0,432)"><rect x="1167" width="8" height="8" fill="#00ffda"/><rect x="1174" width="8" height="8" fill="#00ffd9"/><rect x="1181" width="8" height="8" fill="#00ffd9"/><rect x="1188" width="8" height="8" fill="#00ffd8"/><rect x="1195" width="8" height="8" fill="#00ffd7"/><rect x="1202" width="8" height="8" fill="#00ffd7"/><rect x="1209" width="8" height="8" fill="#00ffd6"/><rect x="1216" width="8" height="8" fill="#00ffd5"/><rect x="1223" width="8" height="8" fill="#00ffd5"/><rect x="1230" width="8" height="8" fill="#00ffd4"/><rect x="1237" width="8" height="8" fill="#00ffd3"/><rect x="1244" width="8" height="8" fill="#00ffd2"/><rect x="1251" width="8" height="8" fill="#00ffd1"/><rect x="1258" width="8" height="8" fill="#00ffd0"/><rect x="1265" width="8" height="8" fill="#00ffd0"/><rect x="1272" width="8" height="8" fill="#00ffcf"/><rect x="1279" width="8" height="8" fill="#00ffce"/><rect x="1286" width="8" height="8" fill="#00ffcd"/><rect x="1293" width="8" height="8" fill="#00ffcc"/><rect x="1300" width="8" height="8" fill="#00ffcb"/><rect x="1307" width="8" height="8" fill="#00ffca"/><rect x="1314" width="8" height="8" fill="#00ffc9"/><rect x="1321" width="8" height="8" fill="#00ffc8"/><rect x="1328" width="8" height="8" fill="#0cffc7"/><rect x="1335" width="8" height="8" fill="#19ffc6"/><rect x="1342" width="8" height="8" fill="#27ffc4"/><rect x="1349" width="8" height="8" fill="#35ffc3"/><rect x="1356" width="8" height="8" fill="#43ffc2"/><rect x="1363" width="8" height="8" fill="#52ffc1"/><rect x="1370" width="8" height="8" fill="#61ffbf"/><rect x="1377" width="8" height="8" fill="#71ffbe"/><rect x="1384" width="8" height="8" fill="#81ffbc"/><rect x="1391" width="8" height="8" fill="#92ffbb"/><rect x="1398" width="8" height="8" fill="#a3ffb9"/><rect x="1405" width="8" height="8" fill="#b6ffb8"/><rect x="1412" width="8" height="8" fill="#c8ffb6"/><rect x="1419" width="8" height="8" fill="#dcffb5"/><rect x="1426" width="8" height="8" fill="#f0ffb3"/><rect x="1433" width="8" height="8" fill="#fff9ad"/><rect x="1440" width="8" height="8" fill="#ffe69e"/><rect x="1447" width="8" height="8" fill="#ffd591"/><rect x="1454" width="8" height="8" fill="#ffc685"/><rect x="1461" width="8" height="8" fill="#ffb87a"/><rect x="1468" width="8" height="8" fill="#ffac70"/><rect x="1475" width="8" height="8" fill="#ffa168"/><rect x="1482" width="8" height="8" fill="#ff9660"/><rect x="1489" width="8" height="8" fill="#ff8d58"/><rect x="1496" width="8" height="8" fill="#ff8451"/><rect x="1503" width="8" height="8" fill="#ff7c4b"/><rect x="1510" width="8" height="8" fill="#ff7545"/><rect x="1517" width="8" height="8" fill="#ff6e40"/><rect x="1524" width="8" height="8" fill="#ff683b"/><rect x="1531" width="8" height="8" fill="#ff6236"/><rect x="1538" width="8" height="8" fill="#ff5c32"/><rect x="1545" width="8" height="8" fill="#ff572e"/><rect x="1552" width="8" height="8" fill="#ff522a"/><rect x="1559" width="8" height="8" fill="#ff4d26"/><rect x="1566" width="8" height="8" fill="#ff4923"/><rect x="1573" width="8" height="8" fill="#ff4520"/><rect x="1580" width="8" height="8" fill="#ff411d"/><rect x="1587" width="8" height="8" fill="#ff3d1a"/><rect x="1594" width="8" height="8" fill="#ff3a17"/><rect x="1601" width="8" height="8" fill="#ff3614"/><rect x="1608" width="8" height="8" fill="#ff3312"/><rect x="1615" width="8" height="8" fill="#ff3010"/><rect x="1622" width="8" height="8" fill="#ff2d0d"/><rect x="1629" width="8" height="8" fill="#ff2b0b"/><rect x="1636" width="8" height="8" fill="#ff2809"/><rect x="1643" width="8" height="8" fill="#ff2607"/><rect x="1650" width="8" height="8" fill="#ff2305"/><rect x="1657" width="8" height="8" fill="#ff2103"/><rect x="1664" width="8" height="8" fill="#ff1f02"/><rect x="1671" width="8" height="8" fill="#ff1c00"/><rect x="1678" width="8" height="8" fill="#ff1a00"/><rect x="1685" width="8" height="8" fill="#ff1800"/></g><g transform="translate(0,439)"><rect x="1167" width="8" height="8" fill="#00ffe5"/><rect x="1174" width="8" height="8" fill="#00ffe5"/><rect x="1181" width="8" height="8" fill="#00ffe4"/><rect x="1188" width="8" height="8" fill="#00ffe4"/><rect x="1195" width="8" height="8" fill="#00ffe3"/><rect x="1202" width="8" height="8" fill="#00ffe2"/><rect x="1209" width="8" height="8" fill="#00ffe2"/><rect x="1216" width="8" height="8" fill="#00ffe1"/><rect x="1223" width="8" height="8" fill="#00ffe1"/><rect x="1230" width="8" height="8" fill="#00ffe0"/><rect x="1237" width="8" height="8" fill="#00ffdf"/><rect x="1244" width="8" height="8" fill="#00ffdf"/><rect x="1251" width="8" height="8" fill="#00ffde"/><rect x="1258" width="8" height="8" fill="#00ffdd"/><rect x="1265" width="8" height="8" fill="#00ffdd"/><rect x="1272" width="8" height="8" fill="#00ffdc"/><rect x="1279" width="8" height="8" fill="#00ffdb"/><rect x="1286" width="8" height="8" fill="#00ffda"/><rect x="1293" width="8" height="8" fill="#00ffd9"/><rect x="1300" width="8" height="8" fill="#00ffd9"/><rect x="1307" width="8" height="8" fill="#00ffd8"/><rect x="1314" width="8" height="8" fill="#00ffd7"/><rect x="1321" width="8" height="8" fill="#02ffd6"/><rect x="1328" width="8" height="8" fill="#10ffd5"/><rect x="1335" width="8" height="8" fill="#1dffd4"/><rect x="1342" width="8" height="8" fill="#2cffd3"/><rect x="1349" width="8" height="8" fill="#3affd2"/><rect x="1356" width="8" height="8" fill="#49ffd1"/><rect x="1363" width="8" height="8" fill="#59ffd0"/><rect x="1370" width="8" height="8" fill="#69ffcf"/><rect x="1377" width="8" height="8" fill="#7affce"/><rect x="1384" width="8" height="8" fill="#8bffcc"/><rect x="1391" width="8" height="8" fill="#9dffcb"/><rect x="1398" width="8" height="8" fill="#afffca"/><rect x="1405" width="8" height="8" fill="#c2ffc8"/><rect x="1412" width="8" height="8" fill="#d6ffc7"/><rect x="1419" width="8" height="8" fill="#ebffc6"/><rect x="1426" width="8" height="8" fill="#fffec3"/><rect x="1433" width="8" height="8" fill="#ffe9b2"/><rect x="1440" width="8" height="8" fill="#ffd7a3"/><rect x="1447" width="8" height="8" fill="#ffc795"/><rect x="1454" width="8" height="8" fill="#ffb989"/><rect x="1461" width="8" height="8" fill="#ffac7f"/><rect x="1468" width="8" height="8" fill="#ffa075"/><rect x="1475" width="8" height="8" fill="#ff966c"/><rect x="1482" width="8" height="8" fill="#ff8c64"/><rect x="1489" width="8" height="8" fill="#ff835c"/><rect x="1496" width="8" height="8" fill="#ff7b55"/><rect x="1503" width="8" height="8" fill="#ff734f"/><rect x="1510" width="8" height="8" fill="#ff6c49"/><rect x="1517" width="8" height="8" fill="#ff6644"/><rect x="1524" width="8" height="8" fill="#ff603f"/><rect x="1531" width="8" height="8" fill="#ff5a3a"/><rect x="1538" width="8" height="8" fill="#ff5535"/><rect x="1545" width="8" height="8" fill="#ff5031"/><rect x="1552" width="8" height="8" fill="#ff4b2d"/><rect x="1559" width="8" height="8" fill="#ff472a"/><rect x="1566" width="8" height="8" fill="#ff4326"/><rect x="1573" width="8" height="8" fill="#ff3f23"/><rect x="1580" width="8" height="8" fill="#ff3b20"/><rect x="1587" width="8" height="8" fill="#ff381d"/><rect x="1594" width="8" height="8" fill="#ff341a"/><rect x="1601" width="8" height="8" fill="#ff3117"/><rect x="1608" width="8" height="8" fill="#ff2e15"/><rect x="1615" width="8" height="8" fill="#ff2b12"/><rect x="1622" width="8" height="8" fill="#ff2810"/><rect x="1629" width="8" height="8" fill="#ff260e"/><rect x="1636" width="8" height="8" fill="#ff230c"/><rect x="1643" width="8" height="8" fill="#ff210a"/><rect x="1650" width="8" height="8" fill="#ff1f08"/><rect x="1657" width="8" height="8" fill="#ff1c06"/><rect x="1664" width="8" height="8" fill="#ff1a04"/><rect x="1671" width="8" height="8" fill="#ff1802"/><rect x="1678" width="8" height="8" fill="#ff1601"/><rect x="1685" width="8" height="8" fill="#ff1500"/><rect x="1692" width="8" height="8" fill="#ff1300"/><rect x="1699" width="8" height="8" fill="#ff1100"/></g><g transform="translate(0,446)"><rect x="1174" width="8" height="8" fill="#00fff1"/><rect x="1181" width="8" height="8" fill="#00fff0"/><rect x="1188" width="8" height="8" fill="#00fff0"/><rect x="1195" width="8" height="8" fill="#00fff0"/><rect x="1202" width="8" height="8" fill="#00ffef"/><rect x="1209" width="8" height="8" fill="#00ffef"/><rect x="1216" width="8" height="8" fill="#00ffee"/><rect x="1223" width="8" height="8" fill="#00ffee"/><rect x="1230" width="8" height="8" fill="#00ffed"/><rect x="1237" width="8" height="8" fill="#00ffed"/><rect x="1244" width="8" height="8" fill="#00ffec"/><rect x="1251" width="8" height="8" fill="#00ffec"/><rect x="1258" width="8" height="8" fill="#00ffeb"/><rect x="1265" width="8" height="8" fill="#00ffeb"/><rect x="1272" width="8" height="8" fill="#00ffea"/><rect x="1279" width="8" height="8" fill="#00ffe9"/><rect x="1286" width="8" height="8" fill="#00ffe9"/><rect x="1293" width="8" height="8" fill="#00ffe8"/><rect x="1300" width="8" height="8" fill="#00ffe7"/><rect x="1307" width="8" height="8" fill="#00ffe7"/><rect x="1314" width="8" height="8" fill="#00ffe6"/><rect x="1321" width="8" height="8" fill="#06ffe5"/><rect x="1328" width="8" height="8" fill="#14ffe5"/><rect x="1335" width="8" height="8" fill="#22ffe4"/><rect x="1342" width="8" height="8" fill="#31ffe3"/><rect x="1349" width="8" height="8" fill="#40ffe2"/><rect x="1356" width="8" height="8" fill="#50ffe1"/><rect x="1363" width="8" height="8" fill="#61ffe1"/><rect x="1370" width="8" height="8" fill="#72ffe0"/><rect x="1377" width="8" height="8" fill="#83ffdf"/><rect x="1384" width="8" height="8" fill="#95ffde"/><rect x="1391" width="8" height="8" fill="#a8ffdd"/><rect x="1398" width="8" height="8" fill="#bcffdc"/><rect x="1405" width="8" height="8" fill="#d0ffdb"/><rect x="1412" width="8" height="8" fill="#e6ffda"/><rect x="1419" width="8" height="8" fill="#fcffd8"/><rect x="1426" width="8" height="8" fill="#ffedc8"/><rect x="1433" width="8" height="8" fill="#ffdab7"/><rect x="1440" width="8" height="8" fill="#ffc9a7"/><rect x="1447" width="8" height="8" fill="#ffba9a"/><rect x="1454" width="8" height="8" fill="#ffac8e"/><rect x="1461" width="8" height="8" fill="#ffa083"/><rect x="1468" width="8" height="8" fill="#ff9579"/><rect x="1475" width="8" height="8" fill="#ff8b70"/><rect x="1482" width="8" height="8" fill="#ff8268"/><rect x="1489" width="8" height="8" fill="#ff7a60"/><rect x="1496" width="8" height="8" fill="#ff7259"/><rect x="1503" width="8" height="8" fill="#ff6b53"/><rect x="1510" width="8" height="8" fill="#ff644d"/><rect x="1517" width="8" height="8" fill="#ff5e47"/><rect x="1524" width="8" height="8" fill="#ff5842"/><rect x="1531" width="8" height="8" fill="#ff533d"/><rect x="1538" width="8" height="8" fill="#ff4e39"/><rect x="1545" width="8" height="8" fill="#ff4934"/><rect x="1552" width="8" height="8" fill="#ff4530"/><rect x="1559" width="8" height="8" fill="#ff412d"/><rect x="1566" width="8" height="8" fill="#ff3d29"/><rect x="1573" width="8" height="8" fill="#ff3926"/><rect x="1580" width="8" height="8" fill="#ff3523"/><rect x="1587" width="8" height="8" fill="#ff3220"/><rect x="1594" width="8" height="8" fill="#ff2f1d"/><rect x="1601" width="8" height="8" fill="#ff2c1a"/><rect x="1608" width="8" height="8" fill="#ff2917"/><rect x="1615" width="8" height="8" fill="#ff2615"/><rect x="1622" width="8" height="8" fill="#ff2413"/><rect x="1629" width="8" height="8" fill="#ff2110"/><rect x="1636" width="8" height="8" fill="#ff1f0e"/><rect x="1643" width="8" height="8" fill="#ff1c0c"/><rect x="1650" width="8" height="8" fill="#ff1a0a"/><rect x="1657" width="8" height="8" fill="#ff1808"/><rect x="1664" width="8" height="8" fill="#ff1607"/><rect x="1671" width="8" height="8" fill="#ff1405"/><rect x="1678" width="8" height="8" fill="#ff1203"/><rect x="1685" width="8" height="8" fill="#ff1102"/><rect x="1692" width="8" height="8" fill="#ff0f00"/><rect x="1699" width="8" height="8" fill="#ff0d00"/><rect x="1706" width="8" height="8" fill="#ff0c00"/></g><g transform="translate(0,453)"><rect x="1174" width="8" height="8" fill="#00fffe"/><rect x="1181" width="8" height="8" fill="#00fffd"/><rect x="1188" width="8" height="8" fill="#00fffd"/><rect x="1195" width="8" height="8" fill="#00fffd"/><rect x="1202" width="8" height="8" fill="#00fffd"/><rect x="1209" width="8" height="8" fill="#00fffc"/><rect x="1216" width="8" height="8" fill="#00fffc"/><rect x="1223" width="8" height="8" fill="#00fffc"/><rect x="1230" width="8" height="8" fill="#00fffb"/><rect x="1237" width="8" height="8" fill="#00fffb"/><rect x="1244" width="8" height="8" fill="#00fffb"/><rect x="1251" width="8" height="8" fill="#00fffa"/><rect x="1258" width="8" height="8" fill="#00fffa"/><rect x="1265" width="8" height="8" fill="#00fffa"/><rect x="1272" width="8" height="8" fill="#00fff9"/><rect x="1279" width="8" height="8" fill="#00fff9"/><rect x="1286" width="8" height="8" fill="#00fff8"/><rect x="1293" width="8" height="8" fill="#00fff8"/><rect x="1300" width="8" height="8" fill="#00fff8"/><rect x="1307" width="8" height="8" fill="#00fff7"/><rect x="1314" width="8" height="8" fill="#00fff7"/><rect x="1321" width="8" height="8" fill="#09fff6"/><rect x="1328" width="8" height="8" fill="#18fff6"/><rect x="1335" width="8" height="8" fill="#27fff5"/><rect x="1342" width="8" height="8" fill="#37fff5"/><rect x="1349" width="8" height="8" fill="#47fff4"/><rect x="1356" width="8" height="8" fill="#58fff4"/><rect x="1363" width="8" height="8" fill="#69fff3"/><rect x="1370" width="8" height="8" fill="#7bfff2"/><rect x="1377" width="8" height="8" fill="#8efff2"/><rect x="1384" width="8" height="8" fill="#a1fff1"/><rect x="1391" width="8" height="8" fill="#b5fff0"/><rect x="1398" width="8" height="8" fill="#cafff0"/><rect x="1405" width="8" height="8" fill="#e0ffef"/><rect x="1412" width="8" height="8" fill="#f7ffee"/><rect x="1419" width="8" height="8" fill="#fff0e0"/><rect x="1426" width="8" height="8" fill="#ffdccc"/><rect x="1433" width="8" height="8" fill="#ffcabb"/><rect x="1440" width="8" height="8" fill="#ffbbac"/><rect x="1447" width="8" height="8" fill="#ffad9e"/><rect x="1454" width="8" height="8" fill="#ffa092"/><rect x="1461" width="8" height="8" fill="#ff9587"/><rect x="1468" width="8" height="8" fill="#ff8a7d"/><rect x="1475" width="8" height="8" fill="#ff8174"/><rect x="1482" width="8" height="8" fill="#ff786c"/><rect x="1489" width="8" height="8" fill="#ff7064"/><rect x="1496" width="8" height="8" fill="#ff695d"/><rect x="1503" width="8" height="8" fill="#ff6257"/><rect x="1510" width="8" height="8" fill="#ff5c50"/><rect x="1517" width="8" height="8" fill="#ff564b"/><rect x="1524" width="8" height="8" fill="#ff5146"/><rect x="1531" width="8" height="8" fill="#ff4c41"/><rect x="1538" width="8" height="8" fill="#ff473c"/><rect x="1545" width="8" height="8" fill="#ff4238"/><rect x="1552" width="8" height="8" fill="#ff3e34"/><rect x="1559" width="8" height="8" fill="#ff3a30"/><rect x="1566" width="8" height="8" fill="#ff372c"/><rect x="1573" width="8" height="8" fill="#ff3329"/><rect x="1580" width="8" height="8" fill="#ff3026"/><rect x="1587" width="8" height="8" fill="#ff2c22"/><rect x="1594" width="8" height="8" fill="#ff2920"/><rect x="1601" width="8" height="8" fill="#ff271d"/><rect x="1608" width="8" height="8" fill="#ff241a"/><rect x="1615" width="8" height="8" fill="#ff2118"/><rect x="1622" width="8" height="8" fill="#ff1f15"/><rect x="1629" width="8" height="8" fill="#ff1c13"/><rect x="1636" width="8" height="8" fill="#ff1a11"/><rect x="1643" width="8" height="8" fill="#ff180f"/><rect x="1650" width="8" height="8" fill="#ff160d"/><rect x="1657" width="8" height="8" fill="#ff140b"/><rect x="1664" width="8" height="8" fill="#ff1209"/><rect x="1671" width="8" height="8" fill="#ff1007"/><rect x="1678" width="8" height="8" fill="#ff0e05"/><rect x="1685" width="8" height="8" fill="#ff0d04"/><rect x="1692" width="8" height="8" fill="#ff0b02"/><rect x="1699" width="8" height="8" fill="#ff0901"/><rect x="1706" width="8" height="8" fill="#ff0800"/><rect x="1713" width="8" height="8" fill="#ff0600"/></g><g transform="translate(0,460)"><rect x="1174" width="8" height="8" fill="#00f3ff"/><rect x="1181" width="8" height="8" fill="#00f3ff"/><rect x="1188" width="8" height="8" fill="#00f3ff"/><rect x="1195" width="8" height="8" fill="#00f4ff"/><rect x="1202" width="8" height="8" fill="#00f4ff"/><rect x="1209" width="8" height="8" fill="#00f4ff"/><rect x="1216" width="8" height="8" fill="#00f4ff"/><rect x="1223" width="8" height="8" fill="#00f4ff"/><rect x="1230" width="8" height="8" fill="#00f4ff"/><rect x="1237" width="8" height="8" fill="#00f4ff"/><rect x="1244" width="8" height="8" fill="#00f4ff"/><rect x="1251" width="8" height="8" fill="#00f4ff"/><rect x="1258" width="8" height="8" fill="#00f5ff"/><rect x="1265" width="8" height="8" fill="#00f5ff"/><rect x="1272" width="8" height="8" fill="#00f5ff"/><rect x="1279" width="8" height="8" fill="#00f5ff"/><rect x="1286" width="8" height="8" fill="#00f5ff"/><rect x="1293" width="8" height="8" fill="#00f5ff"/><rect x="1300" width="8" height="8" fill="#00f5ff"/><rect x="1307" width="8" height="8" fill="#00f6ff"/><rect x="1314" width="8" height="8" fill="#00f6ff"/><rect x="1321" width="8" height="8" fill="#0df6ff"/><rect x="1328" width="8" height="8" fill="#1cf6ff"/><rect x="1335" width="8" height="8" fill="#2bf6ff"/><rect x="1342" width="8" height="8" fill="#3bf6ff"/><rect x="1349" width="8" height="8" fill="#4cf7ff"/><rect x="1356" width="8" height="8" fill="#5df7ff"/><rect x="1363" width="8" height="8" fill="#6ff7ff"/><rect x="1370" width="8" height="8" fill="#81f7ff"/><rect x="1377" width="8" height="8" fill="#95f7ff"/><rect x="1384" width="8" height="8" fill="#a9f8ff"/><rect x="1391" width="8" height="8" fill="#bef8ff"/><rect x="1398" width="8" height="8" fill="#d4f8ff"/><rect x="1405" width="8" height="8" fill="#ecf9ff"/><rect x="1412" width="8" height="8" fill="#fff4fa"/><rect x="1419" width="8" height="8" fill="#ffdfe4"/><rect x="1426" width="8" height="8" fill="#ffccd1"/><rect x="1433" width="8" height="8" fill="#ffbcc0"/><rect x="1440" width="8" height="8" fill="#ffadb0"/><rect x="1447" width="8" height="8" fill="#ffa0a3"/><rect x="1454" width="8" height="8" fill="#ff9496"/><rect x="1461" width="8" height="8" fill="#ff898b"/><rect x="1468" width="8" height="8" fill="#ff8081"/><rect x="1475" width="8" height="8" fill="#ff7778"/><rect x="1482" width="8" height="8" fill="#ff6f70"/><rect x="1489" width="8" height="8" fill="#ff6768"/><rect x="1496" width="8" height="8" fill="#ff6061"/><rect x="1503" width="8" height="8" fill="#ff5a5a"/><rect x="1510" width="8" height="8" fill="#ff5454"/><rect x="1517" width="8" height="8" fill="#ff4f4e"/><rect x="1524" width="8" height="8" fill="#ff4949"/><rect x="1531" width="8" height="8" fill="#ff4544"/><rect x="1538" width="8" height="8" fill="#ff403f"/><rect x="1545" width="8" height="8" fill="#ff3c3b"/><rect x="1552" width="8" height="8" fill="#ff3837"/><rect x="1559" width="8" height="8" fill="#ff3433"/><rect x="1566" width="8" height="8" fill="#ff312f"/><rect x="1573" width="8" height="8" fill="#ff2d2c"/><rect x="1580" width="8" height="8" fill="#ff2a28"/><rect x="1587" width="8" height="8" fill="#ff2725"/><rect x="1594" width="8" height="8" fill="#ff2422"/><rect x="1601" width="8" height="8" fill="#ff2120"/><rect x="1608" width="8" height="8" fill="#ff1f1d"/><rect x="1615" width="8" height="8" fill="#ff1c1a"/><rect x="1622" width="8" height="8" fill="#ff1a18"/><rect x="1629" width="8" height="8" fill="#ff1816"/><rect x="1636" width="8" height="8" fill="#ff1613"/><rect x="1643" width="8" height="8" fill="#ff1411"/><rect x="1650" width="8" height="8" fill="#ff120f"/><rect x="1657" width="8" height="8" fill="#ff100d"/><rect x="1664" width="8" height="8" fill="#ff0e0b"/><rect x="1671" width="8" height="8" fill="#ff0c09"/><rect x="1678" width="8" height="8" fill="#ff0a08"/><rect x="1685" width="8" height="8" fill="#ff0906"/><rect x="1692" width="8" height="8" fill="#ff0704"/><rect x="1699" width="8" height="8" fill="#ff0603"/><rect x="1706" width="8" height="8" fill="#ff0401"/><rect x="1713" width="8" height="8" fill="#ff0300"/><rect x="1720" width="8" height="8" fill="#ff0200"/><rect x="1727" width="8" height="8" fill="#ff0000"/></g><g transform="translate(0,467)"><rect x="1174" width="8" height="8" fill="#00e7ff"/><rect x="1181" width="8" height="8" fill="#00e7ff"/><rect x="1188" width="8" height="8" fill="#00e6ff"/><rect x="1195" width="8" height="8" fill="#00e6ff"/><rect x="1202" width="8" height="8" fill="#00e6ff"/><rect x="1209" width="8" height="8" fill="#00e6ff"/><rect x="1216" width="8" height="8" fill="#00e6ff"/><rect x="1223" width="8" height="8" fill="#00e6ff"/><rect x="1230" width="8" height="8" fill="#00e6ff"/><rect x="1237" width="8" height="8" fill="#00e6ff"/><rect x="1244" width="8" height="8" fill="#00e6ff"/><rect x="1251" width="8" height="8" fill="#00e6ff"/><rect x="1258" width="8" height="8" fill="#00e6ff"/><rect x="1265" width="8" height="8" fill="#00e5ff"/><rect x="1272" width="8" height="8" fill="#00e5ff"/><rect x="1279" width="8" height="8" fill="#00e5ff"/><rect x="1286" width="8" height="8" fill="#00e5ff"/><rect x="1293" width="8" height="8" fill="#00e5ff"/><rect x="1300" width="8" height="8" fill="#00e5ff"/><rect x="1307" width="8" height="8" fill="#00e5ff"/><rect x="1314" width="8" height="8" fill="#02e5ff"/><rect x="1321" width="8" height="8" fill="#10e5ff"/><rect x="1328" width="8" height="8" fill="#1ee4ff"/><rect x="1335" width="8" height="8" fill="#2de4ff"/><rect x="1342" width="8" height="8" fill="#3de4ff"/><rect x="1349" width="8" height="8" fill="#4de4ff"/><rect x="1356" width="8" height="8" fill="#5ee4ff"/><rect x="1363" width="8" height="8" fill="#6fe4ff"/><rect x="1370" width="8" height="8" fill="#82e3ff"/><rect x="1377" width="8" height="8" fill="#94e3ff"/><rect x="1384" width="8" height="8" fill="#a8e3ff"/><rect x="1391" width="8" height="8" fill="#bce3ff"/><rect x="1398" width="8" height="8" fill="#d2e3ff"/><rect x="1405" width="8" height="8" fill="#e8e3ff"/><rect x="1412" width="8" height="8" fill="#ffe2ff"/><rect x="1419" width="8" height="8" fill="#ffcee8"/><rect x="1426" width="8" height="8" fill="#ffbdd5"/><rect x="1433" width="8" height="8" fill="#ffadc4"/><rect x="1440" width="8" height="8" fill="#ffa0b5"/><rect x="1447" width="8" height="8" fill="#ff93a7"/><rect x="1454" width="8" height="8" fill="#ff889b"/><rect x="1461" width="8" height="8" fill="#ff7e8f"/><rect x="1468" width="8" height="8" fill="#ff7585"/><rect x="1475" width="8" height="8" fill="#ff6d7c"/><rect x="1482" width="8" height="8" fill="#ff6574"/><rect x="1489" width="8" height="8" fill="#ff5e6c"/><rect x="1496" width="8" height="8" fill="#ff5864"/><rect x="1503" width="8" height="8" fill="#ff525e"/><rect x="1510" width="8" height="8" fill="#ff4c58"/><rect x="1517" width="8" height="8" fill="#ff4752"/><rect x="1524" width="8" height="8" fill="#ff424c"/><rect x="1531" width="8" height="8" fill="#ff3e47"/><rect x="1538" width="8" height="8" fill="#ff3943"/><rect x="1545" width="8" height="8" fill="#ff353e"/><rect x="1552" width="8" height="8" fill="#ff323a"/><rect x="1559" width="8" height="8" fill="#ff2e36"/><rect x="1566" width="8" height="8" fill="#ff2b32"/><rect x="1573" width="8" height="8" fill="#ff282f"/><rect x="1580" width="8" height="8" fill="#ff242b"/><rect x="1587" width="8" height="8" fill="#ff2228"/><rect x="1594" width="8" height="8" fill="#ff1f25"/><rect x="1601" width="8" height="8" fill="#ff1c22"/><rect x="1608" width="8" height="8" fill="#ff1a20"/><rect x="1615" width="8" height="8" fill="#ff181d"/><rect x="1622" width="8" height="8" fill="#ff151a"/><rect x="1629" width="8" height="8" fill="#ff1318"/><rect x="1636" width="8" height="8" fill="#ff1116"/><rect x="1643" width="8" height="8" fill="#ff0f14"/><rect x="1650" width="8" height="8" fill="#ff0d12"/><rect x="1657" width="8" height="8" fill="#ff0c10"/><rect x="1664" width="8" height="8" fill="#ff0a0e"/><rect x="1671" width="8" height="8" fill="#ff080c"/><rect x="1678" width="8" height="8" fill="#ff070a"/><rect x="1685" width="8" height="8" fill="#ff0508"/><rect x="1692" width="8" height="8" fill="#ff0407"/><rect x="1699" width="8" height="8" fill="#ff0205"/><rect x="1706" width="8" height="8" fill="#ff0103"/><rect x="1713" width="8" height="8" fill="#ff0002"/><rect x="1720" width="8" height="8" fill="#ff0001"/><rect x="1727" width="8" height="8" fill="#ff0000"/><rect x="1734" width="8" height="8" fill="#ff0000"/></g><g transform="translate(0,474)"><rect x="1181" width="8" height="8" fill="#00daff"/><rect x="1188" width="8" height="8" fill="#00daff"/><rect x="1195" width="8" height="8" fill="#00daff"/><rect x="1202" width="8" height="8" fill="#00d9ff"/><rect x="1209" width="8" height="8" fill="#00d9ff"/><rect x="1216" width="8" height="8" fill="#00d9ff"/><rect x="1223" width="8" height="8" fill="#00d9ff"/><rect x="1230" width="8" height="8" fill="#00d8ff"/><rect x="1237" width="8" height="8" fill="#00d8ff"/><rect x="1244" width="8" height="8" fill="#00d8ff"/><rect x="1251" width="8" height="8" fill="#00d8ff"/><rect x="1258" width="8" height="8" fill="#00d7ff"/><rect x="1265" width="8" height="8" fill="#00d7ff"/><rect x="1272" width="8" height="8" fill="#00d7ff"/><rect x="1279" width="8" height="8" fill="#00d6ff"/><rect x="1286" width="8" height="8" fill="#00d6ff"/><rect x="1293" width="8" height="8" fill="#00d6ff"/><rect x="1300" width="8" height="8" fill="#00d5ff"/><rect x="1307" width="8" height="8" fill="#00d5ff"/><rect x="1314" width="8" height="8" fill="#05d4ff"/><rect x="1321" width="8" height="8" fill="#13d4ff"/><rect x="1328" width="8" height="8" fill="#21d4ff"/><rect x="1335" width="8" height="8" fill="#30d3ff"/><rect x="1342" width="8" height="8" fill="#3fd3ff"/><rect x="1349" width="8" height="8" fill="#4fd2ff"/><rect x="1356" width="8" height="8" fill="#5fd2ff"/><rect x="1363" width="8" height="8" fill="#70d1ff"/><rect x="1370" width="8" height="8" fill="#82d1ff"/><rect x="1377" width="8" height="8" fill="#94d0ff"/><rect x="1384" width="8" height="8" fill="#a7d0ff"/><rect x="1391" width="8" height="8" fill="#bbcfff"/><rect x="1398" width="8" height="8" fill="#cfcfff"/><rect x="1405" width="8" height="8" fill="#e5ceff"/><rect x="1412" width="8" height="8" fill="#fbcdff"/><rect x="1419" width="8" height="8" fill="#ffbeed"/><rect x="1426" width="8" height="8" fill="#ffaed9"/><rect x="1433" width="8" height="8" fill="#ff9fc8"/><rect x="1440" width="8" height="8" fill="#ff93b9"/><rect x="1447" width="8" height="8" fill="#ff87ab"/><rect x="1454" width="8" height="8" fill="#ff7d9f"/><rect x="1461" width="8" height="8" fill="#ff7393"/><rect x="1468" width="8" height="8" fill="#ff6b89"/><rect x="1475" width="8" height="8" fill="#ff6380"/><rect x="1482" width="8" height="8" fill="#ff5c77"/><rect x="1489" width="8" height="8" fill="#ff556f"/><rect x="1496" width="8" height="8" fill="#ff4f68"/><rect x="1503" width="8" height="8" fill="#ff4a61"/><rect x="1510" width="8" height="8" fill="#ff445b"/><rect x="1517" width="8" height="8" fill="#ff4055"/><rect x="1524" width="8" height="8" fill="#ff3b50"/><rect x="1531" width="8" height="8" fill="#ff374b"/><rect x="1538" width="8" height="8" fill="#ff3346"/><rect x="1545" width="8" height="8" fill="#ff2f41"/><rect x="1552" width="8" height="8" fill="#ff2b3d"/><rect x="1559" width="8" height="8" fill="#ff2839"/><rect x="1566" width="8" height="8" fill="#ff2535"/><rect x="1573" width="8" height="8" fill="#ff2232"/><rect x="1580" width="8" height="8" fill="#ff1f2e"/><rect x="1587" width="8" height="8" fill="#ff1c2b"/><rect x="1594" width="8" height="8" fill="#ff1a28"/><rect x="1601" width="8" height="8" fill="#ff1725"/><rect x="1608" width="8" height="8" fill="#ff1522"/><rect x="1615" width="8" height="8" fill="#ff1320"/><rect x="1622" width="8" height="8" fill="#ff111d"/><rect x="1629" width="8" height="8" fill="#ff0f1b"/><rect x="1636" width="8" height="8" fill="#ff0d18"/><rect x="1643" width="8" height="8" fill="#ff0b16"/><rect x="1650" width="8" height="8" fill="#ff0914"/><rect x="1657" width="8" height="8" fill="#ff0712"/><rect x="1664" width="8" height="8" fill="#ff0610"/><rect x="1671" width="8" height="8" fill="#ff040e"/><rect x="1678" width="8" height="8" fill="#ff030c"/><rect x="1685" width="8" height="8" fill="#ff010a"/><rect x="1692" width="8" height="8" fill="#ff0009"/><rect x="1699" width="8" height="8" fill="#ff0007"/><rect x="1706" width="8" height="8" fill="#ff0006"/><rect x="1713" width="8" height="8" fill="#ff0004"/><rect x="1720" width="8" height="8" fill="#ff0003"/><rect x="1727" width="8" height="8" fill="#ff0001"/><rect x="1734" width="8" height="8" fill="#ff0000"/><rect x="1741" width="8" height="8" fill="#ff0000"/></g><g transform="translate(0,481)"><rect x="1181" width="8" height="8" fill="#00ceff"/><rect x="1188" width="8" height="8" fill="#00ceff"/><rect x="1195" width="8" height="8" fill="#00ceff"/><rect x="1202" width="8" height="8" fill="#00cdff"/><rect x="1209" width="8" height="8" fill="#00cdff"/><rect x="1216" width="8" height="8" fill="#00ccff"/><rect x="1223" width="8" height="8" fill="#00ccff"/><rect x="1230" width="8" height="8" fill="#00cbff"/><rect x="1237" width="8" height="8" fill="#00cbff"/><rect x="1244" width="8" height="8" fill="#00cbff"/><rect x="1251" width="8" height="8" fill="#00caff"/><rect x="1258" width="8" height="8" fill="#00caff"/><rect x="1265" width="8" height="8" fill="#00c9ff"/><rect x="1272" width="8" height="8" fill="#00c9ff"/><rect x="1279" width="8" height="8" fill="#00c8ff"/><rect x="1286" width="8" height="8" fill="#00c7ff"/><rect x="1293" width="8" height="8" fill="#00c7ff"/><rect x="1300" width="8" height="8" fill="#00c6ff"/><rect x="1307" width="8" height="8" fill="#00c6ff"/><rect x="1314" width="8" height="8" fill="#08c5ff"/><rect x="1321" width="8" height="8" fill="#16c4ff"/><rect x="1328" width="8" height="8" fill="#23c4ff"/><rect x="1335" width="8" height="8" fill="#32c3ff"/><rect x="1342" width="8" height="8" fill="#41c2ff"/><rect x="1349" width="8" height="8" fill="#50c2ff"/><rect x="1356" width="8" height="8" fill="#60c1ff"/><rect x="1363" width="8" height="8" fill="#70c0ff"/><rect x="1370" width="8" height="8" fill="#82bfff"/><rect x="1377" width="8" height="8" fill="#93beff"/><rect x="1384" width="8" height="8" fill="#a6bdff"/><rect x="1391" width="8" height="8" fill="#b9bcff"/><rect x="1398" width="8" height="8" fill="#cdbcff"/><rect x="1405" width="8" height="8" fill="#e2baff"/><rect x="1412" width="8" height="8" fill="#f8b9ff"/><rect x="1419" width="8" height="8" fill="#ffaef1"/><rect x="1426" width="8" height="8" fill="#ff9fdd"/><rect x="1433" width="8" height="8" fill="#ff92cc"/><rect x="1440" width="8" height="8" fill="#ff86bd"/><rect x="1447" width="8" height="8" fill="#ff7baf"/><rect x="1454" width="8" height="8" fill="#ff72a3"/><rect x="1461" width="8" height="8" fill="#ff6997"/><rect x="1468" width="8" height="8" fill="#ff618d"/><rect x="1475" width="8" height="8" fill="#ff5a84"/><rect x="1482" width="8" height="8" fill="#ff537b"/><rect x="1489" width="8" height="8" fill="#ff4d73"/><rect x="1496" width="8" height="8" fill="#ff476c"/><rect x="1503" width="8" height="8" fill="#ff4265"/><rect x="1510" width="8" height="8" fill="#ff3d5e"/><rect x="1517" width="8" height="8" fill="#ff3859"/><rect x="1524" width="8" height="8" fill="#ff3453"/><rect x="1531" width="8" height="8" fill="#ff304e"/><rect x="1538" width="8" height="8" fill="#ff2c49"/><rect x="1545" width="8" height="8" fill="#ff2944"/><rect x="1552" width="8" height="8" fill="#ff2540"/><rect x="1559" width="8" height="8" fill="#ff223c"/><rect x="1566" width="8" height="8" fill="#ff1f38"/><rect x="1573" width="8" height="8" fill="#ff1c34"/><rect x="1580" width="8" height="8" fill="#ff1a31"/><rect x="1587" width="8" height="8" fill="#ff172e"/><rect x="1594" width="8" height="8" fill="#ff152b"/><rect x="1601" width="8" height="8" fill="#ff1228"/><rect x="1608" width="8" height="8" fill="#ff1025"/><rect x="1615" width="8" height="8" fill="#ff0e22"/><rect x="1622" width="8" height="8" fill="#ff0c20"/><rect x="1629" width="8" height="8" fill="#ff0a1d"/><rect x="1636" width="8" height="8" fill="#ff081b"/><rect x="1643" width="8" height="8" fill="#ff0718"/><rect x="1650" width="8" height="8" fill="#ff0516"/><rect x="1657" width="8" height="8" fill="#ff0314"/><rect x="1664" width="8" height="8" fill="#ff0212"/><rect x="1671" width="8" height="8" fill="#ff0010"/><rect x="1678" width="8" height="8" fill="#ff000e"/><rect x="1685" width="8" height="8" fill="#ff000d"/><rect x="1692" width="8" height="8" fill="#ff000b"/><rect x="1699" width="8" height="8" fill="#ff0009"/><rect x="1706" width="8" height="8" fill="#ff0008"/><rect x="1713" width="8" height="8" fill="#ff0006"/><rect x="1720" width="8" height="8" fill="#ff0005"/><rect x="1727" width="8" height="8" fill="#ff0003"/><rect x="1734" width="8" height="8" fill="#ff0002"/><rect x="1741" width="8" height="8" fill="#ff0000"/><rect x="1748" width="8" height="8" fill="#ff0000"/><rect x="1755" width="8" height="8" fill="#ff0000"/></g><g transform="translate(0,488)"><rect x="1181" width="8" height="8" fill="#00c3ff"/><rect x="1188" width="8" height="8" fill="#00c2ff"/><rect x="1195" width="8" height="8" fill="#00c2ff"/><rect x="1202" width="8" height="8" fill="#00c1ff"/><rect x="1209" width="8" height="8" fill="#00c1ff"/><rect x="1216" width="8" height="8" fill="#00c0ff"/><rect x="1223" width="8" height="8" fill="#00c0ff"/><rect x="1230" width="8" height="8" fill="#00bfff"/><rect x="1237" width="8" height="8" fill="#00beff"/><rect x="1244" width="8" height="8" fill="#00beff"/><rect x="1251" width="8" height="8" fill="#00bdff"/><rect x="1258" width="8" height="8" fill="#00bcff"/><rect x="1265" width="8" height="8" fill="#00bcff"/><rect x="1272" width="8" height="8" fill="#00bbff"/><rect x="1279" width="8" height="8" fill="#00baff"/><rect x="1286" width="8" height="8" fill="#00baff"/><rect x="1293" width="8" height="8" fill="#00b9ff"/><rect x="1300" width="8" height="8" fill="#00b8ff"/><rect x="1307" width="8" height="8" fill="#00b7ff"/><rect x="1314" width="8" height="8" fill="#0bb6ff"/><rect x="1321" width="8" height="8" fill="#18b5ff"/><rect x="1328" width="8" height="8" fill="#26b5ff"/><rect x="1335" width="8" height="8" fill="#34b4ff"/><rect x="1342" width="8" height="8" fill="#42b3ff"/><rect x="1349" width="8" height="8" fill="#51b2ff"/><rect x="1356" width="8" height="8" fill="#61b1ff"/><rect x="1363" width="8" height="8" fill="#71b0ff"/><rect x="1370" width="8" height="8" fill="#82aeff"/><rect x="1377" width="8" height="8" fill="#93adff"/><rect x="1384" width="8" height="8" fill="#a5acff"/><rect x="1391" width="8" height="8" fill="#b8abff"/><rect x="1398" width="8" height="8" fill="#cbaaff"/><rect x="1405" width="8" height="8" fill="#dfa8ff"/><rect x="1412" width="8" height="8" fill="#f4a7ff"/><rect x="1419" width="8" height="8" fill="#ff9ff5"/><rect x="1426" width="8" height="8" fill="#ff91e1"/><rect x="1433" width="8" height="8" fill="#ff84d0"/><rect x="1440" width="8" height="8" fill="#ff79c1"/><rect x="1447" width="8" height="8" fill="#ff70b3"/><rect x="1454" width="8" height="8" fill="#ff67a6"/><rect x="1461" width="8" height="8" fill="#ff5e9b"/><rect x="1468" width="8" height="8" fill="#ff5791"/><rect x="1475" width="8" height="8" fill="#ff5087"/><rect x="1482" width="8" height="8" fill="#ff4a7f"/><rect x="1489" width="8" height="8" fill="#ff4477"/><rect x="1496" width="8" height="8" fill="#ff3f6f"/><rect x="1503" width="8" height="8" fill="#ff3a68"/><rect x="1510" width="8" height="8" fill="#ff3562"/><rect x="1517" width="8" height="8" fill="#ff315c"/><rect x="1524" width="8" height="8" fill="#ff2d56"/><rect x="1531" width="8" height="8" fill="#ff2951"/><rect x="1538" width="8" height="8" fill="#ff264c"/><rect x="1545" width="8" height="8" fill="#ff2247"/><rect x="1552" width="8" height="8" fill="#ff1f43"/><rect x="1559" width="8" height="8" fill="#ff1c3f"/><rect x="1566" width="8" height="8" fill="#ff193b"/><rect x="1573" width="8" height="8" fill="#ff1737"/><rect x="1580" width="8" height="8" fill="#ff1434"/><rect x="1587" width="8" height="8" fill="#ff1230"/><rect x="1594" width="8" height="8" fill="#ff102d"/><rect x="1601" width="8" height="8" fill="#ff0d2a"/><rect x="1608" width="8" height="8" fill="#ff0b27"/><rect x="1615" width="8" height="8" fill="#ff0925"/><rect x="1622" width="8" height="8" fill="#ff0822"/><rect x="1629" width="8" height="8" fill="#ff0620"/><rect x="1636" width="8" height="8" fill="#ff041d"/><rect x="1643" width="8" height="8" fill="#ff021b"/><rect x="1650" width="8" height="8" fill="#ff0119"/><rect x="1657" width="8" height="8" fill="#ff0016"/><rect x="1664" width="8" height="8" fill="#ff0014"/><rect x="1671" width="8" height="8" fill="#ff0012"/><rect x="1678" width="8" height="8" fill="#ff0011"/><rect x="1685" width="8" height="8" fill="#ff000f"/><rect x="1692" width="8" height="8" fill="#ff000d"/><rect x="1699" width="8" height="8" fill="#ff000b"/><rect x="1706" width="8" height="8" fill="#ff000a"/><rect x="1713" width="8" height="8" fill="#ff0008"/><rect x="1720" width="8" height="8" fill="#ff0007"/><rect x="1727" width="8" height="8" fill="#ff0005"/><rect x="1734" width="8" height="8" fill="#ff0004"/><rect x="1741" width="8" height="8" fill="#ff0002"/><rect x="1748" width="8" height="8" fill="#ff0001"/><rect x="1755" width="8" height="8" fill="#ff0000"/><rect x="1762" width="8" height="8" fill="#ff0000"/></g><g transform="translate(0,495)"><rect x="1188" width="8" height="8" fill="#00b7ff"/><rect x="1195" width="8" height="8" fill="#00b6ff"/><rect x="1202" width="8" height="8" fill="#00b6ff"/><rect x="1209" width="8" height="8" fill="#00b5ff"/><rect x="1216" width="8" height="8" fill="#00b4ff"/><rect x="1223" width="8" height="8" fill="#00b4ff"/><rect x="1230" width="8" height="8" fill="#00b3ff"/><rect x="1237" width="8" height="8" fill="#00b2ff"/><rect x="1244" width="8" height="8" fill="#00b1ff"/><rect x="1251" width="8" height="8" fill="#00b1ff"/><rect x="1258" width="8" height="8" fill="#00b0ff"/><rect x="1265" width="8" height="8" fill="#00afff"/><rect x="1272" width="8" height="8" fill="#00aeff"/><rect x="1279" width="8" height="8" fill="#00adff"/><rect x="1286" width="8" height="8" fill="#00acff"/><rect x="1293" width="8" height="8" fill="#00abff"/><rect x="1300" width="8" height="8" fill="#00aaff"/><rect x="1307" width="8" height="8" fill="#01a9ff"/><rect x="1314" width="8" height="8" fill="#0ea8ff"/><rect x="1321" width="8" height="8" fill="#1ba7ff"/><rect x="1328" width="8" height="8" fill="#28a6ff"/><rect x="1335" width="8" height="8" fill="#36a5ff"/><rect x="1342" width="8" height="8" fill="#44a4ff"/><rect x="1349" width="8" height="8" fill="#52a3ff"/><rect x="1356" width="8" height="8" fill="#62a1ff"/><rect x="1363" width="8" height="8" fill="#71a0ff"/><rect x="1370" width="8" height="8" fill="#829fff"/><rect x="1377" width="8" height="8" fill="#929dff"/><rect x="1384" width="8" height="8" fill="#a49cff"/><rect x="1391" width="8" height="8" fill="#b69aff"/><rect x="1398" width="8" height="8" fill="#c999ff"/><rect x="1405" width="8" height="8" fill="#dc97ff"/><rect x="1412" width="8" height="8" fill="#f195ff"/><rect x="1419" width="8" height="8" fill="#ff90f8"/><rect x="1426" width="8" height="8" fill="#ff83e5"/><rect x="1433" width="8" height="8" fill="#ff78d4"/><rect x="1440" width="8" height="8" fill="#ff6dc5"/><rect x="1447" width="8" height="8" fill="#ff64b7"/><rect x="1454" width="8" height="8" fill="#ff5caa"/><rect x="1461" width="8" height="8" fill="#ff549f"/><rect x="1468" width="8" height="8" fill="#ff4d94"/><rect x="1475" width="8" height="8" fill="#ff478b"/><rect x="1482" width="8" height="8" fill="#ff4182"/><rect x="1489" width="8" height="8" fill="#ff3c7a"/><rect x="1496" width="8" height="8" fill="#ff3773"/><rect x="1503" width="8" height="8" fill="#ff326c"/><rect x="1510" width="8" height="8" fill="#ff2e65"/><rect x="1517" width="8" height="8" fill="#ff2a5f"/><rect x="1524" width="8" height="8" fill="#ff2659"/><rect x="1531" width="8" height="8" fill="#ff2354"/><rect x="1538" width="8" height="8" fill="#ff1f4f"/><rect x="1545" width="8" height="8" fill="#ff1c4a"/><rect x="1552" width="8" height="8" fill="#ff1946"/><rect x="1559" width="8" height="8" fill="#ff1642"/><rect x="1566" width="8" height="8" fill="#ff143e"/><rect x="1573" width="8" height="8" fill="#ff113a"/><rect x="1580" width="8" height="8" fill="#ff0f37"/><rect x="1587" width="8" height="8" fill="#ff0d33"/><rect x="1594" width="8" height="8" fill="#ff0b30"/><rect x="1601" width="8" height="8" fill="#ff092d"/><rect x="1608" width="8" height="8" fill="#ff072a"/><rect x="1615" width="8" height="8" fill="#ff0527"/><rect x="1622" width="8" height="8" fill="#ff0324"/><rect x="1629" width="8" height="8" fill="#ff0122"/><rect x="1636" width="8" height="8" fill="#ff001f"/><rect x="1643" width="8" height="8" fill="#ff001d"/><rect x="1650" width="8" height="8" fill="#ff001b"/><rect x="1657" width="8" height="8" fill="#ff0019"/><rect x="1664" width="8" height="8" fill="#ff0017"/><rect x="1671" width="8" height="8" fill="#ff0015"/><rect x="1678" width="8" height="8" fill="#ff0013"/><rect x="1685" width="8" height="8" fill="#ff0011"/><rect x="1692" width="8" height="8" fill="#ff000f"/><rect x="1699" width="8" height="8" fill="#ff000d"/><rect x="1706" width="8" height="8" fill="#ff000c"/><rect x="1713" width="8" height="8" fill="#ff000a"/><rect x="1720" width="8" height="8" fill="#ff0009"/><rect x="1727" width="8" height="8" fill="#ff0007"/><rect x="1734" width="8" height="8" fill="#ff0006"/><rect x="1741" width="8" height="8" fill="#ff0004"/><rect x="1748" width="8" height="8" fill="#ff0003"/><rect x="1755" width="8" height="8" fill="#ff0002"/><rect x="1762" width="8" height="8" fill="#ff0000"/><rect x="1769" width="8" height="8" fill="#ff0000"/></g><g transform="translate(0,502)"><rect x="1188" width="8" height="8" fill="#00acff"/><rect x="1195" width="8" height="8" fill="#00acff"/><rect x="1202" width="8" height="8" fill="#00abff"/><rect x="1209" width="8" height="8" fill="#00aaff"/><rect x="1216" width="8" height="8" fill="#00a9ff"/><rect x="1223" width="8" height="8" fill="#00a8ff"/><rect x="1230" width="8" height="8" fill="#00a7ff"/><rect x="1237" width="8" height="8" fill="#00a7ff"/><rect x="1244" width="8" height="8" fill="#00a6ff"/><rect x="1251" width="8" height="8" fill="#00a5ff"/><rect x="1258" width="8" height="8" fill="#00a4ff"/><rect x="1265" width="8" height="8" fill="#00a3ff"/><rect x="1272" width="8" height="8" fill="#00a2ff"/><rect x="1279" width="8" height="8" fill="#00a1ff"/><rect x="1286" width="8" height="8" fill="#00a0ff"/><rect x="1293" width="8" height="8" fill="#009eff"/><rect x="1300" width="8" height="8" fill="#009dff"/><rect x="1307" width="8" height="8" fill="#049cff"/><rect x="1314" width="8" height="8" fill="#109bff"/><rect x="1321" width="8" height="8" fill="#1d9aff"/><rect x="1328" width="8" height="8" fill="#2a98ff"/><rect x="1335" width="8" height="8" fill="#3797ff"/><rect x="1342" width="8" height="8" fill="#4596ff"/><rect x="1349" width="8" height="8" fill="#5494ff"/><rect x="1356" width="8" height="8" fill="#6293ff"/><rect x="1363" width="8" height="8" fill="#7291ff"/><rect x="1370" width="8" height="8" fill="#8290ff"/><rect x="1377" width="8" height="8" fill="#928eff"/><rect x="1384" width="8" height="8" fill="#a38cff"/><rect x="1391" width="8" height="8" fill="#b58bff"/><rect x="1398" width="8" height="8" fill="#c789ff"/><rect x="1405" width="8" height="8" fill="#da87ff"/><rect x="1412" width="8" height="8" fill="#ee85ff"/><rect x="1419" width="8" height="8" fill="#ff81fc"/><rect x="1426" width="8" height="8" fill="#ff76e9"/><rect x="1433" width="8" height="8" fill="#ff6bd8"/><rect x="1440" width="8" height="8" fill="#ff62c8"/><rect x="1447" width="8" height="8" fill="#ff59ba"/><rect x="1454" width="8" height="8" fill="#ff51ae"/><rect x="1461" width="8" height="8" fill="#ff4aa3"/><rect x="1468" width="8" height="8" fill="#ff4498"/><rect x="1475" width="8" height="8" fill="#ff3e8e"/><rect x="1482" width="8" height="8" fill="#ff3986"/><rect x="1489" width="8" height="8" fill="#ff347e"/><rect x="1496" width="8" height="8" fill="#ff2f76"/><rect x="1503" width="8" height="8" fill="#ff2b6f"/><rect x="1510" width="8" height="8" fill="#ff2768"/><rect x="1517" width="8" height="8" fill="#ff2362"/><rect x="1524" width="8" height="8" fill="#ff1f5d"/><rect x="1531" width="8" height="8" fill="#ff1c57"/><rect x="1538" width="8" height="8" fill="#ff1952"/><rect x="1545" width="8" height="8" fill="#ff164d"/><rect x="1552" width="8" height="8" fill="#ff1349"/><rect x="1559" width="8" height="8" fill="#ff1145"/><rect x="1566" width="8" height="8" fill="#ff0e41"/><rect x="1573" width="8" height="8" fill="#ff0c3d"/><rect x="1580" width="8" height="8" fill="#ff0a39"/><rect x="1587" width="8" height="8" fill="#ff0836"/><rect x="1594" width="8" height="8" fill="#ff0633"/><rect x="1601" width="8" height="8" fill="#ff042f"/><rect x="1608" width="8" height="8" fill="#ff022c"/><rect x="1615" width="8" height="8" fill="#ff002a"/><rect x="1622" width="8" height="8" fill="#ff0027"/><rect x="1629" width="8" height="8" fill="#ff0024"/><rect x="1636" width="8" height="8" fill="#ff0022"/><rect x="1643" width="8" height="8" fill="#ff001f"/><rect x="1650" width="8" height="8" fill="#ff001d"/><rect x="1657" width="8" height="8" fill="#ff001b"/><rect x="1664" width="8" height="8" fill="#ff0019"/><rect x="1671" width="8" height="8" fill="#ff0017"/><rect x="1678" width="8" height="8" fill="#ff0015"/><rect x="1685" width="8" height="8" fill="#ff0013"/><rect x="1692" width="8" height="8" fill="#ff0011"/><rect x="1699" width="8" height="8" fill="#ff0010"/><rect x="1706" width="8" height="8" fill="#ff000e"/><rect x="1713" width="8" height="8" fill="#ff000c"/><rect x="1720" width="8" height="8" fill="#ff000b"/><rect x="1727" width="8" height="8" fill="#ff0009"/><rect x="1734" width="8" height="8" fill="#ff0008"/><rect x="1741" width="8" height="8" fill="#ff0006"/><rect x="1748" width="8" height="8" fill="#ff0005"/><rect x="1755" width="8" height="8" fill="#ff0003"/><rect x="1762" width="8" height="8" fill="#ff0002"/><rect x="1769" width="8" height="8" fill="#ff0001"/><rect x="1776" width="8" height="8" fill="#ff0000"/></g><g transform="translate(0,509)"><rect x="1188" width="8" height="8" fill="#00a2ff"/><rect x="1195" width="8" height="8" fill="#00a1ff"/><rect x="1202" width="8" height="8" fill="#00a0ff"/><rect x="1209" width="8" height="8" fill="#009fff"/><rect x="1216" width="8" height="8" fill="#009eff"/><rect x="1223" width="8" height="8" fill="#009dff"/><rect x="1230" width="8" height="8" fill="#009cff"/><rect x="1237" width="8" height="8" fill="#009bff"/><rect x="1244" width="8" height="8" fill="#009aff"/><rect x="1251" width="8" height="8" fill="#0099ff"/><rect x="1258" width="8" height="8" fill="#0098ff"/><rect x="1265" width="8" height="8" fill="#0097ff"/><rect x="1272" width="8" height="8" fill="#0096ff"/><rect x="1279" width="8" height="8" fill="#0095ff"/><rect x="1286" width="8" height="8" fill="#0093ff"/><rect x="1293" width="8" height="8" fill="#0092ff"/><rect x="1300" width="8" height="8" fill="#0091ff"/><rect x="1307" width="8" height="8" fill="#078fff"/><rect x="1314" width="8" height="8" fill="#138eff"/><rect x="1321" width="8" height="8" fill="#1f8dff"/><rect x="1328" width="8" height="8" fill="#2c8bff"/><rect x="1335" width="8" height="8" fill="#398aff"/><rect x="1342" width="8" height="8" fill="#4788ff"/><rect x="1349" width="8" height="8" fill="#5587ff"/><rect x="1356" width="8" height="8" fill="#6385ff"/><rect x="1363" width="8" height="8" fill="#7283ff"/><rect x="1370" width="8" height="8" fill="#8281ff"/><rect x="1377" width="8" height="8" fill="#9280ff"/><rect x="1384" width="8" height="8" fill="#a27eff"/><rect x="1391" width="8" height="8" fill="#b37cff"/><rect x="1398" width="8" height="8" fill="#c57aff"/><rect x="1405" width="8" height="8" fill="#d878ff"/><rect x="1412" width="8" height="8" fill="#eb75ff"/><rect x="1419" width="8" height="8" fill="#fe73ff"/><rect x="1426" width="8" height="8" fill="#ff68ec"/><rect x="1433" width="8" height="8" fill="#ff5fdb"/><rect x="1440" width="8" height="8" fill="#ff56cc"/><rect x="1447" width="8" height="8" fill="#ff4ebe"/><rect x="1454" width="8" height="8" fill="#ff47b2"/><rect x="1461" width="8" height="8" fill="#ff41a6"/><rect x="1468" width="8" height="8" fill="#ff3b9c"/><rect x="1475" width="8" height="8" fill="#ff3592"/><rect x="1482" width="8" height="8" fill="#ff3089"/><rect x="1489" width="8" height="8" fill="#ff2c81"/><rect x="1496" width="8" height="8" fill="#ff2779"/><rect x="1503" width="8" height="8" fill="#ff2372"/><rect x="1510" width="8" height="8" fill="#ff206c"/><rect x="1517" width="8" height="8" fill="#ff1c65"/><rect x="1524" width="8" height="8" fill="#ff1960"/><rect x="1531" width="8" height="8" fill="#ff165a"/><rect x="1538" width="8" height="8" fill="#ff1355"/><rect x="1545" width="8" height="8" fill="#ff1050"/><rect x="1552" width="8" height="8" fill="#ff0e4c"/><rect x="1559" width="8" height="8" fill="#ff0b47"/><rect x="1566" width="8" height="8" fill="#ff0943"/><rect x="1573" width="8" height="8" fill="#ff0740"/><rect x="1580" width="8" height="8" fill="#ff053c"/><rect x="1587" width="8" height="8" fill="#ff0338"/><rect x="1594" width="8" height="8" fill="#ff0135"/><rect x="1601" width="8" height="8" fill="#ff0032"/><rect x="1608" width="8" height="8" fill="#ff002f"/><rect x="1615" width="8" height="8" fill="#ff002c"/><rect x="1622" width="8" height="8" fill="#ff0029"/><rect x="1629" width="8" height="8" fill="#ff0027"/><rect x="1636" width="8" height="8" fill="#ff0024"/><rect x="1643" width="8" height="8" fill="#ff0022"/><rect x="1650" width="8" height="8" fill="#ff001f"/><rect x="1657" width="8" height="8" fill="#ff001d"/><rect x="1664" width="8" height="8" fill="#ff001b"/><rect x="1671" width="8" height="8" fill="#ff0019"/><rect x="1678" width="8" height="8" fill="#ff0017"/><rect x="1685" width="8" height="8" fill="#ff0015"/><rect x="1692" width="8" height="8" fill="#ff0013"/><rect x="1699" width="8" height="8" fill="#ff0012"/><rect x="1706" width="8" height="8" fill="#ff0010"/><rect x="1713" width="8" height="8" fill="#ff000e"/><rect x="1720" width="8" height="8" fill="#ff000d"/><rect x="1727" width="8" height="8" fill="#ff000b"/><rect x="1734" width="8" height="8" fill="#ff000a"/><rect x="1741" width="8" height="8" fill="#ff0008"/><rect x="1748" width="8" height="8" fill="#ff0007"/><rect x="1755" width="8" height="8" fill="#ff0005"/><rect x="1762" width="8" height="8" fill="#ff0004"/></g><g transform="translate(0,516)"><rect x="1188" width="8" height="8" fill="#0098ff"/><rect x="1195" width="8" height="8" fill="#0097ff"/><rect x="1202" width="8" height="8" fill="#0096ff"/><rect x="1209" width="8" height="8" fill="#0095ff"/><rect x="1216" width="8" height="8" fill="#0094ff"/><rect x="1223" width="8" height="8" fill="#0093ff"/><rect x="1230" width="8" height="8" fill="#0092ff"/><rect x="1237" width="8" height="8" fill="#0090ff"/><rect x="1244" width="8" height="8" fill="#008fff"/><rect x="1251" width="8" height="8" fill="#008eff"/><rect x="1258" width="8" height="8" fill="#008dff"/><rect x="1265" width="8" height="8" fill="#008cff"/><rect x="1272" width="8" height="8" fill="#008aff"/><rect x="1279" width="8" height="8" fill="#0089ff"/><rect x="1286" width="8" height="8" fill="#0088ff"/><rect x="1293" width="8" height="8" fill="#0086ff"/><rect x="1300" width="8" height="8" fill="#0085ff"/><rect x="1307" width="8" height="8" fill="#0983ff"/><rect x="1314" width="8" height="8" fill="#1582ff"/><rect x="1321" width="8" height="8" fill="#2180ff"/><rect x="1328" width="8" height="8" fill="#2e7fff"/><rect x="1335" width="8" height="8" fill="#3b7dff"/><rect x="1342" width="8" height="8" fill="#487bff"/><rect x="1349" width="8" height="8" fill="#5679ff"/><rect x="1356" width="8" height="8" fill="#6478ff"/><rect x="1363" width="8" height="8" fill="#7376ff"/><rect x="1370" width="8" height="8" fill="#8274ff"/><rect x="1377" width="8" height="8" fill="#9172ff"/><rect x="1384" width="8" height="8" fill="#a170ff"/><rect x="1391" width="8" height="8" fill="#b26eff"/><rect x="1398" width="8" height="8" fill="#c36bff"/><rect x="1405" width="8" height="8" fill="#d569ff"/><rect x="1412" width="8" height="8" fill="#e867ff"/><rect x="1419" width="8" height="8" fill="#fb64ff"/><rect x="1426" width="8" height="8" fill="#ff5cf0"/><rect x="1433" width="8" height="8" fill="#ff53df"/><rect x="1440" width="8" height="8" fill="#ff4bd0"/><rect x="1447" width="8" height="8" fill="#ff44c2"/><rect x="1454" width="8" height="8" fill="#ff3db5"/><rect x="1461" width="8" height="8" fill="#ff37aa"/><rect x="1468" width="8" height="8" fill="#ff329f"/><rect x="1475" width="8" height="8" fill="#ff2d95"/><rect x="1482" width="8" height="8" fill="#ff288c"/><rect x="1489" width="8" height="8" fill="#ff2484"/><rect x="1496" width="8" height="8" fill="#ff207d"/><rect x="1503" width="8" height="8" fill="#ff1c75"/><rect x="1510" width="8" height="8" fill="#ff196f"/><rect x="1517" width="8" height="8" fill="#ff1569"/><rect x="1524" width="8" height="8" fill="#ff1263"/><rect x="1531" width="8" height="8" fill="#ff0f5d"/><rect x="1538" width="8" height="8" fill="#ff0d58"/><rect x="1545" width="8" height="8" fill="#ff0a53"/><rect x="1552" width="8" height="8" fill="#ff084f"/><rect x="1559" width="8" height="8" fill="#ff064a"/><rect x="1566" width="8" height="8" fill="#ff0446"/><rect x="1573" width="8" height="8" fill="#ff0142"/><rect x="1580" width="8" height="8" fill="#ff003f"/><rect x="1587" width="8" height="8" fill="#ff003b"/><rect x="1594" width="8" height="8" fill="#ff0038"/><rect x="1601" width="8" height="8" fill="#ff0034"/><rect x="1608" width="8" height="8" fill="#ff0031"/><rect x="1615" width="8" height="8" fill="#ff002f"/><rect x="1622" width="8" height="8" fill="#ff002c"/><rect x="1629" width="8" height="8" fill="#ff0029"/><rect x="1636" width="8" height="8" fill="#ff0027"/><rect x="1643" width="8" height="8" fill="#ff0024"/><rect x="1650" width="8" height="8" fill="#ff0022"/><rect x="1657" width="8" height="8" fill="#ff001f"/><rect x="1664" width="8" height="8" fill="#ff001d"/><rect x="1671" width="8" height="8" fill="#ff001b"/><rect x="1678" width="8" height="8" fill="#ff0019"/><rect x="1685" width="8" height="8" fill="#ff0017"/><rect x="1692" width="8" height="8" fill="#ff0015"/><rect x="1699" width="8" height="8" fill="#ff0014"/><rect x="1706" width="8" height="8" fill="#ff0012"/><rect x="1713" width="8" height="8" fill="#ff0010"/><rect x="1720" width="8" height="8" fill="#ff000f"/><rect x="1727" width="8" height="8" fill="#ff000d"/><rect x="1734" width="8" height="8" fill="#ff000b"/><rect x="1741" width="8" height="8" fill="#ff000a"/></g><g transform="translate(0,523)"><rect x="1195" width="8" height="8" fill="#008dff"/><rect x="1202" width="8" height="8" fill="#008cff"/><rect x="1209" width="8" height="8" fill="#008bff"/><rect x="1216" width="8" height="8" fill="#008aff"/><rect x="1223" width="8" height="8" fill="#0089ff"/><rect x="1230" width="8" height="8" fill="#0087ff"/><rect x="1237" width="8" height="8" fill="#0086ff"/><rect x="1244" width="8" height="8" fill="#0085ff"/><rect x="1251" width="8" height="8" fill="#0083ff"/><rect x="1258" width="8" height="8" fill="#0082ff"/><rect x="1265" width="8" height="8" fill="#0081ff"/><rect x="1272" width="8" height="8" fill="#007fff"/><rect x="1279" width="8" height="8" fill="#007eff"/><rect x="1286" width="8" height="8" fill="#007cff"/><rect x="1293" width="8" height="8" fill="#007bff"/><rect x="1300" width="8" height="8" fill="#0179ff"/><rect x="1307" width="8" height="8" fill="#0c78ff"/><rect x="1314" width="8" height="8" fill="#1876ff"/><rect x="1321" width="8" height="8" fill="#2374ff"/><rect x="1328" width="8" height="8" fill="#3073ff"/><rect x="1335" width="8" height="8" fill="#3c71ff"/><rect x="1342" width="8" height="8" fill="#496fff"/><rect x="1349" width="8" height="8" fill="#576dff"/><rect x="1356" width="8" height="8" fill="#656bff"/><rect x="1363" width="8" height="8" fill="#7369ff"/><rect x="1370" width="8" height="8" fill="#8267ff"/><rect x="1377" width="8" height="8" fill="#9165ff"/><rect x="1384" width="8" height="8" fill="#a162ff"/><rect x="1391" width="8" height="8" fill="#b160ff"/><rect x="1398" width="8" height="8" fill="#c25eff"/><rect x="1405" width="8" height="8" fill="#d35bff"/><rect x="1412" width="8" height="8" fill="#e559ff"/><rect x="1419" width="8" height="8" fill="#f856ff"/><rect x="1426" width="8" height="8" fill="#ff4ff3"/><rect x="1433" width="8" height="8" fill="#ff47e2"/><rect x="1440" width="8" height="8" fill="#ff40d3"/><rect x="1447" width="8" height="8" fill="#ff39c5"/><rect x="1454" width="8" height="8" fill="#ff33b9"/><rect x="1461" width="8" height="8" fill="#ff2ead"/><rect x="1468" width="8" height="8" fill="#ff29a2"/><rect x="1475" width="8" height="8" fill="#ff2499"/><rect x="1482" width="8" height="8" fill="#ff2090"/><rect x="1489" width="8" height="8" fill="#ff1c87"/><rect x="1496" width="8" height="8" fill="#ff1880"/><rect x="1503" width="8" height="8" fill="#ff1579"/><rect x="1510" width="8" height="8" fill="#ff1272"/><rect x="1517" width="8" height="8" fill="#ff0f6c"/><rect x="1524" width="8" height="8" fill="#ff0c66"/><rect x="1531" width="8" height="8" fill="#ff0960"/><rect x="1538" width="8" height="8" fill="#ff075b"/><rect x="1545" width="8" height="8" fill="#ff0456"/><rect x="1552" width="8" height="8" fill="#ff0251"/><rect x="1559" width="8" height="8" fill="#ff004d"/><rect x="1566" width="8" height="8" fill="#ff0049"/><rect x="1573" width="8" height="8" fill="#ff0045"/><rect x="1580" width="8" height="8" fill="#ff0041"/><rect x="1587" width="8" height="8" fill="#ff003e"/><rect x="1594" width="8" height="8" fill="#ff003a"/><rect x="1601" width="8" height="8" fill="#ff0037"/><rect x="1608" width="8" height="8" fill="#ff0034"/><rect x="1615" width="8" height="8" fill="#ff0031"/><rect x="1622" width="8" height="8" fill="#ff002e"/><rect x="1629" width="8" height="8" fill="#ff002b"/><rect x="1636" width="8" height="8" fill="#ff0029"/><rect x="1643" width="8" height="8" fill="#ff0026"/><rect x="1650" width="8" height="8" fill="#ff0024"/><rect x="1657" width="8" height="8" fill="#ff0022"/><rect x="1664" width="8" height="8" fill="#ff001f"/><rect x="1671" width="8" height="8" fill="#ff001d"/><rect x="1678" width="8" height="8" fill="#ff001b"/><rect x="1685" width="8" height="8" fill="#ff0019"/><rect x="1692" width="8" height="8" fill="#ff0017"/><rect x="1699" width="8" height="8" fill="#ff0016"/><rect x="1706" width="8" height="8" fill="#ff0014"/><rect x="1713" width="8" height="8" fill="#ff0012"/><rect x="1720" width="8" height="8" fill="#ff0010"/></g><g transform="translate(0,530)"><rect x="1195" width="8" height="8" fill="#0084ff"/><rect x="1202" width="8" height="8" fill="#0082ff"/><rect x="1209" width="8" height="8" fill="#0081ff"/><rect x="1216" width="8" height="8" fill="#0080ff"/><rect x="1223" width="8" height="8" fill="#007fff"/><rect x="1230" width="8" height="8" fill="#007dff"/><rect x="1237" width="8" height="8" fill="#007cff"/><rect x="1244" width="8" height="8" fill="#007bff"/><rect x="1251" width="8" height="8" fill="#0079ff"/><rect x="1258" width="8" height="8" fill="#0078ff"/><rect x="1265" width="8" height="8" fill="#0076ff"/><rect x="1272" width="8" height="8" fill="#0075ff"/><rect x="1279" width="8" height="8" fill="#0073ff"/><rect x="1286" width="8" height="8" fill="#0072ff"/><rect x="1293" width="8" height="8" fill="#0070ff"/><rect x="1300" width="8" height="8" fill="#036eff"/><rect x="1307" width="8" height="8" fill="#0e6dff"/><rect x="1314" width="8" height="8" fill="#1a6bff"/><rect x="1321" width="8" height="8" fill="#2569ff"/><rect x="1328" width="8" height="8" fill="#3167ff"/><rect x="1335" width="8" height="8" fill="#3e65ff"/><rect x="1342" width="8" height="8" fill="#4b63ff"/><rect x="1349" width="8" height="8" fill="#5861ff"/><rect x="1356" width="8" height="8" fill="#655fff"/><rect x="1363" width="8" height="8" fill="#735dff"/><rect x="1370" width="8" height="8" fill="#825bff"/><rect x="1377" width="8" height="8" fill="#9158ff"/><rect x="1384" width="8" height="8" fill="#a056ff"/><rect x="1391" width="8" height="8" fill="#b053ff"/><rect x="1398" width="8" height="8" fill="#c051ff"/><rect x="1405" width="8" height="8" fill="#d14eff"/><rect x="1412" width="8" height="8" fill="#e34bff"/><rect x="1419" width="8" height="8" fill="#f549ff"/><rect x="1426" width="8" height="8" fill="#ff43f7"/><rect x="1433" width="8" height="8" fill="#ff3ce6"/><rect x="1440" width="8" height="8" fill="#ff35d6"/><rect x="1447" width="8" height="8" fill="#ff2fc9"/><rect x="1454" width="8" height="8" fill="#ff2abc"/><rect x="1461" width="8" height="8" fill="#ff25b0"/><rect x="1468" width="8" height="8" fill="#ff20a6"/><rect x="1475" width="8" height="8" fill="#ff1c9c"/><rect x="1482" width="8" height="8" fill="#ff1893"/><rect x="1489" width="8" height="8" fill="#ff148b"/><rect x="1496" width="8" height="8" fill="#ff1183"/><rect x="1503" width="8" height="8" fill="#ff0e7c"/><rect x="1510" width="8" height="8" fill="#ff0b75"/><rect x="1517" width="8" height="8" fill="#ff086f"/><rect x="1524" width="8" height="8" fill="#ff0669"/><rect x="1531" width="8" height="8" fill="#ff0363"/><rect x="1538" width="8" height="8" fill="#ff015e"/><rect x="1545" width="8" height="8" fill="#ff0059"/><rect x="1552" width="8" height="8" fill="#ff0054"/><rect x="1559" width="8" height="8" fill="#ff0050"/><rect x="1566" width="8" height="8" fill="#ff004c"/><rect x="1573" width="8" height="8" fill="#ff0048"/><rect x="1580" width="8" height="8" fill="#ff0044"/><rect x="1587" width="8" height="8" fill="#ff0040"/><rect x="1594" width="8" height="8" fill="#ff003d"/><rect x="1601" width="8" height="8" fill="#ff0039"/><rect x="1608" width="8" height="8" fill="#ff0036"/><rect x="1615" width="8" height="8" fill="#ff0033"/><rect x="1622" width="8" height="8" fill="#ff0030"/><rect x="1629" width="8" height="8" fill="#ff002e"/><rect x="1636" width="8" height="8" fill="#ff002b"/><rect x="1643" width="8" height="8" fill="#ff0029"/><rect x="1650" width="8" height="8" fill="#ff0026"/><rect x="1657" width="8" height="8" fill="#ff0024"/><rect x="1664" width="8" height="8" fill="#ff0022"/><rect x="1671" width="8" height="8" fill="#ff001f"/><rect x="1678" width="8" height="8" fill="#ff001d"/><rect x="1685" width="8" height="8" fill="#ff001b"/><rect x="1692" width="8" height="8" fill="#ff0019"/><rect x="1699" width="8" height="8" fill="#ff0018"/></g><g transform="translate(0,537)"><rect x="1202" width="8" height="8" fill="#0079ff"/><rect x="1209" width="8" height="8" fill="#0078ff"/><rect x="1216" width="8" height="8" fill="#0077ff"/><rect x="1223" width="8" height="8" fill="#0075ff"/><rect x="1230" width="8" height="8" fill="#0074ff"/><rect x="1237" width="8" height="8" fill="#0072ff"/><rect x="1244" width="8" height="8" fill="#0071ff"/><rect x="1251" width="8" height="8" fill="#006fff"/><rect x="1258" width="8" height="8" fill="#006eff"/><rect x="1265" width="8" height="8" fill="#006cff"/><rect x="1272" width="8" height="8" fill="#006bff"/><rect x="1279" width="8" height="8" fill="#0069ff"/><rect x="1286" width="8" height="8" fill="#0067ff"/><rect x="1293" width="8" height="8" fill="#0066ff"/><rect x="1300" width="8" height="8" fill="#0664ff"/><rect x="1307" width="8" height="8" fill="#1162ff"/><rect x="1314" width="8" height="8" fill="#1c60ff"/><rect x="1321" width="8" height="8" fill="#275eff"/><rect x="1328" width="8" height="8" fill="#335cff"/><rect x="1335" width="8" height="8" fill="#3f5aff"/><rect x="1342" width="8" height="8" fill="#4c58ff"/><rect x="1349" width="8" height="8" fill="#5956ff"/><rect x="1356" width="8" height="8" fill="#6653ff"/><rect x="1363" width="8" height="8" fill="#7451ff"/><rect x="1370" width="8" height="8" fill="#824fff"/><rect x="1377" width="8" height="8" fill="#904cff"/><rect x="1384" width="8" height="8" fill="#9f4aff"/><rect x="1391" width="8" height="8" fill="#af47ff"/><rect x="1398" width="8" height="8" fill="#bf44ff"/><rect x="1405" width="8" height="8" fill="#cf42ff"/><rect x="1412" width="8" height="8" fill="#e03fff"/><rect x="1419" width="8" height="8" fill="#f23cff"/><rect x="1426" width="8" height="8" fill="#ff38fa"/><rect x="1433" width="8" height="8" fill="#ff31e9"/><rect x="1440" width="8" height="8" fill="#ff2bda"/><rect x="1447" width="8" height="8" fill="#ff25cc"/><rect x="1454" width="8" height="8" fill="#ff20bf"/><rect x="1461" width="8" height="8" fill="#ff1cb4"/><rect x="1468" width="8" height="8" fill="#ff18a9"/><rect x="1475" width="8" height="8" fill="#ff149f"/><rect x="1482" width="8" height="8" fill="#ff1096"/><rect x="1489" width="8" height="8" fill="#ff0d8e"/><rect x="1496" width="8" height="8" fill="#ff0a86"/><rect x="1503" width="8" height="8" fill="#ff077f"/><rect x="1510" width="8" height="8" fill="#ff0478"/><rect x="1517" width="8" height="8" fill="#ff0271"/><rect x="1524" width="8" height="8" fill="#ff006c"/><rect x="1531" width="8" height="8" fill="#ff0066"/><rect x="1538" width="8" height="8" fill="#ff0061"/><rect x="1545" width="8" height="8" fill="#ff005c"/><rect x="1552" width="8" height="8" fill="#ff0057"/><rect x="1559" width="8" height="8" fill="#ff0052"/><rect x="1566" width="8" height="8" fill="#ff004e"/><rect x="1573" width="8" height="8" fill="#ff004a"/><rect x="1580" width="8" height="8" fill="#ff0046"/><rect x="1587" width="8" height="8" fill="#ff0043"/><rect x="1594" width="8" height="8" fill="#ff003f"/><rect x="1601" width="8" height="8" fill="#ff003c"/><rect x="1608" width="8" height="8" fill="#ff0039"/><rect x="1615" width="8" height="8" fill="#ff0036"/><rect x="1622" width="8" height="8" fill="#ff0033"/><rect x="1629" width="8" height="8" fill="#ff0030"/><rect x="1636" width="8" height="8" fill="#ff002d"/><rect x="1643" width="8" height="8" fill="#ff002b"/><rect x="1650" width="8" height="8" fill="#ff0028"/><rect x="1657" width="8" height="8" fill="#ff0026"/><rect x="1664" width="8" height="8" fill="#ff0024"/><rect x="1671" width="8" height="8" fill="#ff0022"/><rect x="1678" width="8" height="8" fill="#ff001f"/></g><g transform="translate(0,544)"><rect x="1202" width="8" height="8" fill="#0070ff"/><rect x="1209" width="8" height="8" fill="#006fff"/><rect x="1216" width="8" height="8" fill="#006dff"/><rect x="1223" width="8" height="8" fill="#006cff"/><rect x="1230" width="8" height="8" fill="#006aff"/><rect x="1237" width="8" height="8" fill="#0069ff"/><rect x="1244" width="8" height="8" fill="#0067ff"/><rect x="1251" width="8" height="8" fill="#0066ff"/><rect x="1258" width="8" height="8" fill="#0064ff"/><rect x="1265" width="8" height="8" fill="#0063ff"/><rect x="1272" width="8" height="8" fill="#0061ff"/><rect x="1279" width="8" height="8" fill="#005fff"/><rect x="1286" width="8" height="8" fill="#005dff"/><rect x="1293" width="8" height="8" fill="#005bff"/><rect x="1300" width="8" height="8" fill="#085aff"/><rect x="1307" width="8" height="8" fill="#1358ff"/><rect x="1314" width="8" height="8" fill="#1e56ff"/><rect x="1321" width="8" height="8" fill="#2954ff"/><rect x="1328" width="8" height="8" fill="#3551ff"/><rect x="1335" width="8" height="8" fill="#414fff"/><rect x="1342" width="8" height="8" fill="#4d4dff"/><rect x="1349" width="8" height="8" fill="#5a4bff"/><rect x="1356" width="8" height="8" fill="#6748ff"/><rect x="1363" width="8" height="8" fill="#7446ff"/><rect x="1370" width="8" height="8" fill="#8244ff"/><rect x="1377" width="8" height="8" fill="#9041ff"/><rect x="1384" width="8" height="8" fill="#9f3eff"/><rect x="1391" width="8" height="8" fill="#ae3cff"/><rect x="1398" width="8" height="8" fill="#bd39ff"/><rect x="1405" width="8" height="8" fill="#cd36ff"/><rect x="1412" width="8" height="8" fill="#de33ff"/><rect x="1419" width="8" height="8" fill="#ef30ff"/><rect x="1426" width="8" height="8" fill="#ff2cfd"/><rect x="1433" width="8" height="8" fill="#ff26ec"/><rect x="1440" width="8" height="8" fill="#ff21dd"/><rect x="1447" width="8" height="8" fill="#ff1ccf"/><rect x="1454" width="8" height="8" fill="#ff17c2"/><rect x="1461" width="8" height="8" fill="#ff13b7"/><rect x="1468" width="8" height="8" fill="#ff0fac"/><rect x="1475" width="8" height="8" fill="#ff0ca2"/><rect x="1482" width="8" height="8" fill="#ff0999"/><rect x="1489" width="8" height="8" fill="#ff0691"/><rect x="1496" width="8" height="8" fill="#ff0389"/><rect x="1503" width="8" height="8" fill="#ff0082"/><rect x="1510" width="8" height="8" fill="#ff007b"/><rect x="1517" width="8" height="8" fill="#ff0074"/><rect x="1524" width="8" height="8" fill="#ff006e"/><rect x="1531" width="8" height="8" fill="#ff0069"/><rect x="1538" width="8" height="8" fill="#ff0063"/><rect x="1545" width="8" height="8" fill="#ff005e"/><rect x="1552" width="8" height="8" fill="#ff005a"/><rect x="1559" width="8" height="8" fill="#ff0055"/><rect x="1566" width="8" height="8" fill="#ff0051"/><rect x="1573" width="8" height="8" fill="#ff004d"/><rect x="1580" width="8" height="8" fill="#ff0049"/><rect x="1587" width="8" height="8" fill="#ff0045"/><rect x="1594" width="8" height="8" fill="#ff0042"/><rect x="1601" width="8" height="8" fill="#ff003e"/><rect x="1608" width="8" height="8" fill="#ff003b"/><rect x="1615" width="8" height="8" fill="#ff0038"/><rect x="1622" width="8" height="8" fill="#ff0035"/><rect x="1629" width="8" height="8" fill="#ff0032"/><rect x="1636" width="8" height="8" fill="#ff0030"/><rect x="1643" width="8" height="8" fill="#ff002d"/><rect x="1650" width="8" height="8" fill="#ff002b"/><rect x="1657" width="8" height="8" fill="#ff0028"/></g><g transform="translate(0,551)"><rect x="1202" width="8" height="8" fill="#0068ff"/><rect x="1209" width="8" height="8" fill="#0066ff"/><rect x="1216" width="8" height="8" fill="#0065ff"/><rect x="1223" width="8" height="8" fill="#0063ff"/><rect x="1230" width="8" height="8" fill="#0062ff"/><rect x="1237" width="8" height="8" fill="#0060ff"/><rect x="1244" width="8" height="8" fill="#005eff"/><rect x="1251" width="8" height="8" fill="#005dff"/><rect x="1258" width="8" height="8" fill="#005bff"/><rect x="1265" width="8" height="8" fill="#0059ff"/><rect x="1272" width="8" height="8" fill="#0057ff"/><rect x="1279" width="8" height="8" fill="#0056ff"/><rect x="1286" width="8" height="8" fill="#0054ff"/><rect x="1293" width="8" height="8" fill="#0052ff"/><rect x="1300" width="8" height="8" fill="#0a50ff"/><rect x="1307" width="8" height="8" fill="#154eff"/><rect x="1314" width="8" height="8" fill="#204cff"/><rect x="1321" width="8" height="8" fill="#2b4aff"/><rect x="1328" width="8" height="8" fill="#3647ff"/><rect x="1335" width="8" height="8" fill="#4245ff"/><rect x="1342" width="8" height="8" fill="#4e43ff"/><rect x="1349" width="8" height="8" fill="#5a40ff"/><rect x="1356" width="8" height="8" fill="#673eff"/><rect x="1363" width="8" height="8" fill="#743bff"/><rect x="1370" width="8" height="8" fill="#8239ff"/><rect x="1377" width="8" height="8" fill="#9036ff"/><rect x="1384" width="8" height="8" fill="#9e33ff"/><rect x="1391" width="8" height="8" fill="#ad31ff"/><rect x="1398" width="8" height="8" fill="#bc2eff"/><rect x="1405" width="8" height="8" fill="#cc2bff"/><rect x="1412" width="8" height="8" fill="#dc27ff"/><rect x="1419" width="8" height="8" fill="#ed24ff"/><rect x="1426" width="8" height="8" fill="#fe21ff"/><rect x="1433" width="8" height="8" fill="#ff1cef"/><rect x="1440" width="8" height="8" fill="#ff17e0"/><rect x="1447" width="8" height="8" fill="#ff12d2"/><rect x="1454" width="8" height="8" fill="#ff0ec6"/><rect x="1461" width="8" height="8" fill="#ff0bba"/><rect x="1468" width="8" height="8" fill="#ff07af"/><rect x="1475" width="8" height="8" fill="#ff04a5"/><rect x="1482" width="8" height="8" fill="#ff019c"/><rect x="1489" width="8" height="8" fill="#ff0094"/><rect x="1496" width="8" height="8" fill="#ff008c"/><rect x="1503" width="8" height="8" fill="#ff0085"/><rect x="1510" width="8" height="8" fill="#ff007e"/><rect x="1517" width="8" height="8" fill="#ff0077"/><rect x="1524" width="8" height="8" fill="#ff0071"/><rect x="1531" width="8" height="8" fill="#ff006b"/><rect x="1538" width="8" height="8" fill="#ff0066"/><rect x="1545" width="8" height="8" fill="#ff0061"/><rect x="1552" width="8" height="8" fill="#ff005c"/><rect x="1559" width="8" height="8" fill="#ff0058"/><rect x="1566" width="8" height="8" fill="#ff0053"/><rect x="1573" width="8" height="8" fill="#ff004f"/><rect x="1580" width="8" height="8" fill="#ff004b"/><rect x="1587" width="8" height="8" fill="#ff0048"/><rect x="1594" width="8" height="8" fill="#ff0044"/><rect x="1601" width="8" height="8" fill="#ff0041"/><rect x="1608" width="8" height="8" fill="#ff003d"/><rect x="1615" width="8" height="8" fill="#ff003a"/><rect x="1622" width="8" height="8" fill="#ff0037"/><rect x="1629" width="8" height="8" fill="#ff0035"/><rect x="1636" width="8" height="8" fill="#ff0032"/><rect x="1643" width="8" height="8" fill="#ff002f"/></g><g transform="translate(0,558)"><rect x="1209" width="8" height="8" fill="#005eff"/><rect x="1216" width="8" height="8" fill="#005cff"/><rect x="1223" width="8" height="8" fill="#005aff"/><rect x="1230" width="8" height="8" fill="#0059ff"/><rect x="1237" width="8" height="8" fill="#0057ff"/><rect x="1244" width="8" height="8" fill="#0055ff"/><rect x="1251" width="8" height="8" fill="#0054ff"/><rect x="1258" width="8" height="8" fill="#0052ff"/><rect x="1265" width="8" height="8" fill="#0050ff"/><rect x="1272" width="8" height="8" fill="#004eff"/><rect x="1279" width="8" height="8" fill="#004cff"/><rect x="1286" width="8" height="8" fill="#004aff"/><rect x="1293" width="8" height="8" fill="#0348ff"/><rect x="1300" width="8" height="8" fill="#0d46ff"/><rect x="1307" width="8" height="8" fill="#1744ff"/><rect x="1314" width="8" height="8" fill="#2242ff"/><rect x="1321" width="8" height="8" fill="#2d40ff"/><rect x="1328" width="8" height="8" fill="#383eff"/><rect x="1335" width="8" height="8" fill="#433bff"/><rect x="1342" width="8" height="8" fill="#4f39ff"/><rect x="1349" width="8" height="8" fill="#5b36ff"/><rect x="1356" width="8" height="8" fill="#6834ff"/><rect x="1363" width="8" height="8" fill="#7531ff"/><rect x="1370" width="8" height="8" fill="#822eff"/><rect x="1377" width="8" height="8" fill="#8f2cff"/><rect x="1384" width="8" height="8" fill="#9d29ff"/><rect x="1391" width="8" height="8" fill="#ac26ff"/><rect x="1398" width="8" height="8" fill="#bb23ff"/><rect x="1405" width="8" height="8" fill="#ca20ff"/><rect x="1412" width="8" height="8" fill="#da1dff"/><rect x="1419" width="8" height="8" fill="#ea19ff"/><rect x="1426" width="8" height="8" fill="#fb16ff"/><rect x="1433" width="8" height="8" fill="#ff11f2"/><rect x="1440" width="8" height="8" fill="#ff0de3"/><rect x="1447" width="8" height="8" fill="#ff09d5"/><rect x="1454" width="8" height="8" fill="#ff05c9"/><rect x="1461" width="8" height="8" fill="#ff02bd"/><rect x="1468" width="8" height="8" fill="#ff00b2"/><rect x="1475" width="8" height="8" fill="#ff00a9"/><rect x="1482" width="8" height="8" fill="#ff009f"/><rect x="1489" width="8" height="8" fill="#ff0097"/><rect x="1496" width="8" height="8" fill="#ff008f"/><rect x="1503" width="8" height="8" fill="#ff0088"/><rect x="1510" width="8" height="8" fill="#ff0081"/><rect x="1517" width="8" height="8" fill="#ff007a"/><rect x="1524" width="8" height="8" fill="#ff0074"/><rect x="1531" width="8" height="8" fill="#ff006e"/><rect x="1538" width="8" height="8" fill="#ff0069"/><rect x="1545" width="8" height="8" fill="#ff0064"/><rect x="1552" width="8" height="8" fill="#ff005f"/><rect x="1559" width="8" height="8" fill="#ff005a"/><rect x="1566" width="8" height="8" fill="#ff0056"/><rect x="1573" width="8" height="8" fill="#ff0052"/><rect x="1580" width="8" height="8" fill="#ff004e"/><rect x="1587" width="8" height="8" fill="#ff004a"/><rect x="1594" width="8" height="8" fill="#ff0046"/><rect x="1601" width="8" height="8" fill="#ff0043"/><rect x="1608" width="8" height="8" fill="#ff0040"/><rect x="1615" width="8" height="8" fill="#ff003d"/><rect x="1622" width="8" height="8" fill="#ff003a"/></g><g transform="translate(0,565)"><rect x="1209" width="8" height="8" fill="#0055ff"/><rect x="1216" width="8" height="8" fill="#0054ff"/><rect x="1223" width="8" height="8" fill="#0052ff"/><rect x="1230" width="8" height="8" fill="#0050ff"/><rect x="1237" width="8" height="8" fill="#004fff"/><rect x="1244" width="8" height="8" fill="#004dff"/><rect x="1251" width="8" height="8" fill="#004bff"/><rect x="1258" width="8" height="8" fill="#0049ff"/><rect x="1265" width="8" height="8" fill="#0047ff"/><rect x="1272" width="8" height="8" fill="#0045ff"/><rect x="1279" width="8" height="8" fill="#0043ff"/><rect x="1286" width="8" height="8" fill="#0041ff"/><rect x="1293" width="8" height="8" fill="#053fff"/><rect x="1300" width="8" height="8" fill="#0f3dff"/><rect x="1307" width="8" height="8" fill="#193bff"/><rect x="1314" width="8" height="8" fill="#2439ff"/><rect x="1321" width="8" height="8" fill="#2e36ff"/><rect x="1328" width="8" height="8" fill="#3934ff"/><rect x="1335" width="8" height="8" fill="#4532ff"/><rect x="1342" width="8" height="8" fill="#502fff"/><rect x="1349" width="8" height="8" fill="#5c2dff"/><rect x="1356" width="8" height="8" fill="#682aff"/><rect x="1363" width="8" height="8" fill="#7527ff"/><rect x="1370" width="8" height="8" fill="#8225ff"/><rect x="1377" width="8" height="8" fill="#8f22ff"/><rect x="1384" width="8" height="8" fill="#9d1fff"/><rect x="1391" width="8" height="8" fill="#ab1cff"/><rect x="1398" width="8" height="8" fill="#b919ff"/><rect x="1405" width="8" height="8" fill="#c815ff"/><rect x="1412" width="8" height="8" fill="#d812ff"/><rect x="1419" width="8" height="8" fill="#e80fff"/><rect x="1426" width="8" height="8" fill="#f80bff"/><rect x="1433" width="8" height="8" fill="#ff07f5"/><rect x="1440" width="8" height="8" fill="#ff04e6"/><rect x="1447" width="8" height="8" fill="#ff00d8"/><rect x="1454" width="8" height="8" fill="#ff00cc"/><rect x="1461" width="8" height="8" fill="#ff00c0"/><rect x="1468" width="8" height="8" fill="#ff00b5"/><rect x="1475" width="8" height="8" fill="#ff00ab"/><rect x="1482" width="8" height="8" fill="#ff00a2"/><rect x="1489" width="8" height="8" fill="#ff009a"/><rect x="1496" width="8" height="8" fill="#ff0092"/><rect x="1503" width="8" height="8" fill="#ff008a"/><rect x="1510" width="8" height="8" fill="#ff0083"/><rect x="1517" width="8" height="8" fill="#ff007d"/><rect x="1524" width="8" height="8" fill="#ff0077"/><rect x="1531" width="8" height="8" fill="#ff0071"/><rect x="1538" width="8" height="8" fill="#ff006b"/><rect x="1545" width="8" height="8" fill="#ff0066"/><rect x="1552" width="8" height="8" fill="#ff0061"/><rect x="1559" width="8" height="8" fill="#ff005d"/><rect x="1566" width="8" height="8" fill="#ff0058"/><rect x="1573" width="8" height="8" fill="#ff0054"/><rect x="1580" width="8" height="8" fill="#ff0050"/><rect x="1587" width="8" height="8" fill="#ff004c"/><rect x="1594" width="8" height="8" fill="#ff0049"/><rect x="1601" width="8" height="8" fill="#ff0045"/></g><g transform="translate(0,572)"><rect x="1216" width="8" height="8" fill="#004cff"/><rect x="1223" width="8" height="8" fill="#004aff"/><rect x="1230" width="8" height="8" fill="#0048ff"/><rect x="1237" width="8" height="8" fill="#0047ff"/><rect x="1244" width="8" height="8" fill="#0045ff"/><rect x="1251" width="8" height="8" fill="#0043ff"/><rect x="1258" width="8" height="8" fill="#0041ff"/><rect x="1265" width="8" height="8" fill="#003fff"/><rect x="1272" width="8" height="8" fill="#003dff"/><rect x="1279" width="8" height="8" fill="#003bff"/><rect x="1286" width="8" height="8" fill="#0039ff"/><rect x="1293" width="8" height="8" fill="#0737ff"/><rect x="1300" width="8" height="8" fill="#1134ff"/><rect x="1307" width="8" height="8" fill="#1b32ff"/><rect x="1314" width="8" height="8" fill="#2530ff"/><rect x="1321" width="8" height="8" fill="#302eff"/><rect x="1328" width="8" height="8" fill="#3b2bff"/><rect x="1335" width="8" height="8" fill="#4629ff"/><rect x="1342" width="8" height="8" fill="#5126ff"/><rect x="1349" width="8" height="8" fill="#5d23ff"/><rect x="1356" width="8" height="8" fill="#6921ff"/><rect x="1363" width="8" height="8" fill="#751eff"/><rect x="1370" width="8" height="8" fill="#821bff"/><rect x="1377" width="8" height="8" fill="#8f18ff"/><rect x="1384" width="8" height="8" fill="#9c15ff"/><rect x="1391" width="8" height="8" fill="#aa12ff"/><rect x="1398" width="8" height="8" fill="#b80fff"/><rect x="1405" width="8" height="8" fill="#c70cff"/><rect x="1412" width="8" height="8" fill="#d608ff"/><rect x="1419" width="8" height="8" fill="#e505ff"/><rect x="1426" width="8" height="8" fill="#f501ff"/><rect x="1433" width="8" height="8" fill="#ff00f8"/><rect x="1440" width="8" height="8" fill="#ff00e9"/><rect x="1447" width="8" height="8" fill="#ff00db"/><rect x="1454" width="8" height="8" fill="#ff00cf"/><rect x="1461" width="8" height="8" fill="#ff00c3"/><rect x="1468" width="8" height="8" fill="#ff00b8"/><rect x="1475" width="8" height="8" fill="#ff00ae"/><rect x="1482" width="8" height="8" fill="#ff00a5"/><rect x="1489" width="8" height="8" fill="#ff009d"/><rect x="1496" width="8" height="8" fill="#ff0095"/><rect x="1503" width="8" height="8" fill="#ff008d"/><rect x="1510" width="8" height="8" fill="#ff0086"/><rect x="1517" width="8" height="8" fill="#ff0080"/><rect x="1524" width="8" height="8" fill="#ff0079"/><rect x="1531" width="8" height="8" fill="#ff0074"/><rect x="1538" width="8" height="8" fill="#ff006e"/><rect x="1545" width="8" height="8" fill="#ff0069"/><rect x="1552" width="8" height="8" fill="#ff0064"/><rect x="1559" width="8" height="8" fill="#ff005f"/><rect x="1566" width="8" height="8" fill="#ff005b"/><rect x="1573" width="8" height="8" fill="#ff0057"/><rect x="1580" width="8" height="8" fill="#ff0053"/></g><g transform="translate(0,579)"><rect x="1216" width="8" height="8" fill="#0044ff"/><rect x="1223" width="8" height="8" fill="#0042ff"/><rect x="1230" width="8" height="8" fill="#0040ff"/><rect x="1237" width="8" height="8" fill="#003fff"/><rect x="1244" width="8" height="8" fill="#003dff"/><rect x="1251" width="8" height="8" fill="#003bff"/><rect x="1258" width="8" height="8" fill="#0039ff"/><rect x="1265" width="8" height="8" fill="#0037ff"/><rect x="1272" width="8" height="8" fill="#0035ff"/><rect x="1279" width="8" height="8" fill="#0033ff"/><rect x="1286" width="8" height="8" fill="#0030ff"/><rect x="1293" width="8" height="8" fill="#092eff"/><rect x="1300" width="8" height="8" fill="#132cff"/><rect x="1307" width="8" height="8" fill="#1d2aff"/><rect x="1314" width="8" height="8" fill="#2727ff"/><rect x="1321" width="8" height="8" fill="#3125ff"/><rect x="1328" width="8" height="8" fill="#3c22ff"/><rect x="1335" width="8" height="8" fill="#4720ff"/><rect x="1342" width="8" height="8" fill="#521dff"/><rect x="1349" width="8" height="8" fill="#5e1bff"/><rect x="1356" width="8" height="8" fill="#6918ff"/><rect x="1363" width="8" height="8" fill="#7515ff"/><rect x="1370" width="8" height="8" fill="#8212ff"/><rect x="1377" width="8" height="8" fill="#8f0fff"/><rect x="1384" width="8" height="8" fill="#9c0cff"/><rect x="1391" width="8" height="8" fill="#a909ff"/><rect x="1398" width="8" height="8" fill="#b706ff"/><rect x="1405" width="8" height="8" fill="#c502ff"/><rect x="1412" width="8" height="8" fill="#d400ff"/><rect x="1419" width="8" height="8" fill="#e300ff"/><rect x="1426" width="8" height="8" fill="#f300ff"/><rect x="1433" width="8" height="8" fill="#ff00fb"/><rect x="1440" width="8" height="8" fill="#ff00ec"/><rect x="1447" width="8" height="8" fill="#ff00de"/><rect x="1454" width="8" height="8" fill="#ff00d2"/><rect x="1461" width="8" height="8" fill="#ff00c6"/><rect x="1468" width="8" height="8" fill="#ff00bb"/><rect x="1475" width="8" height="8" fill="#ff00b1"/><rect x="1482" width="8" height="8" fill="#ff00a8"/><rect x="1489" width="8" height="8" fill="#ff009f"/><rect x="1496" width="8" height="8" fill="#ff0097"/><rect x="1503" width="8" height="8" fill="#ff0090"/><rect x="1510" width="8" height="8" fill="#ff0089"/><rect x="1517" width="8" height="8" fill="#ff0082"/><rect x="1524" width="8" height="8" fill="#ff007c"/><rect x="1531" width="8" height="8" fill="#ff0076"/><rect x="1538" width="8" height="8" fill="#ff0071"/><rect x="1545" width="8" height="8" fill="#ff006b"/><rect x="1552" width="8" height="8" fill="#ff0066"/><rect x="1559" width="8" height="8" fill="#ff0062"/></g><g transform="translate(0,586)"><rect x="1223" width="8" height="8" fill="#003bff"/><rect x="1230" width="8" height="8" fill="#0039ff"/><rect x="1237" width="8" height="8" fill="#0037ff"/><rect x="1244" width="8" height="8" fill="#0035ff"/><rect x="1251" width="8" height="8" fill="#0033ff"/><rect x="1258" width="8" height="8" fill="#0031ff"/><rect x="1265" width="8" height="8" fill="#002fff"/><rect x="1272" width="8" height="8" fill="#002dff"/><rect x="1279" width="8" height="8" fill="#002bff"/><rect x="1286" width="8" height="8" fill="#0228ff"/><rect x="1293" width="8" height="8" fill="#0b26ff"/><rect x="1300" width="8" height="8" fill="#1524ff"/><rect x="1307" width="8" height="8" fill="#1f21ff"/><rect x="1314" width="8" height="8" fill="#291fff"/><rect x="1321" width="8" height="8" fill="#331dff"/><rect x="1328" width="8" height="8" fill="#3d1aff"/><rect x="1335" width="8" height="8" fill="#4817ff"/><rect x="1342" width="8" height="8" fill="#5315ff"/><rect x="1349" width="8" height="8" fill="#5e12ff"/><rect x="1356" width="8" height="8" fill="#6a0fff"/><rect x="1363" width="8" height="8" fill="#760cff"/><rect x="1370" width="8" height="8" fill="#8209ff"/><rect x="1377" width="8" height="8" fill="#8e06ff"/><rect x="1384" width="8" height="8" fill="#9b03ff"/><rect x="1391" width="8" height="8" fill="#a800ff"/><rect x="1398" width="8" height="8" fill="#b600ff"/><rect x="1405" width="8" height="8" fill="#c400ff"/><rect x="1412" width="8" height="8" fill="#d200ff"/><rect x="1419" width="8" height="8" fill="#e100ff"/><rect x="1426" width="8" height="8" fill="#f000ff"/><rect x="1433" width="8" height="8" fill="#ff00fe"/><rect x="1440" width="8" height="8" fill="#ff00ef"/><rect x="1447" width="8" height="8" fill="#ff00e1"/><rect x="1454" width="8" height="8" fill="#ff00d4"/><rect x="1461" width="8" height="8" fill="#ff00c9"/><rect x="1468" width="8" height="8" fill="#ff00be"/><rect x="1475" width="8" height="8" fill="#ff00b4"/><rect x="1482" width="8" height="8" fill="#ff00ab"/><rect x="1489" width="8" height="8" fill="#ff00a2"/><rect x="1496" width="8" height="8" fill="#ff009a"/><rect x="1503" width="8" height="8" fill="#ff0093"/><rect x="1510" width="8" height="8" fill="#ff008c"/><rect x="1517" width="8" height="8" fill="#ff0085"/><rect x="1524" width="8" height="8" fill="#ff007f"/><rect x="1531" width="8" height="8" fill="#ff0079"/><rect x="1538" width="8" height="8" fill="#ff0073"/></g><g transform="translate(0,593)"><rect x="1223" width="8" height="8" fill="#0033ff"/><rect x="1230" width="8" height="8" fill="#0031ff"/><rect x="1237" width="8" height="8" fill="#002fff"/><rect x="1244" width="8" height="8" fill="#002dff"/><rect x="1251" width="8" height="8" fill="#002bff"/><rect x="1258" width="8" height="8" fill="#0029ff"/><rect x="1265" width="8" height="8" fill="#0027ff"/><rect x="1272" width="8" height="8" fill="#0025ff"/><rect x="1279" width="8" height="8" fill="#0023ff"/><rect x="1286" width="8" height="8" fill="#0421ff"/><rect x="1293" width="8" height="8" fill="#0d1eff"/><rect x="1300" width="8" height="8" fill="#171cff"/><rect x="1307" width="8" height="8" fill="#201aff"/><rect x="1314" width="8" height="8" fill="#2a17ff"/><rect x="1321" width="8" height="8" fill="#3415ff"/><rect x="1328" width="8" height="8" fill="#3e12ff"/><rect x="1335" width="8" height="8" fill="#490fff"/><rect x="1342" width="8" height="8" fill="#540dff"/><rect x="1349" width="8" height="8" fill="#5f0aff"/><rect x="1356" width="8" height="8" fill="#6a07ff"/><rect x="1363" width="8" height="8" fill="#7604ff"/><rect x="1370" width="8" height="8" fill="#8201ff"/><rect x="1377" width="8" height="8" fill="#8e00ff"/><rect x="1384" width="8" height="8" fill="#9b00ff"/><rect x="1391" width="8" height="8" fill="#a800ff"/><rect x="1398" width="8" height="8" fill="#b500ff"/><rect x="1405" width="8" height="8" fill="#c300ff"/><rect x="1412" width="8" height="8" fill="#d100ff"/><rect x="1419" width="8" height="8" fill="#df00ff"/><rect x="1426" width="8" height="8" fill="#ee00ff"/><rect x="1433" width="8" height="8" fill="#fd00ff"/><rect x="1440" width="8" height="8" fill="#ff00f2"/><rect x="1447" width="8" height="8" fill="#ff00e4"/><rect x="1454" width="8" height="8" fill="#ff00d7"/><rect x="1461" width="8" height="8" fill="#ff00cc"/><rect x="1468" width="8" height="8" fill="#ff00c1"/><rect x="1475" width="8" height="8" fill="#ff00b7"/><rect x="1482" width="8" height="8" fill="#ff00ae"/><rect x="1489" width="8" height="8" fill="#ff00a5"/><rect x="1496" width="8" height="8" fill="#ff009d"/><rect x="1503" width="8" height="8" fill="#ff0095"/><rect x="1510" width="8" height="8" fill="#ff008e"/><rect x="1517" width="8" height="8" fill="#ff0088"/><rect x="1524" width="8" height="8" fill="#ff0081"/></g><g transform="translate(0,600)"><rect x="1223" width="8" height="8" fill="#002cff"/><rect x="1230" width="8" height="8" fill="#002aff"/><rect x="1237" width="8" height="8" fill="#0028ff"/><rect x="1244" width="8" height="8" fill="#0026ff"/><rect x="1251" width="8" height="8" fill="#0024ff"/><rect x="1258" width="8" height="8" fill="#0022ff"/><rect x="1265" width="8" height="8" fill="#0020ff"/><rect x="1272" width="8" height="8" fill="#001eff"/><rect x="1279" width="8" height="8" fill="#001bff"/><rect x="1286" width="8" height="8" fill="#0619ff"/><rect x="1293" width="8" height="8" fill="#0f17ff"/><rect x="1300" width="8" height="8" fill="#1814ff"/><rect x="1307" width="8" height="8" fill="#2212ff"/><rect x="1314" width="8" height="8" fill="#2c0fff"/><rect x="1321" width="8" height="8" fill="#360dff"/><rect x="1328" width="8" height="8" fill="#400aff"/><rect x="1335" width="8" height="8" fill="#4a07ff"/><rect x="1342" width="8" height="8" fill="#5505ff"/><rect x="1349" width="8" height="8" fill="#6002ff"/><rect x="1356" width="8" height="8" fill="#6b00ff"/><rect x="1363" width="8" height="8" fill="#7600ff"/><rect x="1370" width="8" height="8" fill="#8200ff"/><rect x="1377" width="8" height="8" fill="#8e00ff"/><rect x="1384" width="8" height="8" fill="#9a00ff"/><rect x="1391" width="8" height="8" fill="#a700ff"/><rect x="1398" width="8" height="8" fill="#b400ff"/><rect x="1405" width="8" height="8" fill="#c100ff"/><rect x="1412" width="8" height="8" fill="#cf00ff"/><rect x="1419" width="8" height="8" fill="#dd00ff"/><rect x="1426" width="8" height="8" fill="#ec00ff"/><rect x="1433" width="8" height="8" fill="#fb00ff"/><rect x="1440" width="8" height="8" fill="#ff00f4"/><rect x="1447" width="8" height="8" fill="#ff00e7"/><rect x="1454" width="8" height="8" fill="#ff00da"/><rect x="1461" width="8" height="8" fill="#ff00ce"/><rect x="1468" width="8" height="8" fill="#ff00c4"/><rect x="1475" width="8" height="8" fill="#ff00ba"/><rect x="1482" width="8" height="8" fill="#ff00b0"/><rect x="1489" width="8" height="8" fill="#ff00a8"/><rect x="1496" width="8" height="8" fill="#ff00a0"/><rect x="1503" width="8" height="8" fill="#ff0098"/></g><g transform="translate(0,607)"><rect x="1230" width="8" height="8" fill="#0023ff"/><rect x="1237" width="8" height="8" fill="#0021ff"/><rect x="1244" width="8" height="8" fill="#001fff"/><rect x="1251" width="8" height="8" fill="#001dff"/><rect x="1258" width="8" height="8" fill="#001bff"/><rect x="1265" width="8" height="8" fill="#0019ff"/><rect x="1272" width="8" height="8" fill="#0016ff"/><rect x="1279" width="8" height="8" fill="#0014ff"/><rect x="1286" width="8" height="8" fill="#0812ff"/><rect x="1293" width="8" height="8" fill="#110fff"/><rect x="1300" width="8" height="8" fill="#1a0dff"/><rect x="1307" width="8" height="8" fill="#240aff"/><rect x="1314" width="8" height="8" fill="#2d08ff"/><rect x="1321" width="8" height="8" fill="#3705ff"/><rect x="1328" width="8" height="8" fill="#4103ff"/><rect x="1335" width="8" height="8" fill="#4b00ff"/><rect x="1342" width="8" height="8" fill="#5500ff"/><rect x="1349" width="8" height="8" fill="#6000ff"/><rect x="1356" width="8" height="8" fill="#6b00ff"/><rect x="1363" width="8" height="8" fill="#7600ff"/><rect x="1370" width="8" height="8" fill="#8200ff"/><rect x="1377" width="8" height="8" fill="#8e00ff"/><rect x="1384" width="8" height="8" fill="#9a00ff"/><rect x="1391" width="8" height="8" fill="#a600ff"/><rect x="1398" width="8" height="8" fill="#b300ff"/><rect x="1405" width="8" height="8" fill="#c000ff"/><rect x="1412" width="8" height="8" fill="#ce00ff"/><rect x="1419" width="8" height="8" fill="#db00ff"/><rect x="1426" width="8" height="8" fill="#ea00ff"/><rect x="1433" width="8" height="8" fill="#f800ff"/><rect x="1440" width="8" height="8" fill="#ff00f7"/><rect x="1447" width="8" height="8" fill="#ff00e9"/><rect x="1454" width="8" height="8" fill="#ff00dd"/><rect x="1461" width="8" height="8" fill="#ff00d1"/><rect x="1468" width="8" height="8" fill="#ff00c6"/><rect x="1475" width="8" height="8" fill="#ff00bc"/><rect x="1482" width="8" height="8" fill="#ff00b3"/></g><g transform="translate(0,614)"><rect x="1237" width="8" height="8" fill="#001aff"/><rect x="1244" width="8" height="8" fill="#0018ff"/><rect x="1251" width="8" height="8" fill="#0016ff"/><rect x="1258" width="8" height="8" fill="#0014ff"/><rect x="1265" width="8" height="8" fill="#0012ff"/><rect x="1272" width="8" height="8" fill="#000fff"/><rect x="1279" width="8" height="8" fill="#020dff"/><rect x="1286" width="8" height="8" fill="#0a0bff"/><rect x="1293" width="8" height="8" fill="#1308ff"/><rect x="1300" width="8" height="8" fill="#1c06ff"/><rect x="1307" width="8" height="8" fill="#2503ff"/><rect x="1314" width="8" height="8" fill="#2e01ff"/><rect x="1321" width="8" height="8" fill="#3800ff"/><rect x="1328" width="8" height="8" fill="#4200ff"/><rect x="1335" width="8" height="8" fill="#4c00ff"/><rect x="1342" width="8" height="8" fill="#5600ff"/><rect x="1349" width="8" height="8" fill="#6100ff"/><rect x="1356" width="8" height="8" fill="#6c00ff"/><rect x="1363" width="8" height="8" fill="#7700ff"/><rect x="1370" width="8" height="8" fill="#8200ff"/><rect x="1377" width="8" height="8" fill="#8d00ff"/><rect x="1384" width="8" height="8" fill="#9900ff"/><rect x="1391" width="8" height="8" fill="#a600ff"/><rect x="1398" width="8" height="8" fill="#b200ff"/><rect x="1405" width="8" height="8" fill="#bf00ff"/><rect x="1412" width="8" height="8" fill="#cc00ff"/><rect x="1419" width="8" height="8" fill="#da00ff"/><rect x="1426" width="8" height="8" fill="#e700ff"/><rect x="1433" width="8" height="8" fill="#f600ff"/><rect x="1440" width="8" height="8" fill="#ff00fa"/><rect x="1447" width="8" height="8" fill="#ff00ec"/><rect x="1454" width="8" height="8" fill="#ff00df"/><rect x="1461" width="8" height="8" fill="#ff00d4"/></g><g transform="translate(0,621)"><rect x="1237" width="8" height="8" fill="#0014ff"/><rect x="1244" width="8" height="8" fill="#0012ff"/><rect x="1251" width="8" height="8" fill="#0010ff"/><rect x="1258" width="8" height="8" fill="#000dff"/><rect x="1265" width="8" height="8" fill="#000bff"/><rect x="1272" width="8" height="8" fill="#0009ff"/><rect x="1279" width="8" height="8" fill="#0406ff"/><rect x="1286" width="8" height="8" fill="#0c04ff"/><rect x="1293" width="8" height="8" fill="#1501ff"/><rect x="1300" width="8" height="8" fill="#1e00ff"/><rect x="1307" width="8" height="8" fill="#2700ff"/><rect x="1314" width="8" height="8" fill="#3000ff"/><rect x="1321" width="8" height="8" fill="#3900ff"/><rect x="1328" width="8" height="8" fill="#4300ff"/><rect x="1335" width="8" height="8" fill="#4d00ff"/><rect x="1342" width="8" height="8" fill="#5700ff"/><rect x="1349" width="8" height="8" fill="#6100ff"/><rect x="1356" width="8" height="8" fill="#6c00ff"/><rect x="1363" width="8" height="8" fill="#7700ff"/><rect x="1370" width="8" height="8" fill="#8200ff"/><rect x="1377" width="8" height="8" fill="#8d00ff"/><rect x="1384" width="8" height="8" fill="#9900ff"/><rect x="1391" width="8" height="8" fill="#a500ff"/><rect x="1398" width="8" height="8" fill="#b100ff"/><rect x="1405" width="8" height="8" fill="#be00ff"/><rect x="1412" width="8" height="8" fill="#cb00ff"/><rect x="1419" width="8" height="8" fill="#d800ff"/><rect x="1426" width="8" height="8" fill="#e500ff"/><rect x="1433" width="8" height="8" fill="#f300ff"/><rect x="1440" width="8" height="8" fill="#ff00fc"/></g><g transform="translate(0,628)"><rect x="1244" width="8" height="8" fill="#000bff"/><rect x="1251" width="8" height="8" fill="#0009ff"/><rect x="1258" width="8" height="8" fill="#0007ff"/><rect x="1265" width="8" height="8" fill="#0004ff"/><rect x="1272" width="8" height="8" fill="#0002ff"/><rect x="1279" width="8" height="8" fill="#0500ff"/><rect x="1286" width="8" height="8" fill="#0e00ff"/><rect x="1293" width="8" height="8" fill="#1600ff"/><rect x="1300" width="8" height="8" fill="#1f00ff"/><rect x="1307" width="8" height="8" fill="#2800ff"/><rect x="1314" width="8" height="8" fill="#3100ff"/><rect x="1321" width="8" height="8" fill="#3a00ff"/><rect x="1328" width="8" height="8" fill="#4400ff"/><rect x="1335" width="8" height="8" fill="#4e00ff"/><rect x="1342" width="8" height="8" fill="#5800ff"/><rect x="1349" width="8" height="8" fill="#6200ff"/><rect x="1356" width="8" height="8" fill="#6c00ff"/><rect x="1363" width="8" height="8" fill="#7700ff"/><rect x="1370" width="8" height="8" fill="#8200ff"/><rect x="1377" width="8" height="8" fill="#8d00ff"/><rect x="1384" width="8" height="8" fill="#9900ff"/><rect x="1391" width="8" height="8" fill="#a400ff"/><rect x="1398" width="8" height="8" fill="#b000ff"/><rect x="1405" width="8" height="8" fill="#bd00ff"/><rect x="1412" width="8" height="8" fill="#c900ff"/><rect x="1419" width="8" height="8" fill="#d600ff"/></g><g transform="translate(0,635)"><rect x="1244" width="8" height="8" fill="#0005ff"/><rect x="1251" width="8" height="8" fill="#0003ff"/><rect x="1258" width="8" height="8" fill="#0000ff"/><rect x="1265" width="8" height="8" fill="#0000ff"/><rect x="1272" width="8" height="8" fill="#0000ff"/><rect x="1279" width="8" height="8" fill="#0700ff"/><rect x="1286" width="8" height="8" fill="#1000ff"/><rect x="1293" width="8" height="8" fill="#1800ff"/><rect x="1300" width="8" height="8" fill="#2100ff"/><rect x="1307" width="8" height="8" fill="#2900ff"/><rect x="1314" width="8" height="8" fill="#3200ff"/><rect x="1321" width="8" height="8" fill="#3c00ff"/><rect x="1328" width="8" height="8" fill="#4500ff"/><rect x="1335" width="8" height="8" fill="#4f00ff"/><rect x="1342" width="8" height="8" fill="#5800ff"/><rect x="1349" width="8" height="8" fill="#6200ff"/><rect x="1356" width="8" height="8" fill="#6d00ff"/><rect x="1363" width="8" height="8" fill="#7700ff"/><rect x="1370" width="8" height="8" fill="#8200ff"/><rect x="1377" width="8" height="8" fill="#8d00ff"/><rect x="1384" width="8" height="8" fill="#9800ff"/><rect x="1391" width="8" height="8" fill="#a400ff"/><rect x="1398" width="8" height="8" fill="#af00ff"/><rect x="1405" width="8" height="8" fill="#bc00ff"/></g><g transform="translate(0,642)"><rect x="1251" width="8" height="8" fill="#0000ff"/><rect x="1258" width="8" height="8" fill="#0000ff"/><rect x="1265" width="8" height="8" fill="#0000ff"/><rect x="1272" width="8" height="8" fill="#0100ff"/><rect x="1279" width="8" height="8" fill="#0900ff"/><rect x="1286" width="8" height="8" fill="#1100ff"/><rect x="1293" width="8" height="8" fill="#1a00ff"/><rect x="1300" width="8" height="8" fill="#2200ff"/><rect x="1307" width="8" height="8" fill="#2b00ff"/><rect x="1314" width="8" height="8" fill="#3400ff"/><rect x="1321" width="8" height="8" fill="#3d00ff"/><rect x="1328" width="8" height="8" fill="#4600ff"/><rect x="1335" width="8" height="8" fill="#4f00ff"/><rect x="1342" width="8" height="8" fill="#5900ff"/><rect x="1349" width="8" height="8" fill="#6300ff"/><rect x="1356" width="8" height="8" fill="#6d00ff"/><rect x="1363" width="8" height="8" fill="#7700ff"/><rect x="1370" width="8" height="8" fill="#8200ff"/><rect x="1377" width="8" height="8" fill="#8d00ff"/><rect x="1384" width="8" height="8" fill="#9800ff"/></g><g transform="translate(0,649)"><rect x="1258" width="8" height="8" fill="#0000ff"/><rect x="1265" width="8" height="8" fill="#0000ff"/><rect x="1272" width="8" height="8" fill="#0300ff"/><rect x="1279" width="8" height="8" fill="#0b00ff"/><rect x="1286" width="8" height="8" fill="#1300ff"/><rect x="1293" width="8" height="8" fill="#1b00ff"/><rect x="1300" width="8" height="8" fill="#2400ff"/><rect x="1307" width="8" height="8" fill="#2c00ff"/><rect x="1314" width="8" height="8" fill="#3500ff"/><rect x="1321" width="8" height="8" fill="#3e00ff"/><rect x="1328" width="8" height="8" fill="#4700ff"/><rect x="1335" width="8" height="8" fill="#5000ff"/><rect x="1342" width="8" height="8" fill="#5a00ff"/><rect x="1349" width="8" height="8" fill="#6300ff"/><rect x="1356" width="8" height="8" fill="#6d00ff"/><rect x="1363" width="8" height="8" fill="#7800ff"/></g><g transform="translate(0,656)"><rect x="1265" width="8" height="8" fill="#0000ff"/><rect x="1272" width="8" height="8" fill="#0500ff"/><rect x="1279" width="8" height="8" fill="#0d00ff"/><rect x="1286" width="8" height="8" fill="#1500ff"/><rect x="1293" width="8" height="8" fill="#1d00ff"/><rect x="1300" width="8" height="8" fill="#2500ff"/><rect x="1307" width="8" height="8" fill="#2d00ff"/><rect x="1314" width="8" height="8" fill="#3600ff"/><rect x="1321" width="8" height="8" fill="#3f00ff"/><rect x="1328" width="8" height="8" fill="#4800ff"/><rect x="1335" width="8" height="8" fill="#5100ff"/><rect x="1342" width="8" height="8" fill="#5a00ff"/></g><g transform="translate(0,663)"><rect x="1279" width="8" height="8" fill="#0e00ff"/><rect x="1286" width="8" height="8" fill="#1600ff"/><rect x="1293" width="8" height="8" fill="#1e00ff"/><rect x="1300" width="8" height="8" fill="#2600ff"/><rect x="1307" width="8" height="8" fill="#2f00ff"/><rect x="1314" width="8" height="8" fill="#3700ff"/><rect x="1321" width="8" height="8" fill="#4000ff"/></g><g transform="translate(0,670)"><rect x="1286" width="8" height="8" fill="#1700ff"/><rect x="1293" width="8" height="8" fill="#1f00ff"/><rect x="1300" width="8" height="8" fill="#2700ff"/></g></g>
<path d="M1297.7 668.1 L1296.0 668.2 L1295.9 668.2 L1295.8 668.2 L1295.6 668.1 L1295.4 668.0 L1295.2 668.0 L1295.0 667.9 L1294.8 667.7 L1294.5 667.6 L1294.2 667.5 L1294.0 667.3 L1293.7 667.1 L1293.3 666.9 L1293.0 666.7 L1292.6 666.4 L1292.1 666.1 L1291.7 665.8 L1291.2 665.5 L1290.7 665.1 L1290.1 664.8 L1289.6 664.4 L1288.9 663.9 L1288.3 663.5 L1287.6 663.0 L1286.8 662.5 L1286.0 661.9 L1285.0 661.3 L1284.1 660.7 L1283.0 660.0 L1281.9 659.3 L1280.8 658.6 L1279.6 657.7 L1278.3 656.8 L1277.0 655.9 L1275.6 654.8 L1274.1 653.7 L1272.5 652.4 L1270.8 651.0 L1269.1 649.6 L1267.3 647.9 L1265.3 645.9 L1263.2 643.5 L1260.9 640.9 L1258.4 637.9 L1255.8 634.5 L1253.0 630.6 L1250.1 626.3 L1247.0 621.5 L1243.6 616.0 L1240.1 609.8 L1236.4 602.9 L1232.5 595.3 L1228.3 586.7 L1223.8 577.3 L1219.1 567.0 L1214.2 555.7 L1209.4 543.4 L1204.5 529.9 L1199.6 515.3 L1194.7 499.8 L1189.8 483.3 L1185.0 465.7 L1180.3 447.0 L1175.7 427.7 L1171.5 408.3 L1167.7 388.5 L1164.2 368.2 L1161.1 347.9 L1158.7 328.2 L1156.8 308.9 L1155.5 289.9 L1154.9 271.5 L1155.1 254.0 L1156.0 237.4 L1157.7 221.4 L1160.2 206.6 L1163.4 193.2 L1167.6 181.2 L1172.6 170.6 L1178.3 161.4 L1184.4 153.8 L1191.1 148.1 L1198.5 144.1 L1206.2 141.5 L1214.1 139.9 L1222.1 139.6 L1230.5 140.7 L1239.0 142.5 L1247.5 144.8 L1256.0 147.4 L1264.6 150.6 L1273.1 154.1 L1281.4 157.7 L1289.6 161.3 L1297.6 165.2 L1305.6 169.1 L1313.5 173.2 L1321.2 177.4 L1328.9 181.7 L1336.6 186.1 L1344.2 190.6 L1351.8 195.2 L1359.4 200.0 L1367.0 204.8 L1374.5 209.7 L1382.1 214.7 L1389.6 219.8 L1397.1 224.9 L1404.5 230.1 L1412.0 235.3 L1419.5 240.6 L1427.0 246.0 L1434.5 251.4 L1442.0 256.8 L1449.5 262.3 L1457.0 267.8 L1464.5 273.3 L1471.9 278.8 L1479.4 284.4 L1486.8 290.0 L1494.3 295.5 L1501.7 301.1 L1509.2 306.7 L1516.6 312.2 L1524.0 317.8 L1531.3 323.3 L1538.6 328.8 L1545.8 334.3 L1553.0 339.8 L1560.2 345.2 L1567.3 350.6 L1574.3 355.9 L1581.3 361.2 L1588.2 366.4 L1595.0 371.6 L1601.7 376.7 L1608.3 381.7 L1614.9 386.6 L1621.3 391.5 L1627.6 396.3 L1633.8 401.0 L1639.9 405.5 L1645.8 410.0 L1651.5 414.4 L1657.0 418.6 L1662.3 422.6 L1667.5 426.5 L1672.4 430.3 L1677.2 433.9 L1681.9 437.5 L1686.4 440.9 L1690.8 444.2 L1695.0 447.4 L1699.0 450.3 L1702.7 453.2 L1706.3 455.9 L1709.7 458.4 L1713.0 460.9 L1716.1 463.2 L1719.0 465.5 L1721.7 467.6 L1724.3 469.5 L1726.8 471.4 L1729.1 473.2 L1731.3 474.8 L1733.4 476.4 L1735.3 477.9 L1737.1 479.2 L1738.9 480.6 L1740.6 481.8 L1742.1 483.0 L1743.6 484.1 L1745.0 485.2 L1746.4 486.3 L1747.7 487.2 L1748.9 488.2 L1750.1 489.1 L1751.3 490.0 L1752.3 490.8 L1753.4 491.6 L1754.3 492.3 L1755.2 493.0 L1756.1 493.6 L1756.9 494.2 L1757.7 494.8 L1758.4 495.3 L1759.0 495.8 L1759.6 496.2 L1760.2 496.7 L1760.7 497.1 L1761.2 497.5 L1761.7 497.8 L1762.1 498.1 L1762.4 498.4 L1762.7 498.6 L1763.0 498.8 L1763.5 499.2 L1764.4 499.9 L1765.6 500.8 L1766.7 501.6 L1767.5 502.2Z M1721.6 467.4 L1373.9 231.6 L1277.5 633.1Z" fill="#000" fill-opacity="0.40" fill-rule="evenodd"/>
</g></g>
<rect x="1152.1" y="137.05" width="704.2" height="535.1500000000001" fill="none" stroke="#a2a2a2" stroke-width="1.8"/>
<line x1="1151.6" y1="673" x2="1151.6" y2="679" stroke="#e6e6e6" stroke-width="1.5" />
<text x="1151.6" y="695.8" font-size="15.5" fill="#d4d4d4" text-anchor="middle">0</text>
<line x1="1145" y1="672.5" x2="1151.2" y2="672.5" stroke="#d8d8d8" stroke-width="1.2" />
<text x="1144.2" y="678.7" font-size="15.5" fill="#d4d4d4" text-anchor="end">0</text>
<line x1="1235.4099999999999" y1="673" x2="1235.4099999999999" y2="679" stroke="#e6e6e6" stroke-width="1.5" />
<text x="1235.4099999999999" y="695.8" font-size="15.5" fill="#d4d4d4" text-anchor="middle">0,1</text>
<line x1="1145" y1="608.82" x2="1151.2" y2="608.82" stroke="#d8d8d8" stroke-width="1.2" />
<text x="1144.2" y="615.0200000000001" font-size="15.5" fill="#d4d4d4" text-anchor="end">0,1</text>
<line x1="1319.2199999999998" y1="673" x2="1319.2199999999998" y2="679" stroke="#e6e6e6" stroke-width="1.5" />
<text x="1319.2199999999998" y="695.8" font-size="15.5" fill="#d4d4d4" text-anchor="middle">0,2</text>
<line x1="1145" y1="545.14" x2="1151.2" y2="545.14" stroke="#d8d8d8" stroke-width="1.2" />
<text x="1144.2" y="551.34" font-size="15.5" fill="#d4d4d4" text-anchor="end">0,2</text>
<line x1="1403.03" y1="673" x2="1403.03" y2="679" stroke="#e6e6e6" stroke-width="1.5" />
<text x="1403.03" y="695.8" font-size="15.5" fill="#d4d4d4" text-anchor="middle">0,3</text>
<line x1="1145" y1="481.46000000000004" x2="1151.2" y2="481.46000000000004" stroke="#d8d8d8" stroke-width="1.2" />
<text x="1144.2" y="487.66" font-size="15.5" fill="#d4d4d4" text-anchor="end">0,3</text>
<line x1="1486.84" y1="673" x2="1486.84" y2="679" stroke="#e6e6e6" stroke-width="1.5" />
<text x="1486.84" y="695.8" font-size="15.5" fill="#d4d4d4" text-anchor="middle">0,4</text>
<line x1="1145" y1="417.78" x2="1151.2" y2="417.78" stroke="#d8d8d8" stroke-width="1.2" />
<text x="1144.2" y="423.97999999999996" font-size="15.5" fill="#d4d4d4" text-anchor="end">0,4</text>
<line x1="1570.6499999999999" y1="673" x2="1570.6499999999999" y2="679" stroke="#e6e6e6" stroke-width="1.5" />
<text x="1570.6499999999999" y="695.8" font-size="15.5" fill="#d4d4d4" text-anchor="middle">0,5</text>
<line x1="1145" y1="354.1" x2="1151.2" y2="354.1" stroke="#d8d8d8" stroke-width="1.2" />
<text x="1144.2" y="360.3" font-size="15.5" fill="#d4d4d4" text-anchor="end">0,5</text>
<line x1="1654.46" y1="673" x2="1654.46" y2="679" stroke="#e6e6e6" stroke-width="1.5" />
<text x="1654.46" y="695.8" font-size="15.5" fill="#d4d4d4" text-anchor="middle">0,6</text>
<line x1="1145" y1="290.42" x2="1151.2" y2="290.42" stroke="#d8d8d8" stroke-width="1.2" />
<text x="1144.2" y="296.62" font-size="15.5" fill="#d4d4d4" text-anchor="end">0,6</text>
<line x1="1738.27" y1="673" x2="1738.27" y2="679" stroke="#e6e6e6" stroke-width="1.5" />
<text x="1738.27" y="695.8" font-size="15.5" fill="#d4d4d4" text-anchor="middle">0,7</text>
<line x1="1145" y1="226.74000000000007" x2="1151.2" y2="226.74000000000007" stroke="#d8d8d8" stroke-width="1.2" />
<text x="1144.2" y="232.94000000000005" font-size="15.5" fill="#d4d4d4" text-anchor="end">0,7</text>
<line x1="1822.08" y1="673" x2="1822.08" y2="679" stroke="#e6e6e6" stroke-width="1.5" />
<text x="1822.08" y="695.8" font-size="15.5" fill="#d4d4d4" text-anchor="middle">0,8</text>
<line x1="1145" y1="163.06" x2="1151.2" y2="163.06" stroke="#d8d8d8" stroke-width="1.2" />
<text x="1144.2" y="169.26" font-size="15.5" fill="#d4d4d4" text-anchor="end">0,8</text>
<rect x="1366.2" y="224.2" width="14" height="14" fill="none" stroke="#ffffff" stroke-width="1.8" stroke-opacity="0.95"/>
<rect x="1373.8" y="270.5" width="14" height="14" fill="none" stroke="#ffffff" stroke-width="1.8" stroke-opacity="0.95"/>
<rect x="1381.2" y="316.0" width="14" height="14" fill="none" stroke="#ffffff" stroke-width="1.8" stroke-opacity="0.95"/>
<rect x="1390.0" y="361.8" width="14" height="14" fill="none" stroke="#ffffff" stroke-width="1.8" stroke-opacity="0.95"/>
<rect x="1398.0" y="409.8" width="14" height="14" fill="none" stroke="#ffffff" stroke-width="1.8" stroke-opacity="0.95"/>
<rect x="1512.0" y="322.0" width="14" height="14" fill="none" stroke="#ffffff" stroke-width="1.8" stroke-opacity="0.95"/>
<rect x="1489.2" y="348.8" width="14" height="14" fill="none" stroke="#ffffff" stroke-width="1.8" stroke-opacity="0.95"/>
<rect x="1469.0" y="376.8" width="14" height="14" fill="none" stroke="#ffffff" stroke-width="1.8" stroke-opacity="0.95"/>
<rect x="1446.8" y="404.0" width="14" height="14" fill="none" stroke="#ffffff" stroke-width="1.8" stroke-opacity="0.95"/>
<rect x="1427.5" y="427.5" width="14" height="14" fill="none" stroke="#ffffff" stroke-width="1.8" stroke-opacity="0.95"/>
<rect x="1312.2" y="452.5" width="14" height="14" fill="none" stroke="#ffffff" stroke-width="1.8" stroke-opacity="0.95"/>
<rect x="1331.0" y="453.8" width="14" height="14" fill="none" stroke="#ffffff" stroke-width="1.8" stroke-opacity="0.95"/>
<rect x="1349.0" y="453.8" width="14" height="14" fill="none" stroke="#ffffff" stroke-width="1.8" stroke-opacity="0.95"/>
<rect x="1368.0" y="453.8" width="14" height="14" fill="none" stroke="#ffffff" stroke-width="1.8" stroke-opacity="0.95"/>
<rect x="1387.2" y="453.8" width="14" height="14" fill="none" stroke="#ffffff" stroke-width="1.8" stroke-opacity="0.95"/>
<rect x="1715.0" y="460.0" width="14" height="14" fill="none" stroke="#ffffff" stroke-width="1.8" stroke-opacity="0.95"/>
<rect x="1654.0" y="460.0" width="14" height="14" fill="none" stroke="#ffffff" stroke-width="1.8" stroke-opacity="0.95"/>
<rect x="1593.0" y="458.5" width="14" height="14" fill="none" stroke="#ffffff" stroke-width="1.8" stroke-opacity="0.95"/>
<rect x="1526.2" y="457.0" width="14" height="14" fill="none" stroke="#ffffff" stroke-width="1.8" stroke-opacity="0.95"/>
<rect x="1467.5" y="455.5" width="14" height="14" fill="none" stroke="#ffffff" stroke-width="1.8" stroke-opacity="0.95"/>
<rect x="1426.0" y="568.0" width="14" height="14" fill="none" stroke="#ffffff" stroke-width="1.8" stroke-opacity="0.95"/>
<rect x="1421.5" y="546.0" width="14" height="14" fill="none" stroke="#ffffff" stroke-width="1.8" stroke-opacity="0.95"/>
<rect x="1418.5" y="522.0" width="14" height="14" fill="none" stroke="#ffffff" stroke-width="1.8" stroke-opacity="0.95"/>
<rect x="1414.0" y="500.0" width="14" height="14" fill="none" stroke="#ffffff" stroke-width="1.8" stroke-opacity="0.95"/>
<rect x="1409.2" y="476.0" width="14" height="14" fill="none" stroke="#ffffff" stroke-width="1.8" stroke-opacity="0.95"/>
<rect x="1269.2" y="626.0" width="14" height="14" fill="none" stroke="#ffffff" stroke-width="1.8" stroke-opacity="0.95"/>
<rect x="1297.0" y="592.0" width="14" height="14" fill="none" stroke="#ffffff" stroke-width="1.8" stroke-opacity="0.95"/>
<rect x="1324.0" y="558.0" width="14" height="14" fill="none" stroke="#ffffff" stroke-width="1.8" stroke-opacity="0.95"/>
<rect x="1352.0" y="523.8" width="14" height="14" fill="none" stroke="#ffffff" stroke-width="1.8" stroke-opacity="0.95"/>
<rect x="1380.0" y="488.0" width="14" height="14" fill="none" stroke="#ffffff" stroke-width="1.8" stroke-opacity="0.95"/>
<circle cx="1355.75" cy="213.25" r="4.6" fill="rgb(60, 170, 60)" fill-opacity="0.9" stroke="#101010" stroke-width="1.1"/>
<circle cx="1366" cy="263.75" r="4.6" fill="rgb(104, 172, 104)" fill-opacity="0.9" stroke="#101010" stroke-width="1.1"/>
<circle cx="1377.75" cy="314.25" r="4.6" fill="rgb(123, 173, 123)" fill-opacity="0.9" stroke="#101010" stroke-width="1.1"/>
<circle cx="1388.25" cy="361.75" r="4.6" fill="rgb(138, 174, 138)" fill-opacity="0.9" stroke="#101010" stroke-width="1.1"/>
<circle cx="1402" cy="410.75" r="4.6" fill="rgb(152, 174, 152)" fill-opacity="0.9" stroke="#101010" stroke-width="1.1"/>
<circle cx="1522.75" cy="331" r="4.6" fill="rgb(170, 170, 30)" fill-opacity="0.9" stroke="#101010" stroke-width="1.1"/>
<circle cx="1500.75" cy="356" r="4.6" fill="rgb(172, 172, 85)" fill-opacity="0.9" stroke="#101010" stroke-width="1.1"/>
<circle cx="1479" cy="382.5" r="4.6" fill="rgb(173, 173, 110)" fill-opacity="0.9" stroke="#101010" stroke-width="1.1"/>
<circle cx="1458" cy="408.25" r="4.6" fill="rgb(174, 174, 129)" fill-opacity="0.9" stroke="#101010" stroke-width="1.1"/>
<circle cx="1436" cy="433" r="4.6" fill="rgb(174, 174, 146)" fill-opacity="0.9" stroke="#101010" stroke-width="1.1"/>
<circle cx="1302.5" cy="456.5" r="4.6" fill="rgb(40, 180, 180)" fill-opacity="0.9" stroke="#101010" stroke-width="1.1"/>
<circle cx="1325" cy="458" r="4.6" fill="rgb(91, 178, 178)" fill-opacity="0.9" stroke="#101010" stroke-width="1.1"/>
<circle cx="1345.5" cy="458" r="4.6" fill="rgb(114, 177, 177)" fill-opacity="0.9" stroke="#101010" stroke-width="1.1"/>
<circle cx="1367.75" cy="459.25" r="4.6" fill="rgb(132, 177, 177)" fill-opacity="0.9" stroke="#101010" stroke-width="1.1"/>
<circle cx="1391.5" cy="459.25" r="4.6" fill="rgb(148, 176, 176)" fill-opacity="0.9" stroke="#101010" stroke-width="1.1"/>
<circle cx="1723" cy="468.25" r="4.6" fill="rgb(215, 20, 20)" fill-opacity="0.9" stroke="#101010" stroke-width="1.1"/>
<circle cx="1668.5" cy="468.25" r="4.6" fill="rgb(200, 79, 79)" fill-opacity="0.9" stroke="#101010" stroke-width="1.1"/>
<circle cx="1611.25" cy="466.75" r="4.6" fill="rgb(193, 105, 105)" fill-opacity="0.9" stroke="#101010" stroke-width="1.1"/>
<circle cx="1542.5" cy="464" r="4.6" fill="rgb(188, 126, 126)" fill-opacity="0.9" stroke="#101010" stroke-width="1.1"/>
<circle cx="1482" cy="462.5" r="4.6" fill="rgb(183, 144, 144)" fill-opacity="0.9" stroke="#101010" stroke-width="1.1"/>
<circle cx="1437.5" cy="573.75" r="4.6" fill="rgb(190, 50, 190)" fill-opacity="0.9" stroke="#101010" stroke-width="1.1"/>
<circle cx="1434.25" cy="551.5" r="4.6" fill="rgb(184, 97, 184)" fill-opacity="0.9" stroke="#101010" stroke-width="1.1"/>
<circle cx="1428.5" cy="529" r="4.6" fill="rgb(182, 119, 182)" fill-opacity="0.9" stroke="#101010" stroke-width="1.1"/>
<circle cx="1423.75" cy="507" r="4.6" fill="rgb(180, 135, 180)" fill-opacity="0.9" stroke="#101010" stroke-width="1.1"/>
<circle cx="1418" cy="483.5" r="4.6" fill="rgb(178, 150, 178)" fill-opacity="0.9" stroke="#101010" stroke-width="1.1"/>
<circle cx="1264" cy="637.5" r="4.6" fill="#1010a0" fill-opacity="0.6" stroke="#000040" stroke-width="1" stroke-opacity="0.6"/>
<circle cx="1292" cy="603.25" r="4.6" fill="rgb(104, 104, 190)" fill-opacity="0.9" stroke="#101010" stroke-width="1.1"/>
<circle cx="1325" cy="565" r="4.6" fill="rgb(123, 123, 186)" fill-opacity="0.9" stroke="#101010" stroke-width="1.1"/>
<circle cx="1351.5" cy="532" r="4.6" fill="rgb(138, 138, 183)" fill-opacity="0.9" stroke="#101010" stroke-width="1.1"/>
<circle cx="1384" cy="495" r="4.6" fill="rgb(152, 152, 180)" fill-opacity="0.9" stroke="#101010" stroke-width="1.1"/>
<rect x="1406.0" y="455.0" width="15" height="15" fill="none" stroke="#000000" stroke-width="2.2" stroke-opacity="1"/>
<circle cx="1413.5" cy="461.3" r="4.6" fill="#ffffff" stroke="#101010" stroke-width="1.1"/>
<rect x="1609.4" y="142.0" width="242.40000000000003" height="204.79999999999998" fill="none" stroke="#303030" stroke-width="2.8"/>
<rect x="1611.35" y="143.95" width="238.50000000000006" height="200.9" fill="#262626" stroke="#909090" stroke-width="1.3"/>
<g clip-path="url(#ic)"><g clip-path="url(#ihs)"><g filter="url(#bl2)"><rect x="1584" y="117" width="15" height="15" fill="#bcff00"/><rect x="1598" y="117" width="15" height="15" fill="#c0ff00"/><rect x="1612" y="117" width="15" height="15" fill="#c4ff00"/><rect x="1626" y="117" width="15" height="15" fill="#c8ff00"/><rect x="1640" y="117" width="15" height="15" fill="#ccff00"/><rect x="1654" y="117" width="15" height="15" fill="#d0ff00"/><rect x="1668" y="117" width="15" height="15" fill="#d4ff00"/><rect x="1682" y="117" width="15" height="15" fill="#d8ff00"/><rect x="1696" y="117" width="15" height="15" fill="#dcff00"/><rect x="1710" y="117" width="15" height="15" fill="#e0ff00"/><rect x="1724" y="117" width="15" height="15" fill="#e5ff00"/><rect x="1738" y="117" width="15" height="15" fill="#e9ff00"/><rect x="1752" y="117" width="15" height="15" fill="#edff00"/><rect x="1766" y="117" width="15" height="15" fill="#f1ff00"/><rect x="1780" y="117" width="15" height="15" fill="#f6ff00"/><rect x="1794" y="117" width="15" height="15" fill="#faff00"/><rect x="1808" y="117" width="15" height="15" fill="#ffff00"/><rect x="1822" y="117" width="15" height="15" fill="#fffb00"/><rect x="1836" y="117" width="15" height="15" fill="#fff700"/><rect x="1850" y="117" width="15" height="15" fill="#fff300"/><rect x="1864" y="117" width="15" height="15" fill="#ffef00"/><rect x="1584" y="131" width="15" height="15" fill="#bfff00"/><rect x="1598" y="131" width="15" height="15" fill="#c2ff00"/><rect x="1612" y="131" width="15" height="15" fill="#c6ff00"/><rect x="1626" y="131" width="15" height="15" fill="#caff00"/><rect x="1640" y="131" width="15" height="15" fill="#cfff00"/><rect x="1654" y="131" width="15" height="15" fill="#d3ff00"/><rect x="1668" y="131" width="15" height="15" fill="#d7ff00"/><rect x="1682" y="131" width="15" height="15" fill="#dbff00"/><rect x="1696" y="131" width="15" height="15" fill="#dfff00"/><rect x="1710" y="131" width="15" height="15" fill="#e3ff00"/><rect x="1724" y="131" width="15" height="15" fill="#e8ff00"/><rect x="1738" y="131" width="15" height="15" fill="#ecff00"/><rect x="1752" y="131" width="15" height="15" fill="#f0ff00"/><rect x="1766" y="131" width="15" height="15" fill="#f5ff00"/><rect x="1780" y="131" width="15" height="15" fill="#f9ff00"/><rect x="1794" y="131" width="15" height="15" fill="#fdff00"/><rect x="1808" y="131" width="15" height="15" fill="#fffc00"/><rect x="1822" y="131" width="15" height="15" fill="#fff800"/><rect x="1836" y="131" width="15" height="15" fill="#fff400"/><rect x="1850" y="131" width="15" height="15" fill="#fff000"/><rect x="1864" y="131" width="15" height="15" fill="#ffec00"/><rect x="1584" y="145" width="15" height="15" fill="#c1ff01"/><rect x="1598" y="145" width="15" height="15" fill="#c5ff00"/><rect x="1612" y="145" width="15" height="15" fill="#c9ff00"/><rect x="1626" y="145" width="15" height="15" fill="#cdff00"/><rect x="1640" y="145" width="15" height="15" fill="#d1ff00"/><rect x="1654" y="145" width="15" height="15" fill="#d5ff00"/><rect x="1668" y="145" width="15" height="15" fill="#daff00"/><rect x="1682" y="145" width="15" height="15" fill="#deff00"/><rect x="1696" y="145" width="15" height="15" fill="#e2ff00"/><rect x="1710" y="145" width="15" height="15" fill="#e6ff00"/><rect x="1724" y="145" width="15" height="15" fill="#ebff00"/><rect x="1738" y="145" width="15" height="15" fill="#efff00"/><rect x="1752" y="145" width="15" height="15" fill="#f3ff00"/><rect x="1766" y="145" width="15" height="15" fill="#f8ff00"/><rect x="1780" y="145" width="15" height="15" fill="#fcff00"/><rect x="1794" y="145" width="15" height="15" fill="#fffd00"/><rect x="1808" y="145" width="15" height="15" fill="#fff900"/><rect x="1822" y="145" width="15" height="15" fill="#fff500"/><rect x="1836" y="145" width="15" height="15" fill="#fff100"/><rect x="1850" y="145" width="15" height="15" fill="#ffed00"/><rect x="1864" y="145" width="15" height="15" fill="#ffe900"/><rect x="1584" y="159" width="15" height="15" fill="#c3ff02"/><rect x="1598" y="159" width="15" height="15" fill="#c8ff01"/><rect x="1612" y="159" width="15" height="15" fill="#ccff00"/><rect x="1626" y="159" width="15" height="15" fill="#d0ff00"/><rect x="1640" y="159" width="15" height="15" fill="#d4ff00"/><rect x="1654" y="159" width="15" height="15" fill="#d8ff00"/><rect x="1668" y="159" width="15" height="15" fill="#dcff00"/><rect x="1682" y="159" width="15" height="15" fill="#e1ff00"/><rect x="1696" y="159" width="15" height="15" fill="#e5ff00"/><rect x="1710" y="159" width="15" height="15" fill="#e9ff00"/><rect x="1724" y="159" width="15" height="15" fill="#eeff00"/><rect x="1738" y="159" width="15" height="15" fill="#f2ff00"/><rect x="1752" y="159" width="15" height="15" fill="#f6ff00"/><rect x="1766" y="159" width="15" height="15" fill="#fbff00"/><rect x="1780" y="159" width="15" height="15" fill="#ffff00"/><rect x="1794" y="159" width="15" height="15" fill="#fffa00"/><rect x="1808" y="159" width="15" height="15" fill="#fff600"/><rect x="1822" y="159" width="15" height="15" fill="#fff200"/><rect x="1836" y="159" width="15" height="15" fill="#ffee00"/><rect x="1850" y="159" width="15" height="15" fill="#ffea00"/><rect x="1864" y="159" width="15" height="15" fill="#ffe600"/><rect x="1584" y="173" width="15" height="15" fill="#c6ff04"/><rect x="1598" y="173" width="15" height="15" fill="#caff03"/><rect x="1612" y="173" width="15" height="15" fill="#ceff02"/><rect x="1626" y="173" width="15" height="15" fill="#d2ff01"/><rect x="1640" y="173" width="15" height="15" fill="#d7ff00"/><rect x="1654" y="173" width="15" height="15" fill="#dbff00"/><rect x="1668" y="173" width="15" height="15" fill="#dfff00"/><rect x="1682" y="173" width="15" height="15" fill="#e4ff00"/><rect x="1696" y="173" width="15" height="15" fill="#e8ff00"/><rect x="1710" y="173" width="15" height="15" fill="#ecff00"/><rect x="1724" y="173" width="15" height="15" fill="#f1ff00"/><rect x="1738" y="173" width="15" height="15" fill="#f5ff00"/><rect x="1752" y="173" width="15" height="15" fill="#faff00"/><rect x="1766" y="173" width="15" height="15" fill="#feff00"/><rect x="1780" y="173" width="15" height="15" fill="#fffb00"/><rect x="1794" y="173" width="15" height="15" fill="#fff700"/><rect x="1808" y="173" width="15" height="15" fill="#fff300"/><rect x="1822" y="173" width="15" height="15" fill="#ffef00"/><rect x="1836" y="173" width="15" height="15" fill="#ffeb00"/><rect x="1850" y="173" width="15" height="15" fill="#ffe700"/><rect x="1864" y="173" width="15" height="15" fill="#ffe300"/><rect x="1584" y="187" width="15" height="15" fill="#c9ff05"/><rect x="1598" y="187" width="15" height="15" fill="#cdff04"/><rect x="1612" y="187" width="15" height="15" fill="#d1ff03"/><rect x="1626" y="187" width="15" height="15" fill="#d5ff02"/><rect x="1640" y="187" width="15" height="15" fill="#daff01"/><rect x="1654" y="187" width="15" height="15" fill="#deff00"/><rect x="1668" y="187" width="15" height="15" fill="#e2ff00"/><rect x="1682" y="187" width="15" height="15" fill="#e6ff00"/><rect x="1696" y="187" width="15" height="15" fill="#ebff00"/><rect x="1710" y="187" width="15" height="15" fill="#efff00"/><rect x="1724" y="187" width="15" height="15" fill="#f4ff00"/><rect x="1738" y="187" width="15" height="15" fill="#f8ff00"/><rect x="1752" y="187" width="15" height="15" fill="#fdff00"/><rect x="1766" y="187" width="15" height="15" fill="#fffd00"/><rect x="1780" y="187" width="15" height="15" fill="#fff800"/><rect x="1794" y="187" width="15" height="15" fill="#fff400"/><rect x="1808" y="187" width="15" height="15" fill="#fff000"/><rect x="1822" y="187" width="15" height="15" fill="#ffec00"/><rect x="1836" y="187" width="15" height="15" fill="#ffe800"/><rect x="1850" y="187" width="15" height="15" fill="#ffe400"/><rect x="1864" y="187" width="15" height="15" fill="#ffe000"/><rect x="1584" y="201" width="15" height="15" fill="#cbff07"/><rect x="1598" y="201" width="15" height="15" fill="#d0ff06"/><rect x="1612" y="201" width="15" height="15" fill="#d4ff05"/><rect x="1626" y="201" width="15" height="15" fill="#d8ff04"/><rect x="1640" y="201" width="15" height="15" fill="#dcff03"/><rect x="1654" y="201" width="15" height="15" fill="#e1ff02"/><rect x="1668" y="201" width="15" height="15" fill="#e5ff00"/><rect x="1682" y="201" width="15" height="15" fill="#eaff00"/><rect x="1696" y="201" width="15" height="15" fill="#eeff00"/><rect x="1710" y="201" width="15" height="15" fill="#f2ff00"/><rect x="1724" y="201" width="15" height="15" fill="#f7ff00"/><rect x="1738" y="201" width="15" height="15" fill="#fcff00"/><rect x="1752" y="201" width="15" height="15" fill="#fffe00"/><rect x="1766" y="201" width="15" height="15" fill="#fff900"/><rect x="1780" y="201" width="15" height="15" fill="#fff500"/><rect x="1794" y="201" width="15" height="15" fill="#fff100"/><rect x="1808" y="201" width="15" height="15" fill="#ffed00"/><rect x="1822" y="201" width="15" height="15" fill="#ffe800"/><rect x="1836" y="201" width="15" height="15" fill="#ffe500"/><rect x="1850" y="201" width="15" height="15" fill="#ffe100"/><rect x="1864" y="201" width="15" height="15" fill="#ffdd00"/><rect x="1584" y="215" width="15" height="15" fill="#ceff08"/><rect x="1598" y="215" width="15" height="15" fill="#d2ff07"/><rect x="1612" y="215" width="15" height="15" fill="#d7ff06"/><rect x="1626" y="215" width="15" height="15" fill="#dbff05"/><rect x="1640" y="215" width="15" height="15" fill="#dfff04"/><rect x="1654" y="215" width="15" height="15" fill="#e4ff03"/><rect x="1668" y="215" width="15" height="15" fill="#e8ff02"/><rect x="1682" y="215" width="15" height="15" fill="#edff01"/><rect x="1696" y="215" width="15" height="15" fill="#f1ff00"/><rect x="1710" y="215" width="15" height="15" fill="#f6ff00"/><rect x="1724" y="215" width="15" height="15" fill="#faff00"/><rect x="1738" y="215" width="15" height="15" fill="#ffff00"/><rect x="1752" y="215" width="15" height="15" fill="#fffb00"/><rect x="1766" y="215" width="15" height="15" fill="#fff600"/><rect x="1780" y="215" width="15" height="15" fill="#fff200"/><rect x="1794" y="215" width="15" height="15" fill="#ffee00"/><rect x="1808" y="215" width="15" height="15" fill="#ffe900"/><rect x="1822" y="215" width="15" height="15" fill="#ffe500"/><rect x="1836" y="215" width="15" height="15" fill="#ffe200"/><rect x="1850" y="215" width="15" height="15" fill="#ffde00"/><rect x="1864" y="215" width="15" height="15" fill="#ffda00"/><rect x="1584" y="229" width="15" height="15" fill="#d1ff0a"/><rect x="1598" y="229" width="15" height="15" fill="#d5ff09"/><rect x="1612" y="229" width="15" height="15" fill="#d9ff08"/><rect x="1626" y="229" width="15" height="15" fill="#deff07"/><rect x="1640" y="229" width="15" height="15" fill="#e2ff06"/><rect x="1654" y="229" width="15" height="15" fill="#e7ff05"/><rect x="1668" y="229" width="15" height="15" fill="#ebff03"/><rect x="1682" y="229" width="15" height="15" fill="#f0ff02"/><rect x="1696" y="229" width="15" height="15" fill="#f4ff01"/><rect x="1710" y="229" width="15" height="15" fill="#f9ff00"/><rect x="1724" y="229" width="15" height="15" fill="#feff00"/><rect x="1738" y="229" width="15" height="15" fill="#fffc00"/><rect x="1752" y="229" width="15" height="15" fill="#fff700"/><rect x="1766" y="229" width="15" height="15" fill="#fff300"/><rect x="1780" y="229" width="15" height="15" fill="#ffef00"/><rect x="1794" y="229" width="15" height="15" fill="#ffea00"/><rect x="1808" y="229" width="15" height="15" fill="#ffe600"/><rect x="1822" y="229" width="15" height="15" fill="#ffe200"/><rect x="1836" y="229" width="15" height="15" fill="#ffdf00"/><rect x="1850" y="229" width="15" height="15" fill="#ffdb00"/><rect x="1864" y="229" width="15" height="15" fill="#ffd700"/><rect x="1584" y="243" width="15" height="15" fill="#d4ff0c"/><rect x="1598" y="243" width="15" height="15" fill="#d8ff0b"/><rect x="1612" y="243" width="15" height="15" fill="#dcff09"/><rect x="1626" y="243" width="15" height="15" fill="#e1ff08"/><rect x="1640" y="243" width="15" height="15" fill="#e5ff07"/><rect x="1654" y="243" width="15" height="15" fill="#eaff06"/><rect x="1668" y="243" width="15" height="15" fill="#eeff05"/><rect x="1682" y="243" width="15" height="15" fill="#f3ff04"/><rect x="1696" y="243" width="15" height="15" fill="#f8ff03"/><rect x="1710" y="243" width="15" height="15" fill="#fcff02"/><rect x="1724" y="243" width="15" height="15" fill="#fffd00"/><rect x="1738" y="243" width="15" height="15" fill="#fff800"/><rect x="1752" y="243" width="15" height="15" fill="#fff400"/><rect x="1766" y="243" width="15" height="15" fill="#fff000"/><rect x="1780" y="243" width="15" height="15" fill="#ffeb00"/><rect x="1794" y="243" width="15" height="15" fill="#ffe700"/><rect x="1808" y="243" width="15" height="15" fill="#ffe300"/><rect x="1822" y="243" width="15" height="15" fill="#ffdf00"/><rect x="1836" y="243" width="15" height="15" fill="#ffdc00"/><rect x="1850" y="243" width="15" height="15" fill="#ffd800"/><rect x="1864" y="243" width="15" height="15" fill="#ffd400"/><rect x="1584" y="257" width="15" height="15" fill="#d7ff0d"/><rect x="1598" y="257" width="15" height="15" fill="#dbff0c"/><rect x="1612" y="257" width="15" height="15" fill="#dfff0b"/><rect x="1626" y="257" width="15" height="15" fill="#e4ff0a"/><rect x="1640" y="257" width="15" height="15" fill="#e8ff09"/><rect x="1654" y="257" width="15" height="15" fill="#edff08"/><rect x="1668" y="257" width="15" height="15" fill="#f2ff07"/><rect x="1682" y="257" width="15" height="15" fill="#f6ff05"/><rect x="1696" y="257" width="15" height="15" fill="#fbff04"/><rect x="1710" y="257" width="15" height="15" fill="#fffe03"/><rect x="1724" y="257" width="15" height="15" fill="#fffa02"/><rect x="1738" y="257" width="15" height="15" fill="#fff501"/><rect x="1752" y="257" width="15" height="15" fill="#fff100"/><rect x="1766" y="257" width="15" height="15" fill="#ffec00"/><rect x="1780" y="257" width="15" height="15" fill="#ffe800"/><rect x="1794" y="257" width="15" height="15" fill="#ffe400"/><rect x="1808" y="257" width="15" height="15" fill="#ffe000"/><rect x="1822" y="257" width="15" height="15" fill="#ffdc00"/><rect x="1836" y="257" width="15" height="15" fill="#ffd900"/><rect x="1850" y="257" width="15" height="15" fill="#ffd500"/><rect x="1864" y="257" width="15" height="15" fill="#ffd100"/><rect x="1584" y="271" width="15" height="15" fill="#d9ff0f"/><rect x="1598" y="271" width="15" height="15" fill="#deff0e"/><rect x="1612" y="271" width="15" height="15" fill="#e2ff0d"/><rect x="1626" y="271" width="15" height="15" fill="#e7ff0c"/><rect x="1640" y="271" width="15" height="15" fill="#ecff0a"/><rect x="1654" y="271" width="15" height="15" fill="#f0ff09"/><rect x="1668" y="271" width="15" height="15" fill="#f5ff08"/><rect x="1682" y="271" width="15" height="15" fill="#faff07"/><rect x="1696" y="271" width="15" height="15" fill="#feff06"/><rect x="1710" y="271" width="15" height="15" fill="#fffb05"/><rect x="1724" y="271" width="15" height="15" fill="#fff604"/><rect x="1738" y="271" width="15" height="15" fill="#fff202"/><rect x="1752" y="271" width="15" height="15" fill="#ffee01"/><rect x="1766" y="271" width="15" height="15" fill="#ffe900"/><rect x="1780" y="271" width="15" height="15" fill="#ffe500"/><rect x="1794" y="271" width="15" height="15" fill="#ffe100"/><rect x="1808" y="271" width="15" height="15" fill="#ffdd00"/><rect x="1822" y="271" width="15" height="15" fill="#ffd900"/><rect x="1836" y="271" width="15" height="15" fill="#ffd600"/><rect x="1850" y="271" width="15" height="15" fill="#ffd200"/><rect x="1864" y="271" width="15" height="15" fill="#ffcf00"/><rect x="1584" y="285" width="15" height="15" fill="#dcff11"/><rect x="1598" y="285" width="15" height="15" fill="#e1ff0f"/><rect x="1612" y="285" width="15" height="15" fill="#e6ff0e"/><rect x="1626" y="285" width="15" height="15" fill="#eaff0d"/><rect x="1640" y="285" width="15" height="15" fill="#efff0c"/><rect x="1654" y="285" width="15" height="15" fill="#f4ff0b"/><rect x="1668" y="285" width="15" height="15" fill="#f8ff0a"/><rect x="1682" y="285" width="15" height="15" fill="#fdff09"/><rect x="1696" y="285" width="15" height="15" fill="#fffc08"/><rect x="1710" y="285" width="15" height="15" fill="#fff806"/><rect x="1724" y="285" width="15" height="15" fill="#fff305"/><rect x="1738" y="285" width="15" height="15" fill="#ffef04"/><rect x="1752" y="285" width="15" height="15" fill="#ffea03"/><rect x="1766" y="285" width="15" height="15" fill="#ffe602"/><rect x="1780" y="285" width="15" height="15" fill="#ffe200"/><rect x="1794" y="285" width="15" height="15" fill="#ffde00"/><rect x="1808" y="285" width="15" height="15" fill="#ffda00"/><rect x="1822" y="285" width="15" height="15" fill="#ffd700"/><rect x="1836" y="285" width="15" height="15" fill="#ffd300"/><rect x="1850" y="285" width="15" height="15" fill="#ffcf00"/><rect x="1864" y="285" width="15" height="15" fill="#ffcc00"/><rect x="1584" y="299" width="15" height="15" fill="#e0ff12"/><rect x="1598" y="299" width="15" height="15" fill="#e4ff11"/><rect x="1612" y="299" width="15" height="15" fill="#e9ff10"/><rect x="1626" y="299" width="15" height="15" fill="#edff0f"/><rect x="1640" y="299" width="15" height="15" fill="#f2ff0e"/><rect x="1654" y="299" width="15" height="15" fill="#f7ff0d"/><rect x="1668" y="299" width="15" height="15" fill="#fcff0c"/><rect x="1682" y="299" width="15" height="15" fill="#fffd0a"/><rect x="1696" y="299" width="15" height="15" fill="#fff909"/><rect x="1710" y="299" width="15" height="15" fill="#fff408"/><rect x="1724" y="299" width="15" height="15" fill="#fff007"/><rect x="1738" y="299" width="15" height="15" fill="#ffeb05"/><rect x="1752" y="299" width="15" height="15" fill="#ffe704"/><rect x="1766" y="299" width="15" height="15" fill="#ffe303"/><rect x="1780" y="299" width="15" height="15" fill="#ffdf02"/><rect x="1794" y="299" width="15" height="15" fill="#ffdb01"/><rect x="1808" y="299" width="15" height="15" fill="#ffd700"/><rect x="1822" y="299" width="15" height="15" fill="#ffd400"/><rect x="1836" y="299" width="15" height="15" fill="#ffd000"/><rect x="1850" y="299" width="15" height="15" fill="#ffcc00"/><rect x="1864" y="299" width="15" height="15" fill="#ffc900"/><rect x="1584" y="313" width="15" height="15" fill="#e3ff14"/><rect x="1598" y="313" width="15" height="15" fill="#e7ff13"/><rect x="1612" y="313" width="15" height="15" fill="#ecff12"/><rect x="1626" y="313" width="15" height="15" fill="#f1ff11"/><rect x="1640" y="313" width="15" height="15" fill="#f6ff10"/><rect x="1654" y="313" width="15" height="15" fill="#faff0e"/><rect x="1668" y="313" width="15" height="15" fill="#ffff0d"/><rect x="1682" y="313" width="15" height="15" fill="#fffa0c"/><rect x="1696" y="313" width="15" height="15" fill="#fff50b"/><rect x="1710" y="313" width="15" height="15" fill="#fff109"/><rect x="1724" y="313" width="15" height="15" fill="#ffec08"/><rect x="1738" y="313" width="15" height="15" fill="#ffe807"/><rect x="1752" y="313" width="15" height="15" fill="#ffe406"/><rect x="1766" y="313" width="15" height="15" fill="#ffe004"/><rect x="1780" y="313" width="15" height="15" fill="#ffdc03"/><rect x="1794" y="313" width="15" height="15" fill="#ffd802"/><rect x="1808" y="313" width="15" height="15" fill="#ffd401"/><rect x="1822" y="313" width="15" height="15" fill="#ffd100"/><rect x="1836" y="313" width="15" height="15" fill="#ffcd00"/><rect x="1850" y="313" width="15" height="15" fill="#ffca00"/><rect x="1864" y="313" width="15" height="15" fill="#ffc600"/><rect x="1584" y="327" width="15" height="15" fill="#e6ff16"/><rect x="1598" y="327" width="15" height="15" fill="#ebff15"/><rect x="1612" y="327" width="15" height="15" fill="#efff14"/><rect x="1626" y="327" width="15" height="15" fill="#f4ff13"/><rect x="1640" y="327" width="15" height="15" fill="#f9ff11"/><rect x="1654" y="327" width="15" height="15" fill="#feff10"/><rect x="1668" y="327" width="15" height="15" fill="#fffb0f"/><rect x="1682" y="327" width="15" height="15" fill="#fff70e"/><rect x="1696" y="327" width="15" height="15" fill="#fff20c"/><rect x="1710" y="327" width="15" height="15" fill="#ffed0b"/><rect x="1724" y="327" width="15" height="15" fill="#ffe90a"/><rect x="1738" y="327" width="15" height="15" fill="#ffe508"/><rect x="1752" y="327" width="15" height="15" fill="#ffe107"/><rect x="1766" y="327" width="15" height="15" fill="#ffdd06"/><rect x="1780" y="327" width="15" height="15" fill="#ffd905"/><rect x="1794" y="327" width="15" height="15" fill="#ffd504"/><rect x="1808" y="327" width="15" height="15" fill="#ffd103"/><rect x="1822" y="327" width="15" height="15" fill="#ffce02"/><rect x="1836" y="327" width="15" height="15" fill="#ffca00"/><rect x="1850" y="327" width="15" height="15" fill="#ffc700"/><rect x="1864" y="327" width="15" height="15" fill="#ffc300"/><rect x="1584" y="341" width="15" height="15" fill="#e9ff18"/><rect x="1598" y="341" width="15" height="15" fill="#eeff17"/><rect x="1612" y="341" width="15" height="15" fill="#f3ff15"/><rect x="1626" y="341" width="15" height="15" fill="#f8ff14"/><rect x="1640" y="341" width="15" height="15" fill="#fcff13"/><rect x="1654" y="341" width="15" height="15" fill="#fffd12"/><rect x="1668" y="341" width="15" height="15" fill="#fff810"/><rect x="1682" y="341" width="15" height="15" fill="#fff30f"/><rect x="1696" y="341" width="15" height="15" fill="#ffef0e"/><rect x="1710" y="341" width="15" height="15" fill="#ffea0c"/><rect x="1724" y="341" width="15" height="15" fill="#ffe60b"/><rect x="1738" y="341" width="15" height="15" fill="#ffe20a"/><rect x="1752" y="341" width="15" height="15" fill="#ffde09"/><rect x="1766" y="341" width="15" height="15" fill="#ffda07"/><rect x="1780" y="341" width="15" height="15" fill="#ffd606"/><rect x="1794" y="341" width="15" height="15" fill="#ffd205"/><rect x="1808" y="341" width="15" height="15" fill="#ffce04"/><rect x="1822" y="341" width="15" height="15" fill="#ffcb03"/><rect x="1836" y="341" width="15" height="15" fill="#ffc702"/><rect x="1850" y="341" width="15" height="15" fill="#ffc401"/><rect x="1864" y="341" width="15" height="15" fill="#ffc100"/><rect x="1584" y="355" width="15" height="15" fill="#ecff1a"/><rect x="1598" y="355" width="15" height="15" fill="#f1ff18"/><rect x="1612" y="355" width="15" height="15" fill="#f6ff17"/><rect x="1626" y="355" width="15" height="15" fill="#fbff16"/><rect x="1640" y="355" width="15" height="15" fill="#fffe15"/><rect x="1654" y="355" width="15" height="15" fill="#fff913"/><rect x="1668" y="355" width="15" height="15" fill="#fff412"/><rect x="1682" y="355" width="15" height="15" fill="#fff011"/><rect x="1696" y="355" width="15" height="15" fill="#ffeb0f"/><rect x="1710" y="355" width="15" height="15" fill="#ffe70e"/><rect x="1724" y="355" width="15" height="15" fill="#ffe30d"/><rect x="1738" y="355" width="15" height="15" fill="#ffdf0b"/><rect x="1752" y="355" width="15" height="15" fill="#ffdb0a"/><rect x="1766" y="355" width="15" height="15" fill="#ffd709"/><rect x="1780" y="355" width="15" height="15" fill="#ffd308"/><rect x="1794" y="355" width="15" height="15" fill="#ffcf06"/><rect x="1808" y="355" width="15" height="15" fill="#ffcc05"/><rect x="1822" y="355" width="15" height="15" fill="#ffc804"/><rect x="1836" y="355" width="15" height="15" fill="#ffc503"/><rect x="1850" y="355" width="15" height="15" fill="#ffc102"/><rect x="1864" y="355" width="15" height="15" fill="#ffbe01"/><rect x="1584" y="369" width="15" height="15" fill="#f0ff1b"/><rect x="1598" y="369" width="15" height="15" fill="#f5ff1a"/><rect x="1612" y="369" width="15" height="15" fill="#faff19"/><rect x="1626" y="369" width="15" height="15" fill="#ffff18"/><rect x="1640" y="369" width="15" height="15" fill="#fffa17"/><rect x="1654" y="369" width="15" height="15" fill="#fff615"/><rect x="1668" y="369" width="15" height="15" fill="#fff114"/><rect x="1682" y="369" width="15" height="15" fill="#ffec12"/><rect x="1696" y="369" width="15" height="15" fill="#ffe811"/><rect x="1710" y="369" width="15" height="15" fill="#ffe40f"/><rect x="1724" y="369" width="15" height="15" fill="#ffdf0e"/><rect x="1738" y="369" width="15" height="15" fill="#ffdb0d"/><rect x="1752" y="369" width="15" height="15" fill="#ffd70b"/><rect x="1766" y="369" width="15" height="15" fill="#ffd40a"/><rect x="1780" y="369" width="15" height="15" fill="#ffd009"/><rect x="1794" y="369" width="15" height="15" fill="#ffcc08"/><rect x="1808" y="369" width="15" height="15" fill="#ffc907"/><rect x="1822" y="369" width="15" height="15" fill="#ffc506"/><rect x="1836" y="369" width="15" height="15" fill="#ffc205"/><rect x="1850" y="369" width="15" height="15" fill="#ffbe03"/><rect x="1864" y="369" width="15" height="15" fill="#ffbb02"/></g>
<path d="M436.9 2415.4 L427.1 2416.2 L426.5 2416.0 L425.7 2415.8 L424.7 2415.4 L423.6 2415.0 L422.5 2414.4 L421.2 2413.7 L419.7 2413.0 L418.2 2412.1 L416.7 2411.2 L415.1 2410.1 L413.3 2408.9 L411.4 2407.6 L409.2 2406.1 L406.8 2404.4 L404.3 2402.6 L401.6 2400.7 L398.8 2398.5 L395.9 2396.3 L392.7 2393.8 L389.3 2391.2 L385.7 2388.6 L381.9 2385.7 L377.7 2382.7 L373.2 2379.4 L368.2 2375.8 L362.8 2372.0 L357.1 2367.8 L351.1 2363.4 L344.8 2358.8 L338.2 2354.0 L331.1 2348.8 L323.7 2343.0 L315.8 2336.7 L307.4 2330.0 L298.6 2322.6 L289.4 2314.4 L279.8 2305.6 L269.9 2296.3 L259.3 2285.6 L247.7 2272.6 L235.1 2257.6 L221.6 2240.8 L207.2 2221.7 L191.9 2199.4 L175.6 2174.6 L158.5 2147.3 L140.2 2116.4 L120.8 2080.8 L100.2 2040.9 L78.5 1996.9 L55.5 1948.0 L31.1 1893.1 L5.0 1832.4 L-22.7 1766.4 L-51.2 1694.2 L-79.6 1615.0 L-108.1 1528.4 L-136.9 1434.8 L-165.6 1335.0 L-193.8 1229.3 L-221.8 1116.4 L-249.9 996.6 L-276.7 872.8 L-301.1 747.9 L-323.3 620.8 L-343.9 490.5 L-361.8 360.4 L-376.0 233.8 L-386.7 110.1 L-394.3 -12.0 L-398.0 -130.2 L-397.1 -242.3 L-391.5 -349.1 L-381.6 -451.4 L-367.2 -546.6 L-348.1 -632.5 L-323.8 -709.2 L-294.6 -777.7 L-261.5 -836.8 L-225.6 -885.2 L-186.3 -921.9 L-143.4 -947.6 L-98.3 -964.4 L-52.2 -974.4 L-4.9 -976.3 L44.0 -969.6 L93.8 -957.6 L143.4 -943.3 L193.0 -926.6 L243.1 -906.1 L292.9 -883.4 L341.8 -860.3 L389.6 -836.9 L436.6 -812.4 L483.0 -787.0 L529.0 -760.9 L574.5 -734.1 L619.5 -706.5 L664.2 -678.2 L708.8 -649.3 L753.4 -619.5 L797.8 -589.1 L842.1 -558.1 L886.2 -526.6 L930.2 -494.5 L974.1 -462.0 L1017.8 -429.0 L1061.6 -395.7 L1105.4 -362.0 L1149.1 -328.0 L1192.8 -293.6 L1236.5 -259.1 L1280.4 -224.2 L1324.3 -189.1 L1368.2 -153.8 L1412.0 -118.4 L1455.7 -82.8 L1499.3 -47.1 L1542.9 -11.4 L1586.4 24.4 L1629.9 60.1 L1673.4 95.8 L1716.8 131.5 L1759.9 167.1 L1802.7 202.6 L1845.4 238.0 L1887.8 273.2 L1929.9 308.2 L1971.7 343.0 L2013.2 377.5 L2054.3 411.8 L2095.0 445.6 L2135.3 479.2 L2175.2 512.4 L2214.5 545.1 L2253.3 577.3 L2291.5 609.0 L2329.2 640.2 L2366.2 670.9 L2402.3 700.9 L2437.5 730.2 L2472.1 759.1 L2505.6 787.1 L2538.0 814.1 L2569.1 840.0 L2599.0 864.9 L2628.0 889.0 L2656.1 912.3 L2683.5 935.1 L2710.0 957.1 L2735.6 978.4 L2760.0 998.6 L2783.1 1017.8 L2805.2 1035.9 L2826.2 1053.2 L2846.2 1069.8 L2865.2 1085.6 L2883.1 1100.5 L2900.1 1114.8 L2916.3 1128.3 L2931.5 1141.0 L2945.8 1152.9 L2959.3 1164.2 L2972.1 1174.9 L2984.3 1184.9 L2995.7 1194.3 L3006.5 1203.2 L3016.7 1211.7 L3026.4 1219.8 L3035.5 1227.4 L3044.2 1234.6 L3052.5 1241.6 L3060.5 1248.2 L3068.1 1254.6 L3075.4 1260.7 L3082.4 1266.5 L3089.0 1272.0 L3095.3 1277.3 L3101.2 1282.3 L3106.9 1287.0 L3112.2 1291.3 L3117.3 1295.4 L3122.0 1299.3 L3126.5 1302.9 L3130.6 1306.3 L3134.4 1309.4 L3137.9 1312.4 L3141.2 1315.2 L3144.3 1317.8 L3147.2 1320.2 L3149.9 1322.5 L3152.4 1324.6 L3154.4 1326.2 L3155.9 1327.4 L3157.7 1329.0 L3160.8 1331.5 L3166.0 1335.9 L3172.8 1341.6 L3179.3 1347.0 L3183.8 1350.8Z M2915.8 1127.0 L882.3 -386.3 L318.8 2190.4Z" fill="#000" fill-opacity="0.40" fill-rule="evenodd"/>
</g></g>
<rect x="1721.8" y="236.8" width="14.5" height="14.5" fill="none" stroke="#ffffff" stroke-width="1.5" stroke-opacity="0.95"/>
<circle cx="1755.5" cy="247.1" r="4.6" fill="#a8a414" stroke="#101010" stroke-width="1.1"/>
<text x="67.5" y="776" font-size="32" fill="#f2f2f2" textLength="238" lengthAdjust="spacingAndGlyphs">Current Reading</text>
<text x="67.5" y="821.8" font-size="27.3" fill="#f2f2f2" textLength="112" lengthAdjust="spacingAndGlyphs">x: 0,4434</text>
<text x="67.5" y="865.6" font-size="27.3" fill="#f2f2f2" textLength="112" lengthAdjust="spacingAndGlyphs">y: 0,5353</text>
<text x="67.5" y="910" font-size="27.3" fill="#f2f2f2" textLength="105" lengthAdjust="spacingAndGlyphs">fL: 61,82</text>
<text x="67.5" y="954.1" font-size="27.3" fill="#f2f2f2" textLength="173" lengthAdjust="spacingAndGlyphs">cd/m&#178;: 211,83</text>
<text x="560" y="746.5" font-size="15" fill="#d4d4d4" text-anchor="middle" textLength="90" lengthAdjust="spacingAndGlyphs">RGB Balance</text>
<rect x="436.8" y="754.4" width="275.2" height="194.70000000000005" fill="#262626" />
<line x1="436.8" y1="803.2" x2="712" y2="803.2" stroke="#8e8e8e" stroke-width="1.4" />
<line x1="436.8" y1="852.4" x2="712" y2="852.4" stroke="#8e8e8e" stroke-width="1.4" />
<line x1="436.8" y1="900.7" x2="712" y2="900.7" stroke="#8e8e8e" stroke-width="1.4" />
<rect x="436.8" y="754.4" width="275.2" height="194.70000000000005" fill="none" stroke="#8e8e8e" stroke-width="1.6"/>
<line x1="436.0" y1="754.0" x2="712.8" y2="754.0" stroke="#8e8e8e" stroke-width="2.8" />
<line x1="430.8" y1="754.4" x2="436.8" y2="754.4" stroke="#d0d0d0" stroke-width="1.1" />
<text x="429.8" y="759.6" font-size="14.5" fill="#d4d4d4" text-anchor="end">20</text>
<line x1="430.8" y1="803.2" x2="436.8" y2="803.2" stroke="#d0d0d0" stroke-width="1.1" />
<text x="429.8" y="808.4000000000001" font-size="14.5" fill="#d4d4d4" text-anchor="end">10</text>
<line x1="430.8" y1="852.4" x2="436.8" y2="852.4" stroke="#d0d0d0" stroke-width="1.1" />
<text x="429.8" y="857.6" font-size="14.5" fill="#d4d4d4" text-anchor="end">0</text>
<line x1="430.8" y1="900.7" x2="436.8" y2="900.7" stroke="#d0d0d0" stroke-width="1.1" />
<text x="429.8" y="905.9000000000001" font-size="14.5" fill="#d4d4d4" text-anchor="end">-10</text>
<line x1="430.8" y1="949.1" x2="436.8" y2="949.1" stroke="#d0d0d0" stroke-width="1.1" />
<text x="429.8" y="954.3000000000001" font-size="14.5" fill="#d4d4d4" text-anchor="end">-20</text>
<line x1="436.8" y1="949.1" x2="436.8" y2="956.1" stroke="#e6e6e6" stroke-width="1.6" />
<line x1="712" y1="949.1" x2="712" y2="956.1" stroke="#e6e6e6" stroke-width="1.6" />
<text x="574.7" y="967" font-size="14.5" fill="#d4d4d4" text-anchor="middle" textLength="38" lengthAdjust="spacingAndGlyphs">100%</text>
<rect x="465" y="782.5" width="73" height="70.5" fill="#000"/>
<rect x="466" y="783.5" width="71" height="68.5" fill="url(#vr)"/>
<rect x="538.5" y="800.3" width="73.0" height="52.700000000000045" fill="#000"/>
<rect x="539.5" y="801.3" width="71.0" height="50.700000000000045" fill="url(#vg)"/>
<rect x="612" y="852" width="74" height="61" fill="#000"/>
<rect x="613" y="853" width="72" height="59" fill="url(#vb)"/>
<rect x="736" y="727.7" width="785" height="33.0" fill="url(#th)" />
<rect x="736" y="727.7" width="21.5" height="33.0" fill="#000" />
<rect x="736" y="760.7" width="785" height="31.199999999999978" fill="#414141" />
<rect x="736" y="760.7" width="21.5" height="31.199999999999978" fill="#2b2b2b" />
<rect x="736" y="760.7" width="21.5" height="1" fill="#363636" />
<rect x="736" y="791.6" width="785" height="31.599999999999955" fill="#808080" />
<rect x="736" y="791.6" width="21.5" height="31.599999999999955" fill="#2b2b2b" />
<rect x="736" y="791.6" width="21.5" height="1" fill="#363636" />
<rect x="736" y="822.9" width="785" height="31.199999999999978" fill="#414141" />
<rect x="736" y="822.9" width="21.5" height="31.199999999999978" fill="#2b2b2b" />
<rect x="736" y="822.9" width="21.5" height="1" fill="#363636" />
<rect x="736" y="853.8" width="785" height="31.60000000000007" fill="#808080" />
<rect x="736" y="853.8" width="21.5" height="31.60000000000007" fill="#2b2b2b" />
<rect x="736" y="853.8" width="21.5" height="1" fill="#363636" />
<rect x="736" y="885.1" width="785" height="31.199999999999978" fill="#414141" />
<rect x="736" y="885.1" width="21.5" height="31.199999999999978" fill="#2b2b2b" />
<rect x="736" y="885.1" width="21.5" height="1" fill="#363636" />
<rect x="736" y="916.0" width="785" height="30.900000000000023" fill="#808080" />
<rect x="736" y="916.0" width="21.5" height="30.900000000000023" fill="#2b2b2b" />
<rect x="736" y="916.0" width="21.5" height="1" fill="#363636" />
<text x="938.7" y="750.8" font-size="19.5" fill="#f4f4f4" textLength="45" lengthAdjust="spacingAndGlyphs">20%</text>
<text x="1056.7" y="750.8" font-size="19.5" fill="#f4f4f4" textLength="45" lengthAdjust="spacingAndGlyphs">40%</text>
<text x="1174.6" y="750.8" font-size="19.5" fill="#f4f4f4" textLength="45" lengthAdjust="spacingAndGlyphs">60%</text>
<text x="1292.5" y="750.8" font-size="19.5" fill="#f4f4f4" textLength="45" lengthAdjust="spacingAndGlyphs">80%</text>
<text x="1410.5" y="750.8" font-size="19.5" fill="#f4f4f4" textLength="58" lengthAdjust="spacingAndGlyphs">100%</text>
<text x="764.3" y="784.1" font-size="19.5" fill="#f4f4f4" textLength="86" lengthAdjust="spacingAndGlyphs">x: CIE31</text>
<text x="938.7" y="784.1" font-size="19.5" fill="#f4f4f4" textLength="74.5" lengthAdjust="spacingAndGlyphs">0,3404</text>
<text x="1056.7" y="784.1" font-size="19.5" fill="#f4f4f4" textLength="74.5" lengthAdjust="spacingAndGlyphs">0,3660</text>
<text x="1174.6" y="784.1" font-size="19.5" fill="#f4f4f4" textLength="74.5" lengthAdjust="spacingAndGlyphs">0,3916</text>
<text x="1292.5" y="784.1" font-size="19.5" fill="#f4f4f4" textLength="74.5" lengthAdjust="spacingAndGlyphs">0,4181</text>
<text x="1410.5" y="784.1" font-size="19.5" fill="#f4f4f4" textLength="74.5" lengthAdjust="spacingAndGlyphs">0,4434</text>
<text x="764.3" y="815.0" font-size="19.5" fill="#f4f4f4" textLength="86" lengthAdjust="spacingAndGlyphs">y: CIE31</text>
<text x="938.7" y="815.0" font-size="19.5" fill="#f4f4f4" textLength="74.5" lengthAdjust="spacingAndGlyphs">0,3749</text>
<text x="1056.7" y="815.0" font-size="19.5" fill="#f4f4f4" textLength="74.5" lengthAdjust="spacingAndGlyphs">0,4146</text>
<text x="1174.6" y="815.0" font-size="19.5" fill="#f4f4f4" textLength="74.5" lengthAdjust="spacingAndGlyphs">0,4544</text>
<text x="1292.5" y="815.0" font-size="19.5" fill="#f4f4f4" textLength="74.5" lengthAdjust="spacingAndGlyphs">0,4958</text>
<text x="1410.5" y="815.0" font-size="19.5" fill="#f4f4f4" textLength="74.5" lengthAdjust="spacingAndGlyphs">0,5353</text>
<text x="764.3" y="845.5" font-size="19.5" fill="#f4f4f4" textLength="13" lengthAdjust="spacingAndGlyphs">Y</text>
<text x="938.7" y="845.5" font-size="19.5" fill="#f4f4f4" textLength="102" lengthAdjust="spacingAndGlyphs">198,3815</text>
<text x="1056.7" y="845.5" font-size="19.5" fill="#f4f4f4" textLength="102" lengthAdjust="spacingAndGlyphs">196,4720</text>
<text x="1174.6" y="845.5" font-size="19.5" fill="#f4f4f4" textLength="102" lengthAdjust="spacingAndGlyphs">195,0134</text>
<text x="1292.5" y="845.5" font-size="19.5" fill="#f4f4f4" textLength="102" lengthAdjust="spacingAndGlyphs">194,1395</text>
<text x="1410.5" y="845.5" font-size="19.5" fill="#f4f4f4" textLength="102" lengthAdjust="spacingAndGlyphs">211,8280</text>
<text x="764.3" y="877.1999999999999" font-size="19.5" fill="#f4f4f4" textLength="157" lengthAdjust="spacingAndGlyphs">Target x:CIE31</text>
<text x="938.7" y="877.1999999999999" font-size="19.5" fill="#f4f4f4" textLength="74.5" lengthAdjust="spacingAndGlyphs">0,3384</text>
<text x="1056.7" y="877.1999999999999" font-size="19.5" fill="#f4f4f4" textLength="74.5" lengthAdjust="spacingAndGlyphs">0,3619</text>
<text x="1174.6" y="877.1999999999999" font-size="19.5" fill="#f4f4f4" textLength="74.5" lengthAdjust="spacingAndGlyphs">0,3869</text>
<text x="1292.5" y="877.1999999999999" font-size="19.5" fill="#f4f4f4" textLength="74.5" lengthAdjust="spacingAndGlyphs">0,4127</text>
<text x="1410.5" y="877.1999999999999" font-size="19.5" fill="#f4f4f4" textLength="74.5" lengthAdjust="spacingAndGlyphs">0,4378</text>
<text x="764.3" y="907.7" font-size="19.5" fill="#f4f4f4" textLength="157" lengthAdjust="spacingAndGlyphs">Target y:CIE31</text>
<text x="938.7" y="907.7" font-size="19.5" fill="#f4f4f4" textLength="74.5" lengthAdjust="spacingAndGlyphs">0,3714</text>
<text x="1056.7" y="907.7" font-size="19.5" fill="#f4f4f4" textLength="74.5" lengthAdjust="spacingAndGlyphs">0,4103</text>
<text x="1174.6" y="907.7" font-size="19.5" fill="#f4f4f4" textLength="74.5" lengthAdjust="spacingAndGlyphs">0,4517</text>
<text x="1292.5" y="907.7" font-size="19.5" fill="#f4f4f4" textLength="74.5" lengthAdjust="spacingAndGlyphs">0,4944</text>
<text x="1410.5" y="907.7" font-size="19.5" fill="#f4f4f4" textLength="74.5" lengthAdjust="spacingAndGlyphs">0,5359</text>
<text x="764.3" y="938.6" font-size="19.5" fill="#f4f4f4" textLength="91" lengthAdjust="spacingAndGlyphs">Target Y</text>
<text x="938.7" y="938.6" font-size="19.5" fill="#f4f4f4" textLength="102" lengthAdjust="spacingAndGlyphs">199,2604</text>
<text x="1056.7" y="938.6" font-size="19.5" fill="#f4f4f4" textLength="102" lengthAdjust="spacingAndGlyphs">195,6876</text>
<text x="1174.6" y="938.6" font-size="19.5" fill="#f4f4f4" textLength="102" lengthAdjust="spacingAndGlyphs">192,6650</text>
<text x="1292.5" y="938.6" font-size="19.5" fill="#f4f4f4" textLength="102" lengthAdjust="spacingAndGlyphs">190,1483</text>
<text x="1410.5" y="938.6" font-size="19.5" fill="#f4f4f4" textLength="102" lengthAdjust="spacingAndGlyphs">188,1352</text>
<rect x="0" y="978" width="1912" height="62" fill="url(#bs)" />
<path d="M0 1040V981a3 3 0 0 1 3 -3H43a3 3 0 0 1 3 3V1040Z" fill="url(#tl)"/>
<circle cx="23.5" cy="986.5" r="7.5" fill="#7a7a7a"/><path d="M19.6 988.6h7.8l-3.9 -4.4z" fill="#1c1c1c"/>
<rect x="6.5" y="1004.5" width="35" height="29.5" rx="3" fill="#ffff00"/>
<rect x="46" y="978" width="6" height="62" fill="#363636" />
<path d="M52 1040V982a4 4 0 0 1 4 -4H198a4 4 0 0 1 4 4V1040Z" fill="url(#tl)"/>
<rect x="57.7" y="983.5" width="139.6" height="36" rx="3.5" fill="#7c7c6c"/>
<rect x="58.5" y="984.3" width="138" height="34.6" rx="3" fill="#c2c2a1"/>
<text x="127.3" y="1033.6" font-size="10.8" fill="#303030" text-anchor="middle" font-weight="bold">20%</text>
<rect x="202" y="980" width="2" height="60" fill="#2a2a2a" />
<path d="M204 1040V982a4 4 0 0 1 4 -4H350a4 4 0 0 1 4 4V1040Z" fill="url(#tl)"/>
<rect x="209.7" y="983.5" width="139.6" height="36" rx="3.5" fill="#7c7c6c"/>
<rect x="210.5" y="984.3" width="138" height="34.6" rx="3" fill="#c4c282"/>
<text x="279.3" y="1033.6" font-size="10.8" fill="#303030" text-anchor="middle" font-weight="bold">40%</text>
<rect x="354" y="980" width="2" height="60" fill="#2a2a2a" />
<path d="M356 1040V982a4 4 0 0 1 4 -4H502a4 4 0 0 1 4 4V1040Z" fill="url(#tl)"/>
<rect x="361.7" y="983.5" width="139.6" height="36" rx="3.5" fill="#7c7c6c"/>
<rect x="362.5" y="984.3" width="138" height="34.6" rx="3" fill="#c5c15d"/>
<text x="431.3" y="1033.6" font-size="10.8" fill="#303030" text-anchor="middle" font-weight="bold">60%</text>
<rect x="506" y="980" width="2" height="60" fill="#2a2a2a" />
<path d="M508 1040V982a4 4 0 0 1 4 -4H654a4 4 0 0 1 4 4V1040Z" fill="url(#tl)"/>
<rect x="513.7" y="983.5" width="139.6" height="36" rx="3.5" fill="#7c7c6c"/>
<rect x="514.5" y="984.3" width="138" height="34.6" rx="3" fill="#c7c148"/>
<text x="583.3" y="1033.6" font-size="10.8" fill="#303030" text-anchor="middle" font-weight="bold">80%</text>
<rect x="658" y="980" width="2" height="60" fill="#2a2a2a" />
<path d="M660 1040V982a4 4 0 0 1 4 -4H806a4 4 0 0 1 4 4V1040Z" fill="url(#tls)"/>
<rect x="665.3" y="982.8" width="140.4" height="37" rx="3.5" fill="#c8c400"/>
<text x="735.3" y="1033.6" font-size="10.8" fill="#ffffff" text-anchor="middle" font-weight="bold">100%</text>
<path d="M1597 996V981a3 3 0 0 1 3 -3H1642a3 3 0 0 1 3 3V996Z" fill="url(#cb)"/>
<circle cx="1621.5" cy="986.5" r="7.5" fill="#8a8a8a"/><path d="M1617.6 988.6h7.8l-3.9 -4.4z" fill="#2a2a2a"/>
<rect x="1597" y="997" width="48" height="43" fill="url(#cb)" />
<rect x="1606.5" y="1003.5" width="28" height="28" rx="3" fill="#b0b0b0" stroke="#1e1e1e" stroke-width="2"/><rect x="1614" y="1011" width="13.5" height="13.5" fill="#050505"/>
<rect x="1646.8" y="978" width="44.8" height="30" fill="url(#cb)" />
<circle cx="1669.2" cy="993" r="10" fill="#8c8c8c" opacity="0.8"/>
<rect x="1692.8" y="978" width="44.19999999999986" height="30" fill="url(#cb)" />
<circle cx="1714.9" cy="993" r="10" fill="#8c8c8c" opacity="0.8"/>
<rect x="1738.1999999999998" y="978" width="43.60000000000018" height="30" fill="url(#cb)" />
<circle cx="1760.0" cy="993" r="10" fill="#8c8c8c" opacity="0.8"/>
<rect x="1783.0" y="978" width="43.899999999999906" height="30" fill="url(#cb)" />
<circle cx="1805.0" cy="993" r="10" fill="#8c8c8c" opacity="0.8"/>
<rect x="1828.1" y="978" width="43.3" height="30" fill="url(#cb)" />
<circle cx="1849.8" cy="993" r="10" fill="#8c8c8c" opacity="0.8"/>
<rect x="1665.4" y="989.2" width="7.6" height="7.6" fill="#2a2a2a"/>
<path d="M1711.7 988.3v9.4l7.6 -4.7z" fill="#2a2a2a"/>
<path d="M1757.0 988.5h-2.5v9h2.5M1763.0 988.5h2.5v9h-2.5" stroke="#2a2a2a" stroke-width="1.6" fill="none"/><path d="M1757.5 993h5" stroke="#2a2a2a" stroke-width="1.5" stroke-dasharray="1.2 1"/>
<path d="M1805.0 993c-2 -3.4 -6 -3.4 -6 0s4 3.4 6 0s6 -3.4 6 0s-4 3.4 -6 0z" stroke="#2a2a2a" stroke-width="1.7" fill="none"/>
<path d="M1845.2 992a4.8 4.8 0 0 1 8.4 -2.4M1854.3 994a4.8 4.8 0 0 1 -8.4 2.4" stroke="#2a2a2a" stroke-width="1.9" fill="none"/><path d="M1851.3 990.6l4.4 0.6l-0.4 -4.4zM1848.2 995.4l-4.4 -0.6l0.4 4.4z" fill="#2a2a2a"/>
<rect x="1872.7" y="978" width="40" height="30" fill="url(#dk)" />
<circle cx="1895.7" cy="992.6" r="9.6" fill="#313131"/>
<rect x="1646.2" y="1009.3" width="136" height="31" fill="url(#cb2)" />
<rect x="1783.2" y="1009.3" width="130" height="31" fill="url(#cb2)" />
<circle cx="1676.5" cy="1024.5" r="9" fill="#a4a4a4"/><circle cx="1890.5" cy="1024.5" r="9" fill="#a4a4a4"/>
<path d="M1675.6 1020.5l-3.6 4l3.6 4M1680.4 1020.5l-3.6 4l3.6 4" stroke="#3a3a3a" stroke-width="1.5" fill="none"/>
<path d="M1886.6 1020.5l3.6 4l-3.6 4M1891.4 1020.5l3.6 4l-3.6 4" stroke="#3a3a3a" stroke-width="1.5" fill="none"/>
<text x="1704" y="1031.8" font-size="21" fill="#343434" textLength="49.5" lengthAdjust="spacingAndGlyphs" stroke="#343434" stroke-width="0.45">Back</text>
<text x="1810.4" y="1031.8" font-size="21" fill="#343434" textLength="51.5" lengthAdjust="spacingAndGlyphs" stroke="#343434" stroke-width="0.45">Next</text>
<line x1="0.5" y1="23" x2="0.5" y2="1040" stroke="#1c1c1c" stroke-width="1"/><line x1="0.5" y1="23" x2="0.5" y2="1040" stroke="#d4d4d4" stroke-width="1" stroke-dasharray="1 1"/>
<line x1="0" y1="1039.5" x2="1912" y2="1039.5" stroke="#1c1c1c" stroke-width="1"/><line x1="0" y1="1039.5" x2="1912" y2="1039.5" stroke="#d4d4d4" stroke-width="1" stroke-dasharray="1 1"/>
</svg>
</body></html>
